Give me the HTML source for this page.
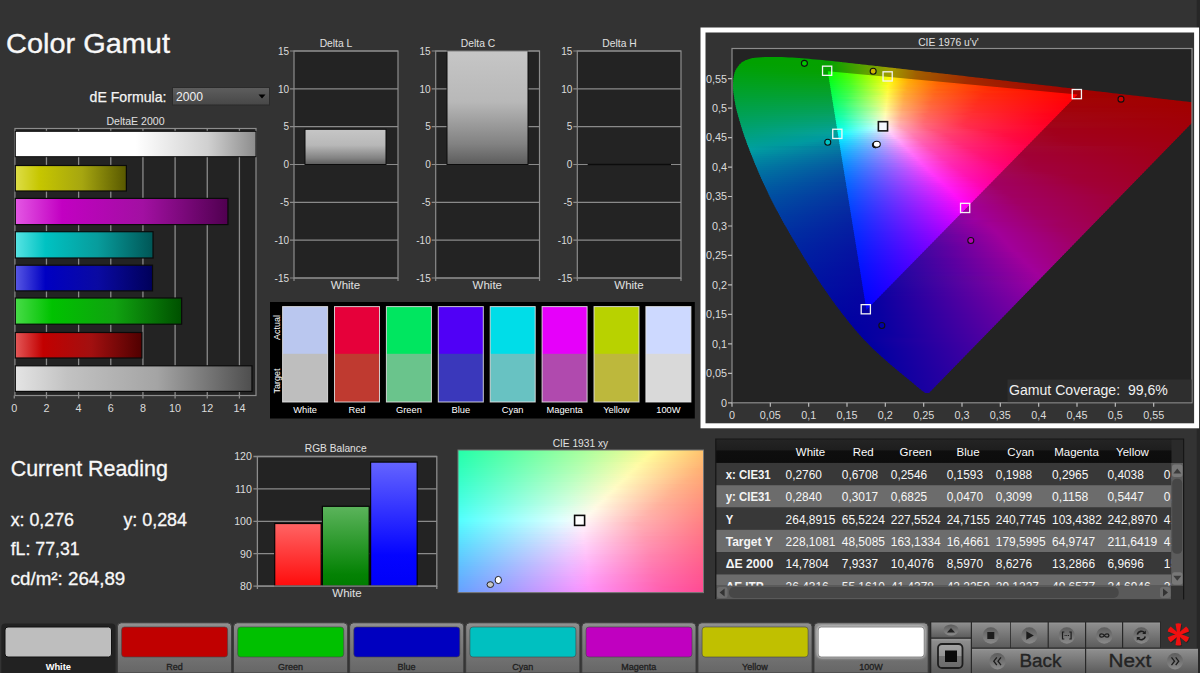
<!DOCTYPE html>
<html lang="en"><head><meta charset="utf-8"><title>Color Gamut</title>
<style>
html,body{margin:0;padding:0;background:#333;}
body{width:1200px;height:673px;position:relative;overflow:hidden;font-family:'Liberation Sans', sans-serif;}
</style></head><body>
<svg width="1200" height="673" viewBox="0 0 1200 673" font-family="'Liberation Sans', sans-serif" style="position:absolute;left:0;top:0"><defs><linearGradient id="dd" x1="0" y1="0" x2="0" y2="1"><stop offset="0" stop-color="#5e5e5e"/><stop offset="1" stop-color="#474747"/></linearGradient><linearGradient id="hb0" x1="0" y1="0" x2="1" y2="0"><stop offset="0" stop-color="#fff"/><stop offset=".5" stop-color="#fff"/><stop offset=".8" stop-color="#d0d0d0"/><stop offset="1" stop-color="#8c8c8c"/></linearGradient><linearGradient id="hb1" x1="0" y1="0" x2="1" y2="0"><stop offset="0" stop-color="#dede48"/><stop offset=".22" stop-color="#c6c600"/><stop offset=".6" stop-color="#a6a610"/><stop offset="1" stop-color="#585800"/></linearGradient><linearGradient id="hb2" x1="0" y1="0" x2="1" y2="0"><stop offset="0" stop-color="#e458e4"/><stop offset=".22" stop-color="#c200c2"/><stop offset=".6" stop-color="#a210a2"/><stop offset="1" stop-color="#500050"/></linearGradient><linearGradient id="hb3" x1="0" y1="0" x2="1" y2="0"><stop offset="0" stop-color="#58e4e4"/><stop offset=".22" stop-color="#00c2c2"/><stop offset=".6" stop-color="#089c9c"/><stop offset="1" stop-color="#005656"/></linearGradient><linearGradient id="hb4" x1="0" y1="0" x2="1" y2="0"><stop offset="0" stop-color="#5858e4"/><stop offset=".22" stop-color="#0000c2"/><stop offset=".6" stop-color="#0a0aa2"/><stop offset="1" stop-color="#00005a"/></linearGradient><linearGradient id="hb5" x1="0" y1="0" x2="1" y2="0"><stop offset="0" stop-color="#48dc48"/><stop offset=".22" stop-color="#00c200"/><stop offset=".6" stop-color="#10a210"/><stop offset="1" stop-color="#005000"/></linearGradient><linearGradient id="hb6" x1="0" y1="0" x2="1" y2="0"><stop offset="0" stop-color="#e45858"/><stop offset=".22" stop-color="#c20000"/><stop offset=".6" stop-color="#a21010"/><stop offset="1" stop-color="#500000"/></linearGradient><linearGradient id="hb7" x1="0" y1="0" x2="1" y2="0"><stop offset="0" stop-color="#e4e4e4"/><stop offset=".22" stop-color="#c2c2c2"/><stop offset=".6" stop-color="#a4a4a4"/><stop offset="1" stop-color="#4e4e4e"/></linearGradient><linearGradient id="vb" x1="0" y1="0" x2="0" y2="1"><stop offset="0" stop-color="#c6c6c6"/><stop offset=".45" stop-color="#b8b8b8"/><stop offset=".82" stop-color="#828282"/><stop offset="1" stop-color="#5c5c5c"/></linearGradient><clipPath id="loc"><path d="M928.88 393.02L925.64 392.95L922.79 391.24L920.17 389.06L917.55 386.95L914.99 384.76L912.43 382.58L909.84 380.44L907.23 378.31L904.62 376.18L902.02 374.05L899.43 371.91L896.85 369.74L894.27 367.58L891.7 365.41L889.13 363.24L886.57 361.05L884.03 358.84L881.51 356.61L879.02 354.35L876.56 352.06L874.13 349.73L871.72 347.38L869.34 345L866.99 342.6L864.66 340.17L862.36 337.71L860.09 335.23L857.86 332.71L855.66 330.17L853.49 327.59L851.35 325L849.23 322.38L847.12 319.75L845.04 317.11L842.96 314.46L840.91 311.8L838.87 309.12L836.85 306.43L834.86 303.72L832.88 301L830.92 298.26L828.97 295.51L827.05 292.76L825.13 289.99L823.23 287.21L821.34 284.43L819.46 281.64L817.59 278.84L815.75 276.03L813.91 273.21L812.1 270.37L810.29 267.53L808.51 264.68L806.73 261.82L804.97 258.96L803.21 256.08L801.47 253.2L799.74 250.32L798.01 247.43L796.3 244.54L794.59 241.64L792.88 238.74L791.18 235.83L789.49 232.92L787.81 230.01L786.13 227.09L784.47 224.16L782.82 221.23L781.19 218.28L779.57 215.33L777.97 212.37L776.39 209.4L774.83 206.42L773.29 203.43L771.77 200.43L770.28 197.42L768.8 194.4L767.34 191.37L765.9 188.32L764.47 185.27L763.07 182.22L761.68 179.15L760.31 176.07L758.96 172.99L757.63 169.9L756.32 166.8L755.03 163.69L753.76 160.58L752.5 157.46L751.26 154.33L750.02 151.2L748.81 148.06L747.61 144.91L746.44 141.75L745.29 138.58L744.18 135.41L743.11 132.22L742.08 129.02L741.09 125.8L740.13 122.58L739.17 119.35L738.24 116.1L737.35 112.85L736.51 109.58L735.76 106.3L735.1 103.01L734.55 99.7L734.03 96.36L733.55 93L733.18 89.63L733 86.27L733.08 82.93L733.38 79.56L733.84 76.16L734.62 72.87L735.89 69.81L737.64 66.89L739.8 64.23L742.31 62.07L745.27 60.44L748.46 59.2L751.68 58.28L755.01 57.76L758.38 57.44L761.73 57.17L765.1 57.04L768.46 56.99L771.83 56.96L775.19 56.97L778.56 57.03L781.92 57.12L785.28 57.25L788.64 57.41L792 57.59L795.36 57.8L798.72 58.03L802.07 58.29L805.43 58.56L808.78 58.84L812.13 59.14L815.48 59.45L818.83 59.77L822.18 60.1L825.53 60.43L828.87 60.77L832.22 61.12L835.57 61.47L838.91 61.82L842.26 62.18L845.6 62.55L848.95 62.91L852.29 63.28L855.63 63.65L858.98 64.02L862.32 64.4L865.66 64.77L869.01 65.15L872.35 65.52L875.69 65.9L879.04 66.28L882.38 66.66L885.72 67.03L889.07 67.41L892.41 67.8L895.75 68.18L899.09 68.56L902.44 68.95L905.78 69.33L909.12 69.71L912.46 70.1L915.81 70.48L919.15 70.87L922.49 71.25L925.83 71.64L929.17 72.02L932.52 72.41L935.86 72.79L939.2 73.17L942.54 73.56L945.89 73.94L949.23 74.33L952.57 74.71L955.91 75.1L959.26 75.48L962.6 75.86L965.94 76.25L969.28 76.63L972.63 77.01L975.97 77.39L979.31 77.78L982.65 78.16L986 78.54L989.34 78.93L992.68 79.31L996.02 79.7L999.36 80.09L1002.71 80.47L1006.05 80.86L1009.39 81.24L1012.73 81.63L1016.08 82.02L1019.42 82.4L1022.76 82.78L1026.1 83.17L1029.44 83.55L1032.79 83.94L1036.13 84.32L1039.47 84.7L1042.81 85.09L1046.16 85.47L1049.5 85.86L1052.84 86.24L1056.18 86.62L1059.53 87.01L1062.87 87.39L1066.21 87.77L1069.55 88.16L1072.9 88.54L1076.24 88.92L1079.58 89.3L1082.92 89.68L1086.27 90.06L1089.61 90.44L1092.95 90.82L1096.3 91.2L1099.64 91.59L1102.98 91.97L1106.32 92.36L1109.66 92.75L1113.01 93.13L1116.35 93.52L1119.69 93.91L1123.03 94.29L1126.37 94.68L1129.72 95.06L1133.06 95.45L1136.4 95.83L1139.74 96.21L1143.09 96.6L1146.43 96.98L1149.77 97.36L1153.11 97.75L1156.46 98.13L1159.8 98.51L1163.14 98.9L1166.48 99.29L1169.83 99.67L1173.17 100.06L1176.51 100.44L1179.85 100.83L1183.2 101.21L1186.54 101.58L1189.88 101.96L1193.22 102.35L1196.57 102.73L1199.91 103.12L1203.25 103.5L1206.59 103.89L1209.93 104.27Z"/></clipPath><clipPath id="plotc"><rect x="732.0" y="48.5" width="460.0" height="354.3"/></clipPath><clipPath id="tri"><path d="M1077.54 94.61L827.83 71.26L866.5 309.74Z"/></clipPath><linearGradient id="g1" gradientUnits="userSpaceOnUse" x1="751.96" x2="799.72" y1="0" y2="0"><stop offset="0" stop-color="#00a100"/><stop offset="1" stop-color="#00a100"/></linearGradient><linearGradient id="g2" gradientUnits="userSpaceOnUse" x1="744.89" x2="822.7" y1="0" y2="0"><stop offset="0" stop-color="#00a100"/><stop offset="1" stop-color="#00a100"/></linearGradient><linearGradient id="g3" gradientUnits="userSpaceOnUse" x1="740.95" x2="842.05" y1="0" y2="0"><stop offset="0" stop-color="#00a100"/><stop offset=".87" stop-color="#06a100"/><stop offset="1" stop-color="#21a100"/></linearGradient><linearGradient id="g4" gradientUnits="userSpaceOnUse" x1="738.57" x2="860.28" y1="0" y2="0"><stop offset="0" stop-color="#00a100"/><stop offset=".75" stop-color="#06a100"/><stop offset="1" stop-color="#4ca100"/></linearGradient><linearGradient id="g5" gradientUnits="userSpaceOnUse" x1="736.87" x2="878.07" y1="0" y2="0"><stop offset="0" stop-color="#00a103"/><stop offset=".65" stop-color="#05a100"/><stop offset=".99" stop-color="#7aa100"/><stop offset="1" stop-color="#7da100"/></linearGradient><linearGradient id="g6" gradientUnits="userSpaceOnUse" x1="735.48" x2="895.69" y1="0" y2="0"><stop offset="0" stop-color="#00a106"/><stop offset=".59" stop-color="#06a100"/><stop offset=".89" stop-color="#7ca100"/><stop offset=".97" stop-color="#a19c00"/><stop offset="1" stop-color="#a18d00"/></linearGradient><linearGradient id="g7" gradientUnits="userSpaceOnUse" x1="734.31" x2="913.12" y1="0" y2="0"><stop offset="0" stop-color="#00a109"/><stop offset=".54" stop-color="#06a100"/><stop offset=".79" stop-color="#78a100"/><stop offset=".88" stop-color="#a19a00"/><stop offset="1" stop-color="#a16700"/></linearGradient><linearGradient id="g8" gradientUnits="userSpaceOnUse" x1="733.48" x2="930.49" y1="0" y2="0"><stop offset="0" stop-color="#00a10c"/><stop offset=".49" stop-color="#05a100"/><stop offset=".72" stop-color="#74a100"/><stop offset=".8" stop-color="#a19b00"/><stop offset=".93" stop-color="#a16000"/><stop offset="1" stop-color="#a14d00"/></linearGradient><linearGradient id="g9" gradientUnits="userSpaceOnUse" x1="732.85" x2="947.87" y1="0" y2="0"><stop offset="0" stop-color="#00a10f"/><stop offset=".45" stop-color="#05a103"/><stop offset=".67" stop-color="#7ba100"/><stop offset=".73" stop-color="#a19c00"/><stop offset=".86" stop-color="#a15d00"/><stop offset="1" stop-color="#a13a00"/></linearGradient><linearGradient id="g10" gradientUnits="userSpaceOnUse" x1="732.37" x2="965.28" y1="0" y2="0"><stop offset="0" stop-color="#00a112"/><stop offset=".42" stop-color="#06a107"/><stop offset=".62" stop-color="#7ca100"/><stop offset=".68" stop-color="#a19b00"/><stop offset=".79" stop-color="#a15f00"/><stop offset="1" stop-color="#a12d00"/></linearGradient><linearGradient id="g11" gradientUnits="userSpaceOnUse" x1="732.09" x2="982.77" y1="0" y2="0"><stop offset="0" stop-color="#00a115"/><stop offset=".39" stop-color="#05a10b"/><stop offset=".57" stop-color="#78a103"/><stop offset=".63" stop-color="#a19b00"/><stop offset=".74" stop-color="#a15c00"/><stop offset=".95" stop-color="#a12800"/><stop offset="1" stop-color="#a12200"/></linearGradient><linearGradient id="g12" gradientUnits="userSpaceOnUse" x1="732" x2="1000.13" y1="0" y2="0"><stop offset="0" stop-color="#00a118"/><stop offset=".37" stop-color="#06a10f"/><stop offset=".54" stop-color="#77a108"/><stop offset=".59" stop-color="#a19c05"/><stop offset=".68" stop-color="#a15f00"/><stop offset=".88" stop-color="#a12a00"/><stop offset="1" stop-color="#a11900"/></linearGradient><linearGradient id="g13" gradientUnits="userSpaceOnUse" x1="732" x2="1017.44" y1="0" y2="0"><stop offset="0" stop-color="#00a11b"/><stop offset=".35" stop-color="#05a113"/><stop offset=".51" stop-color="#7ba10d"/><stop offset=".55" stop-color="#a19b0a"/><stop offset=".64" stop-color="#a15e03"/><stop offset=".83" stop-color="#a12900"/><stop offset="1" stop-color="#a11200"/></linearGradient><linearGradient id="g14" gradientUnits="userSpaceOnUse" x1="732" x2="1034.85" y1="0" y2="0"><stop offset="0" stop-color="#00a11e"/><stop offset=".33" stop-color="#05a117"/><stop offset=".48" stop-color="#79a112"/><stop offset=".52" stop-color="#a19d0f"/><stop offset=".6" stop-color="#a16007"/><stop offset=".77" stop-color="#a12b00"/><stop offset="1" stop-color="#a10c00"/></linearGradient><linearGradient id="g15" gradientUnits="userSpaceOnUse" x1="732" x2="1052.26" y1="0" y2="0"><stop offset="0" stop-color="#00a121"/><stop offset=".31" stop-color="#06a11b"/><stop offset=".45" stop-color="#7ba117"/><stop offset=".49" stop-color="#a19a14"/><stop offset=".57" stop-color="#a1600a"/><stop offset=".72" stop-color="#a12c01"/><stop offset="1" stop-color="#a10700"/></linearGradient><linearGradient id="g16" gradientUnits="userSpaceOnUse" x1="732" x2="1069.69" y1="0" y2="0"><stop offset="0" stop-color="#00a124"/><stop offset=".3" stop-color="#06a11f"/><stop offset=".43" stop-color="#79a11c"/><stop offset=".46" stop-color="#a19c1a"/><stop offset=".54" stop-color="#a15d0d"/><stop offset=".7" stop-color="#a12803"/><stop offset="1" stop-color="#a10300"/></linearGradient><linearGradient id="g17" gradientUnits="userSpaceOnUse" x1="732" x2="1087.27" y1="0" y2="0"><stop offset="0" stop-color="#00a127"/><stop offset=".28" stop-color="#05a124"/><stop offset=".4" stop-color="#76a121"/><stop offset=".44" stop-color="#a19b1f"/><stop offset=".52" stop-color="#a15b11"/><stop offset=".66" stop-color="#a12805"/><stop offset=".96" stop-color="#a10200"/><stop offset="1" stop-color="#a10000"/></linearGradient><linearGradient id="g18" gradientUnits="userSpaceOnUse" x1="732" x2="1104.7" y1="0" y2="0"><stop offset="0" stop-color="#00a12b"/><stop offset=".27" stop-color="#06a128"/><stop offset=".39" stop-color="#80a126"/><stop offset=".42" stop-color="#a19a24"/><stop offset=".49" stop-color="#a15c15"/><stop offset=".62" stop-color="#a12a08"/><stop offset=".9" stop-color="#a10300"/><stop offset="1" stop-color="#a10000"/></linearGradient><linearGradient id="g19" gradientUnits="userSpaceOnUse" x1="732" x2="1121.99" y1="0" y2="0"><stop offset="0" stop-color="#00a12e"/><stop offset=".26" stop-color="#06a12d"/><stop offset=".37" stop-color="#7aa12c"/><stop offset=".4" stop-color="#a19c2b"/><stop offset=".46" stop-color="#a15e19"/><stop offset=".58" stop-color="#a12c0b"/><stop offset=".83" stop-color="#a10500"/><stop offset="1" stop-color="#a10000"/></linearGradient><linearGradient id="g20" gradientUnits="userSpaceOnUse" x1="732.19" x2="1139.37" y1="0" y2="0"><stop offset="0" stop-color="#00a131"/><stop offset=".25" stop-color="#05a131"/><stop offset=".35" stop-color="#7aa132"/><stop offset=".38" stop-color="#a19c30"/><stop offset=".45" stop-color="#a15c1d"/><stop offset=".57" stop-color="#a1280d"/><stop offset=".83" stop-color="#a10101"/><stop offset="1" stop-color="#a10000"/></linearGradient><linearGradient id="g21" gradientUnits="userSpaceOnUse" x1="732.48" x2="1156.83" y1="0" y2="0"><stop offset="0" stop-color="#00a134"/><stop offset=".24" stop-color="#05a136"/><stop offset=".34" stop-color="#78a137"/><stop offset=".37" stop-color="#a19a35"/><stop offset=".43" stop-color="#a15c21"/><stop offset=".54" stop-color="#a1280f"/><stop offset=".79" stop-color="#a10202"/><stop offset="1" stop-color="#a10000"/></linearGradient><linearGradient id="g22" gradientUnits="userSpaceOnUse" x1="732.79" x2="1174.16" y1="0" y2="0"><stop offset="0" stop-color="#00a138"/><stop offset=".23" stop-color="#05a13b"/><stop offset=".33" stop-color="#7da13d"/><stop offset=".35" stop-color="#a19c3c"/><stop offset=".4" stop-color="#a16026"/><stop offset=".5" stop-color="#a12c13"/><stop offset=".72" stop-color="#a10505"/><stop offset="1" stop-color="#a10000"/></linearGradient><linearGradient id="g23" gradientUnits="userSpaceOnUse" x1="733.1" x2="1191.69" y1="0" y2="0"><stop offset="0" stop-color="#00a13b"/><stop offset=".22" stop-color="#06a140"/><stop offset=".31" stop-color="#78a143"/><stop offset=".34" stop-color="#a19a41"/><stop offset=".39" stop-color="#a15f2a"/><stop offset=".48" stop-color="#a12c16"/><stop offset=".69" stop-color="#a10506"/><stop offset="1" stop-color="#a10000"/></linearGradient><linearGradient id="g24" gradientUnits="userSpaceOnUse" x1="733.44" x2="1192" y1="0" y2="0"><stop offset="0" stop-color="#00a13f"/><stop offset=".22" stop-color="#06a145"/><stop offset=".31" stop-color="#79a149"/><stop offset=".34" stop-color="#a19b48"/><stop offset=".39" stop-color="#a15f2f"/><stop offset=".48" stop-color="#a12c19"/><stop offset=".68" stop-color="#a10508"/><stop offset="1" stop-color="#a10000"/></linearGradient><linearGradient id="g25" gradientUnits="userSpaceOnUse" x1="733.8" x2="1192" y1="0" y2="0"><stop offset="0" stop-color="#00a142"/><stop offset=".22" stop-color="#06a14a"/><stop offset=".31" stop-color="#77a14f"/><stop offset=".34" stop-color="#a19a4e"/><stop offset=".39" stop-color="#a15c32"/><stop offset=".49" stop-color="#a12a1a"/><stop offset=".69" stop-color="#a10409"/><stop offset="1" stop-color="#a10000"/></linearGradient><linearGradient id="g26" gradientUnits="userSpaceOnUse" x1="734.2" x2="1192" y1="0" y2="0"><stop offset="0" stop-color="#00a146"/><stop offset=".22" stop-color="#06a14f"/><stop offset=".31" stop-color="#7da156"/><stop offset=".33" stop-color="#a19a54"/><stop offset=".39" stop-color="#a15c36"/><stop offset=".48" stop-color="#a1291d"/><stop offset=".7" stop-color="#a1020a"/><stop offset="1" stop-color="#a10001"/></linearGradient><linearGradient id="g27" gradientUnits="userSpaceOnUse" x1="734.65" x2="1192" y1="0" y2="0"><stop offset="0" stop-color="#00a149"/><stop offset=".22" stop-color="#06a154"/><stop offset=".31" stop-color="#82a15c"/><stop offset=".33" stop-color="#a19c5c"/><stop offset=".38" stop-color="#a15f3c"/><stop offset=".47" stop-color="#a12c21"/><stop offset=".67" stop-color="#a1050d"/><stop offset="1" stop-color="#a10002"/></linearGradient><linearGradient id="g28" gradientUnits="userSpaceOnUse" x1="735.12" x2="1192" y1="0" y2="0"><stop offset="0" stop-color="#00a14d"/><stop offset=".22" stop-color="#04a15a"/><stop offset=".31" stop-color="#7aa162"/><stop offset=".33" stop-color="#a19d63"/><stop offset=".38" stop-color="#a15e40"/><stop offset=".48" stop-color="#a12a23"/><stop offset=".68" stop-color="#a1030d"/><stop offset="1" stop-color="#a10002"/></linearGradient><linearGradient id="g29" gradientUnits="userSpaceOnUse" x1="735.63" x2="1192" y1="0" y2="0"><stop offset="0" stop-color="#00a151"/><stop offset=".22" stop-color="#05a15f"/><stop offset=".3" stop-color="#78a169"/><stop offset=".33" stop-color="#a19b69"/><stop offset=".38" stop-color="#a15f45"/><stop offset=".47" stop-color="#a12d28"/><stop offset=".65" stop-color="#a10611"/><stop offset="1" stop-color="#a10003"/></linearGradient><linearGradient id="g30" gradientUnits="userSpaceOnUse" x1="736.16" x2="1192" y1="0" y2="0"><stop offset="0" stop-color="#00a154"/><stop offset=".22" stop-color="#06a165"/><stop offset=".31" stop-color="#7ea170"/><stop offset=".33" stop-color="#a19b70"/><stop offset=".38" stop-color="#a15f4a"/><stop offset=".46" stop-color="#a12d2b"/><stop offset=".65" stop-color="#a10613"/><stop offset="1" stop-color="#a10004"/></linearGradient><linearGradient id="g31" gradientUnits="userSpaceOnUse" x1="736.71" x2="1192" y1="0" y2="0"><stop offset="0" stop-color="#00a158"/><stop offset=".22" stop-color="#06a16b"/><stop offset=".3" stop-color="#75a176"/><stop offset=".33" stop-color="#a19d78"/><stop offset=".38" stop-color="#a15f4f"/><stop offset=".46" stop-color="#a12e2f"/><stop offset=".64" stop-color="#a10715"/><stop offset="1" stop-color="#a10005"/></linearGradient><linearGradient id="g32" gradientUnits="userSpaceOnUse" x1="737.28" x2="1192" y1="0" y2="0"><stop offset="0" stop-color="#00a15c"/><stop offset=".22" stop-color="#04a170"/><stop offset=".3" stop-color="#78a17d"/><stop offset=".33" stop-color="#a19d80"/><stop offset=".37" stop-color="#a16156"/><stop offset=".45" stop-color="#a13033"/><stop offset=".63" stop-color="#a10818"/><stop offset=".89" stop-color="#a10009"/><stop offset="1" stop-color="#a10006"/></linearGradient><linearGradient id="g33" gradientUnits="userSpaceOnUse" x1="737.87" x2="1192" y1="0" y2="0"><stop offset="0" stop-color="#00a160"/><stop offset=".22" stop-color="#05a176"/><stop offset=".3" stop-color="#76a184"/><stop offset=".33" stop-color="#a19b86"/><stop offset=".37" stop-color="#a15d58"/><stop offset=".46" stop-color="#a12a33"/><stop offset=".66" stop-color="#a10316"/><stop offset="1" stop-color="#a10007"/></linearGradient><linearGradient id="g34" gradientUnits="userSpaceOnUse" x1="738.46" x2="1192" y1="0" y2="0"><stop offset="0" stop-color="#00a164"/><stop offset=".22" stop-color="#06a17d"/><stop offset=".3" stop-color="#79a18c"/><stop offset=".32" stop-color="#a19b8d"/><stop offset=".37" stop-color="#a15d5d"/><stop offset=".46" stop-color="#a12c37"/><stop offset=".64" stop-color="#a1051a"/><stop offset="1" stop-color="#a10007"/></linearGradient><linearGradient id="g35" gradientUnits="userSpaceOnUse" x1="739.06" x2="1192" y1="0" y2="0"><stop offset="0" stop-color="#00a168"/><stop offset=".22" stop-color="#04a183"/><stop offset=".3" stop-color="#78a194"/><stop offset=".32" stop-color="#a19c95"/><stop offset=".37" stop-color="#a16166"/><stop offset=".45" stop-color="#a12e3d"/><stop offset=".63" stop-color="#a1061c"/><stop offset="1" stop-color="#a10008"/></linearGradient><linearGradient id="g36" gradientUnits="userSpaceOnUse" x1="739.66" x2="1190.29" y1="0" y2="0"><stop offset="0" stop-color="#00a16c"/><stop offset=".22" stop-color="#05a189"/><stop offset=".29" stop-color="#73a19a"/><stop offset=".32" stop-color="#a19d9e"/><stop offset=".37" stop-color="#a15f6a"/><stop offset=".45" stop-color="#a12c3f"/><stop offset=".64" stop-color="#a1041d"/><stop offset="1" stop-color="#a10009"/></linearGradient><linearGradient id="g37" gradientUnits="userSpaceOnUse" x1="740.27" x2="1188.34" y1="0" y2="0"><stop offset="0" stop-color="#00a171"/><stop offset=".22" stop-color="#05a190"/><stop offset=".32" stop-color="#9399a1"/><stop offset=".33" stop-color="#a18e9a"/><stop offset=".38" stop-color="#a15465"/><stop offset=".47" stop-color="#a1243c"/><stop offset=".68" stop-color="#a1001b"/><stop offset="1" stop-color="#a1000a"/></linearGradient><linearGradient id="g38" gradientUnits="userSpaceOnUse" x1="740.9" x2="1186.39" y1="0" y2="0"><stop offset="0" stop-color="#00a175"/><stop offset=".22" stop-color="#06a196"/><stop offset=".3" stop-color="#7b95a1"/><stop offset=".33" stop-color="#a1879b"/><stop offset=".39" stop-color="#a14c64"/><stop offset=".5" stop-color="#a11d38"/><stop offset=".7" stop-color="#a1001b"/><stop offset="1" stop-color="#a1000b"/></linearGradient><linearGradient id="g39" gradientUnits="userSpaceOnUse" x1="741.54" x2="1184.45" y1="0" y2="0"><stop offset="0" stop-color="#00a179"/><stop offset=".22" stop-color="#05a19d"/><stop offset=".34" stop-color="#a1809c"/><stop offset=".4" stop-color="#a14764"/><stop offset=".51" stop-color="#a11938"/><stop offset=".71" stop-color="#a1001b"/><stop offset="1" stop-color="#a1000c"/></linearGradient><linearGradient id="g40" gradientUnits="userSpaceOnUse" x1="742.21" x2="1182.5" y1="0" y2="0"><stop offset="0" stop-color="#00a17e"/><stop offset=".22" stop-color="#059da1"/><stop offset=".34" stop-color="#a17b9d"/><stop offset=".4" stop-color="#a14466"/><stop offset=".52" stop-color="#a11738"/><stop offset=".71" stop-color="#a1001d"/><stop offset="1" stop-color="#a1000d"/></linearGradient><linearGradient id="g41" gradientUnits="userSpaceOnUse" x1="742.89" x2="1180.55" y1="0" y2="0"><stop offset="0" stop-color="#00a182"/><stop offset=".21" stop-color="#009ba1"/><stop offset=".23" stop-color="#0996a1"/><stop offset=".35" stop-color="#a1719b"/><stop offset=".42" stop-color="#a13c62"/><stop offset=".54" stop-color="#a11236"/><stop offset=".73" stop-color="#a1001d"/><stop offset="1" stop-color="#a1000e"/></linearGradient><linearGradient id="g42" gradientUnits="userSpaceOnUse" x1="743.59" x2="1178.61" y1="0" y2="0"><stop offset="0" stop-color="#00a187"/><stop offset=".18" stop-color="#009aa1"/><stop offset=".22" stop-color="#0790a1"/><stop offset=".35" stop-color="#a16d9d"/><stop offset=".42" stop-color="#a13964"/><stop offset=".55" stop-color="#a11037"/><stop offset=".73" stop-color="#a1001f"/><stop offset="1" stop-color="#a1000f"/></linearGradient><linearGradient id="g43" gradientUnits="userSpaceOnUse" x1="744.3" x2="1176.66" y1="0" y2="0"><stop offset="0" stop-color="#00a18c"/><stop offset=".16" stop-color="#009aa1"/><stop offset=".22" stop-color="#058ba1"/><stop offset=".36" stop-color="#a1649b"/><stop offset=".43" stop-color="#a13463"/><stop offset=".57" stop-color="#a10d36"/><stop offset=".74" stop-color="#a1001f"/><stop offset="1" stop-color="#a10010"/></linearGradient><linearGradient id="g44" gradientUnits="userSpaceOnUse" x1="745.03" x2="1174.71" y1="0" y2="0"><stop offset="0" stop-color="#00a191"/><stop offset=".13" stop-color="#0099a1"/><stop offset=".23" stop-color="#0685a1"/><stop offset=".37" stop-color="#a15f9b"/><stop offset=".44" stop-color="#a13063"/><stop offset=".58" stop-color="#a10b37"/><stop offset=".76" stop-color="#a10020"/><stop offset="1" stop-color="#a10012"/></linearGradient><linearGradient id="g45" gradientUnits="userSpaceOnUse" x1="745.77" x2="1172.77" y1="0" y2="0"><stop offset="0" stop-color="#00a196"/><stop offset=".12" stop-color="#0097a1"/><stop offset=".22" stop-color="#0580a1"/><stop offset=".37" stop-color="#a15a9c"/><stop offset=".44" stop-color="#a12e64"/><stop offset=".59" stop-color="#a10936"/><stop offset=".79" stop-color="#a1001f"/><stop offset="1" stop-color="#a10013"/></linearGradient><linearGradient id="g46" gradientUnits="userSpaceOnUse" x1="746.52" x2="1170.82" y1="0" y2="0"><stop offset="0" stop-color="#00a19b"/><stop offset=".22" stop-color="#017ca1"/><stop offset=".38" stop-color="#a1549b"/><stop offset=".45" stop-color="#a12a64"/><stop offset=".6" stop-color="#a10737"/><stop offset=".97" stop-color="#a10015"/><stop offset="1" stop-color="#a10014"/></linearGradient><linearGradient id="g47" gradientUnits="userSpaceOnUse" x1="747.28" x2="1168.87" y1="0" y2="0"><stop offset="0" stop-color="#00a1a0"/><stop offset=".23" stop-color="#0676a1"/><stop offset=".38" stop-color="#a14f9b"/><stop offset=".46" stop-color="#a12563"/><stop offset=".61" stop-color="#a10537"/><stop offset=".98" stop-color="#a10016"/><stop offset="1" stop-color="#a10015"/></linearGradient><linearGradient id="g48" gradientUnits="userSpaceOnUse" x1="748.06" x2="1166.93" y1="0" y2="0"><stop offset="0" stop-color="#009ca1"/><stop offset=".23" stop-color="#0572a1"/><stop offset=".39" stop-color="#a14b9c"/><stop offset=".47" stop-color="#a12465"/><stop offset=".63" stop-color="#a10337"/><stop offset="1" stop-color="#a10016"/></linearGradient><linearGradient id="g49" gradientUnits="userSpaceOnUse" x1="748.84" x2="1164.98" y1="0" y2="0"><stop offset="0" stop-color="#0098a1"/><stop offset=".23" stop-color="#056ea1"/><stop offset=".39" stop-color="#a1469b"/><stop offset=".47" stop-color="#a12064"/><stop offset=".64" stop-color="#a10137"/><stop offset="1" stop-color="#a10017"/></linearGradient><linearGradient id="g50" gradientUnits="userSpaceOnUse" x1="749.63" x2="1163.03" y1="0" y2="0"><stop offset="0" stop-color="#0093a1"/><stop offset=".23" stop-color="#0669a1"/><stop offset=".4" stop-color="#a1429b"/><stop offset=".49" stop-color="#a11c62"/><stop offset=".66" stop-color="#a10036"/><stop offset="1" stop-color="#a10018"/></linearGradient><linearGradient id="g51" gradientUnits="userSpaceOnUse" x1="750.42" x2="1161.09" y1="0" y2="0"><stop offset="0" stop-color="#008ea1"/><stop offset=".23" stop-color="#0566a1"/><stop offset=".4" stop-color="#a13e9c"/><stop offset=".49" stop-color="#a11a63"/><stop offset=".67" stop-color="#a10037"/><stop offset="1" stop-color="#a1001a"/></linearGradient><linearGradient id="g52" gradientUnits="userSpaceOnUse" x1="751.22" x2="1159.14" y1="0" y2="0"><stop offset="0" stop-color="#008aa1"/><stop offset=".23" stop-color="#0662a1"/><stop offset=".41" stop-color="#a13b9c"/><stop offset=".5" stop-color="#a11863"/><stop offset=".68" stop-color="#a10037"/><stop offset="1" stop-color="#a1001b"/></linearGradient><linearGradient id="g53" gradientUnits="userSpaceOnUse" x1="752.03" x2="1157.19" y1="0" y2="0"><stop offset="0" stop-color="#0086a1"/><stop offset=".23" stop-color="#055fa1"/><stop offset=".42" stop-color="#a1369b"/><stop offset=".51" stop-color="#a11564"/><stop offset=".69" stop-color="#a10038"/><stop offset="1" stop-color="#a1001c"/></linearGradient><linearGradient id="g54" gradientUnits="userSpaceOnUse" x1="752.84" x2="1155.25" y1="0" y2="0"><stop offset="0" stop-color="#0082a1"/><stop offset=".23" stop-color="#065ba1"/><stop offset=".42" stop-color="#a1339b"/><stop offset=".52" stop-color="#a11363"/><stop offset=".69" stop-color="#a1003a"/><stop offset="1" stop-color="#a1001d"/></linearGradient><linearGradient id="g55" gradientUnits="userSpaceOnUse" x1="753.66" x2="1153.3" y1="0" y2="0"><stop offset="0" stop-color="#007ea1"/><stop offset=".23" stop-color="#0558a1"/><stop offset=".43" stop-color="#a1309c"/><stop offset=".52" stop-color="#a11266"/><stop offset=".69" stop-color="#a1003c"/><stop offset="1" stop-color="#a1001f"/></linearGradient><linearGradient id="g56" gradientUnits="userSpaceOnUse" x1="754.49" x2="1151.35" y1="0" y2="0"><stop offset="0" stop-color="#007aa1"/><stop offset=".23" stop-color="#0655a1"/><stop offset=".43" stop-color="#a12d9c"/><stop offset=".53" stop-color="#a10f65"/><stop offset=".7" stop-color="#a1003d"/><stop offset="1" stop-color="#a10020"/></linearGradient><linearGradient id="g57" gradientUnits="userSpaceOnUse" x1="755.33" x2="1149.41" y1="0" y2="0"><stop offset="0" stop-color="#0077a1"/><stop offset=".23" stop-color="#0652a1"/><stop offset=".44" stop-color="#a1299b"/><stop offset=".55" stop-color="#a10c62"/><stop offset=".71" stop-color="#a1003d"/><stop offset="1" stop-color="#a10021"/></linearGradient><linearGradient id="g58" gradientUnits="userSpaceOnUse" x1="756.17" x2="1147.46" y1="0" y2="0"><stop offset="0" stop-color="#0073a1"/><stop offset=".23" stop-color="#054fa1"/><stop offset=".45" stop-color="#a1269b"/><stop offset=".56" stop-color="#a10a62"/><stop offset=".73" stop-color="#a1003c"/><stop offset="1" stop-color="#a10022"/></linearGradient><linearGradient id="g59" gradientUnits="userSpaceOnUse" x1="757.03" x2="1145.51" y1="0" y2="0"><stop offset="0" stop-color="#0070a1"/><stop offset=".23" stop-color="#064ca1"/><stop offset=".45" stop-color="#a1249c"/><stop offset=".56" stop-color="#a10964"/><stop offset=".75" stop-color="#a1003c"/><stop offset="1" stop-color="#a10024"/></linearGradient><linearGradient id="g60" gradientUnits="userSpaceOnUse" x1="757.9" x2="1143.57" y1="0" y2="0"><stop offset="0" stop-color="#006da1"/><stop offset=".23" stop-color="#054aa1"/><stop offset=".46" stop-color="#a1219c"/><stop offset=".57" stop-color="#a10765"/><stop offset=".79" stop-color="#a10038"/><stop offset="1" stop-color="#a10025"/></linearGradient><linearGradient id="g61" gradientUnits="userSpaceOnUse" x1="758.78" x2="1141.62" y1="0" y2="0"><stop offset="0" stop-color="#006aa1"/><stop offset=".23" stop-color="#0647a1"/><stop offset=".46" stop-color="#a11e9c"/><stop offset=".58" stop-color="#a10563"/><stop offset=".82" stop-color="#a10036"/><stop offset="1" stop-color="#a10027"/></linearGradient><linearGradient id="g62" gradientUnits="userSpaceOnUse" x1="759.67" x2="1139.67" y1="0" y2="0"><stop offset="0" stop-color="#0067a1"/><stop offset=".23" stop-color="#0545a1"/><stop offset=".47" stop-color="#a11b9b"/><stop offset=".6" stop-color="#a10363"/><stop offset=".83" stop-color="#a10037"/><stop offset="1" stop-color="#a10028"/></linearGradient><linearGradient id="g63" gradientUnits="userSpaceOnUse" x1="760.56" x2="1137.73" y1="0" y2="0"><stop offset="0" stop-color="#0064a1"/><stop offset=".24" stop-color="#0642a1"/><stop offset=".48" stop-color="#a1199b"/><stop offset=".61" stop-color="#a10163"/><stop offset=".85" stop-color="#a10036"/><stop offset="1" stop-color="#a10029"/></linearGradient><linearGradient id="g64" gradientUnits="userSpaceOnUse" x1="761.47" x2="1135.78" y1="0" y2="0"><stop offset="0" stop-color="#0061a1"/><stop offset=".23" stop-color="#0540a1"/><stop offset=".49" stop-color="#a1179b"/><stop offset=".61" stop-color="#a10064"/><stop offset=".85" stop-color="#a10038"/><stop offset="1" stop-color="#a1002b"/></linearGradient><linearGradient id="g65" gradientUnits="userSpaceOnUse" x1="762.39" x2="1133.83" y1="0" y2="0"><stop offset="0" stop-color="#005ea1"/><stop offset=".24" stop-color="#063ea1"/><stop offset=".49" stop-color="#a1159c"/><stop offset=".62" stop-color="#a10063"/><stop offset=".88" stop-color="#a10037"/><stop offset="1" stop-color="#a1002c"/></linearGradient><linearGradient id="g66" gradientUnits="userSpaceOnUse" x1="763.31" x2="1131.89" y1="0" y2="0"><stop offset="0" stop-color="#005ba1"/><stop offset=".24" stop-color="#053ca1"/><stop offset=".5" stop-color="#a1129c"/><stop offset=".63" stop-color="#a10064"/><stop offset=".9" stop-color="#a10037"/><stop offset="1" stop-color="#a1002e"/></linearGradient><linearGradient id="g67" gradientUnits="userSpaceOnUse" x1="764.25" x2="1129.94" y1="0" y2="0"><stop offset="0" stop-color="#0059a1"/><stop offset=".24" stop-color="#063aa1"/><stop offset=".51" stop-color="#a1109c"/><stop offset=".64" stop-color="#a10063"/><stop offset=".92" stop-color="#a10037"/><stop offset="1" stop-color="#a1002f"/></linearGradient><linearGradient id="g68" gradientUnits="userSpaceOnUse" x1="765.19" x2="1127.99" y1="0" y2="0"><stop offset="0" stop-color="#0056a1"/><stop offset=".24" stop-color="#0638a1"/><stop offset=".51" stop-color="#a10e9c"/><stop offset=".66" stop-color="#a10063"/><stop offset=".94" stop-color="#a10036"/><stop offset="1" stop-color="#a10031"/></linearGradient><linearGradient id="g69" gradientUnits="userSpaceOnUse" x1="766.15" x2="1126.05" y1="0" y2="0"><stop offset="0" stop-color="#0054a1"/><stop offset=".24" stop-color="#0536a1"/><stop offset=".52" stop-color="#a10c9c"/><stop offset=".66" stop-color="#a10065"/><stop offset=".94" stop-color="#a10038"/><stop offset="1" stop-color="#a10032"/></linearGradient><linearGradient id="g70" gradientUnits="userSpaceOnUse" x1="767.11" x2="1124.1" y1="0" y2="0"><stop offset="0" stop-color="#0051a1"/><stop offset=".24" stop-color="#0634a1"/><stop offset=".53" stop-color="#a10a9b"/><stop offset=".68" stop-color="#a10062"/><stop offset=".98" stop-color="#a10036"/><stop offset="1" stop-color="#a10034"/></linearGradient><linearGradient id="g71" gradientUnits="userSpaceOnUse" x1="768.09" x2="1122.15" y1="0" y2="0"><stop offset="0" stop-color="#004fa1"/><stop offset=".24" stop-color="#0632a1"/><stop offset=".54" stop-color="#a1089b"/><stop offset=".69" stop-color="#a10062"/><stop offset="1" stop-color="#a10036"/><stop offset="1" stop-color="#a10036"/></linearGradient><linearGradient id="g72" gradientUnits="userSpaceOnUse" x1="769.07" x2="1120.21" y1="0" y2="0"><stop offset="0" stop-color="#004da1"/><stop offset=".24" stop-color="#0631a1"/><stop offset=".54" stop-color="#a1069c"/><stop offset=".69" stop-color="#a10066"/><stop offset=".98" stop-color="#a10039"/><stop offset="1" stop-color="#a10037"/></linearGradient><linearGradient id="g73" gradientUnits="userSpaceOnUse" x1="770.06" x2="1118.26" y1="0" y2="0"><stop offset="0" stop-color="#004ba1"/><stop offset=".24" stop-color="#052fa1"/><stop offset=".55" stop-color="#a1059c"/><stop offset=".71" stop-color="#a10063"/><stop offset="1" stop-color="#a10039"/></linearGradient><linearGradient id="g74" gradientUnits="userSpaceOnUse" x1="771.07" x2="1116.31" y1="0" y2="0"><stop offset="0" stop-color="#0049a1"/><stop offset=".24" stop-color="#062da1"/><stop offset=".56" stop-color="#a1039c"/><stop offset=".71" stop-color="#a10065"/><stop offset="1" stop-color="#a1003b"/></linearGradient><linearGradient id="g75" gradientUnits="userSpaceOnUse" x1="772.08" x2="1114.37" y1="0" y2="0"><stop offset="0" stop-color="#0047a1"/><stop offset=".24" stop-color="#062ca1"/><stop offset=".57" stop-color="#a1019c"/><stop offset=".73" stop-color="#a10063"/><stop offset="1" stop-color="#a1003c"/></linearGradient><linearGradient id="g76" gradientUnits="userSpaceOnUse" x1="773.11" x2="1112.42" y1="0" y2="0"><stop offset="0" stop-color="#0045a1"/><stop offset=".24" stop-color="#052aa1"/><stop offset=".57" stop-color="#a1009c"/><stop offset=".74" stop-color="#a10065"/><stop offset="1" stop-color="#a1003e"/></linearGradient><linearGradient id="g77" gradientUnits="userSpaceOnUse" x1="774.15" x2="1110.47" y1="0" y2="0"><stop offset="0" stop-color="#0043a1"/><stop offset=".24" stop-color="#0629a1"/><stop offset=".58" stop-color="#a1009c"/><stop offset=".75" stop-color="#a10064"/><stop offset="1" stop-color="#a10040"/></linearGradient><linearGradient id="g78" gradientUnits="userSpaceOnUse" x1="775.2" x2="1108.53" y1="0" y2="0"><stop offset="0" stop-color="#0041a1"/><stop offset=".24" stop-color="#0627a1"/><stop offset=".59" stop-color="#a1009c"/><stop offset=".77" stop-color="#a10064"/><stop offset="1" stop-color="#a10042"/></linearGradient><linearGradient id="g79" gradientUnits="userSpaceOnUse" x1="776.27" x2="1106.58" y1="0" y2="0"><stop offset="0" stop-color="#003fa1"/><stop offset=".24" stop-color="#0526a1"/><stop offset=".6" stop-color="#a1009c"/><stop offset=".78" stop-color="#a10064"/><stop offset="1" stop-color="#a10044"/></linearGradient><linearGradient id="g80" gradientUnits="userSpaceOnUse" x1="777.35" x2="1104.63" y1="0" y2="0"><stop offset="0" stop-color="#003da1"/><stop offset=".24" stop-color="#0624a1"/><stop offset=".61" stop-color="#a1009c"/><stop offset=".79" stop-color="#a10064"/><stop offset="1" stop-color="#a10046"/></linearGradient><linearGradient id="g81" gradientUnits="userSpaceOnUse" x1="778.43" x2="1102.69" y1="0" y2="0"><stop offset="0" stop-color="#003ba1"/><stop offset=".24" stop-color="#0623a1"/><stop offset=".61" stop-color="#a1009d"/><stop offset=".8" stop-color="#a10065"/><stop offset="1" stop-color="#a10048"/></linearGradient><linearGradient id="g82" gradientUnits="userSpaceOnUse" x1="779.53" x2="1100.74" y1="0" y2="0"><stop offset="0" stop-color="#003aa1"/><stop offset=".24" stop-color="#0522a1"/><stop offset=".61" stop-color="#a000a1"/><stop offset=".8" stop-color="#a10068"/><stop offset="1" stop-color="#a10049"/></linearGradient><linearGradient id="g83" gradientUnits="userSpaceOnUse" x1="780.64" x2="1098.79" y1="0" y2="0"><stop offset="0" stop-color="#0038a1"/><stop offset=".24" stop-color="#0621a1"/><stop offset=".61" stop-color="#9900a1"/><stop offset=".68" stop-color="#a1008a"/><stop offset=".92" stop-color="#a10056"/><stop offset="1" stop-color="#a1004b"/></linearGradient><linearGradient id="g84" gradientUnits="userSpaceOnUse" x1="781.76" x2="1096.85" y1="0" y2="0"><stop offset="0" stop-color="#0036a1"/><stop offset=".24" stop-color="#061fa1"/><stop offset=".6" stop-color="#9500a1"/><stop offset=".66" stop-color="#a10094"/><stop offset=".89" stop-color="#a1005d"/><stop offset="1" stop-color="#a1004e"/></linearGradient><linearGradient id="g85" gradientUnits="userSpaceOnUse" x1="782.88" x2="1094.9" y1="0" y2="0"><stop offset="0" stop-color="#0035a1"/><stop offset=".24" stop-color="#061ea1"/><stop offset=".6" stop-color="#9000a1"/><stop offset=".66" stop-color="#a10097"/><stop offset=".88" stop-color="#a10060"/><stop offset="1" stop-color="#a10050"/></linearGradient><linearGradient id="g86" gradientUnits="userSpaceOnUse" x1="784.01" x2="1092.95" y1="0" y2="0"><stop offset="0" stop-color="#0033a1"/><stop offset=".24" stop-color="#061da1"/><stop offset=".6" stop-color="#8d00a1"/><stop offset=".67" stop-color="#a10098"/><stop offset=".9" stop-color="#a1005f"/><stop offset="1" stop-color="#a10052"/></linearGradient><linearGradient id="g87" gradientUnits="userSpaceOnUse" x1="785.15" x2="1091.01" y1="0" y2="0"><stop offset="0" stop-color="#0031a1"/><stop offset=".24" stop-color="#061ca1"/><stop offset=".6" stop-color="#8900a1"/><stop offset=".68" stop-color="#a10099"/><stop offset=".9" stop-color="#a10063"/><stop offset="1" stop-color="#a10054"/></linearGradient><linearGradient id="g88" gradientUnits="userSpaceOnUse" x1="786.3" x2="1089.06" y1="0" y2="0"><stop offset="0" stop-color="#0030a1"/><stop offset=".24" stop-color="#061ba1"/><stop offset=".59" stop-color="#8400a1"/><stop offset=".69" stop-color="#a1009a"/><stop offset=".9" stop-color="#a10064"/><stop offset="1" stop-color="#a10056"/></linearGradient><linearGradient id="g89" gradientUnits="userSpaceOnUse" x1="787.46" x2="1087.11" y1="0" y2="0"><stop offset="0" stop-color="#002ea1"/><stop offset=".24" stop-color="#061aa1"/><stop offset=".59" stop-color="#8000a1"/><stop offset=".7" stop-color="#a1009a"/><stop offset=".93" stop-color="#a10062"/><stop offset="1" stop-color="#a10058"/></linearGradient><linearGradient id="g90" gradientUnits="userSpaceOnUse" x1="788.62" x2="1085.17" y1="0" y2="0"><stop offset="0" stop-color="#002da1"/><stop offset=".24" stop-color="#0519a1"/><stop offset=".59" stop-color="#7b00a1"/><stop offset=".71" stop-color="#a1009a"/><stop offset=".94" stop-color="#a10063"/><stop offset="1" stop-color="#a1005b"/></linearGradient><linearGradient id="g91" gradientUnits="userSpaceOnUse" x1="789.78" x2="1083.22" y1="0" y2="0"><stop offset="0" stop-color="#002ca1"/><stop offset=".24" stop-color="#0618a1"/><stop offset=".59" stop-color="#7800a1"/><stop offset=".72" stop-color="#a1009a"/><stop offset=".96" stop-color="#a10062"/><stop offset="1" stop-color="#a1005d"/></linearGradient><linearGradient id="g92" gradientUnits="userSpaceOnUse" x1="790.95" x2="1081.27" y1="0" y2="0"><stop offset="0" stop-color="#002aa1"/><stop offset=".24" stop-color="#0617a1"/><stop offset=".58" stop-color="#7500a1"/><stop offset=".73" stop-color="#a1009a"/><stop offset=".97" stop-color="#a10063"/><stop offset="1" stop-color="#a1005f"/></linearGradient><linearGradient id="g93" gradientUnits="userSpaceOnUse" x1="792.12" x2="1079.33" y1="0" y2="0"><stop offset="0" stop-color="#0029a1"/><stop offset=".24" stop-color="#0616a1"/><stop offset=".58" stop-color="#7200a1"/><stop offset=".74" stop-color="#a1009b"/><stop offset=".98" stop-color="#a10064"/><stop offset="1" stop-color="#a10062"/></linearGradient><linearGradient id="g94" gradientUnits="userSpaceOnUse" x1="793.3" x2="1077.38" y1="0" y2="0"><stop offset="0" stop-color="#0027a1"/><stop offset=".24" stop-color="#0615a1"/><stop offset=".58" stop-color="#6e00a1"/><stop offset=".75" stop-color="#a1009b"/><stop offset="1" stop-color="#a10064"/></linearGradient><linearGradient id="g95" gradientUnits="userSpaceOnUse" x1="794.48" x2="1075.43" y1="0" y2="0"><stop offset="0" stop-color="#0026a1"/><stop offset=".24" stop-color="#0614a1"/><stop offset=".58" stop-color="#6b00a1"/><stop offset=".76" stop-color="#a1009b"/><stop offset="1" stop-color="#a10067"/></linearGradient><linearGradient id="g96" gradientUnits="userSpaceOnUse" x1="795.66" x2="1073.49" y1="0" y2="0"><stop offset="0" stop-color="#0025a1"/><stop offset=".24" stop-color="#0613a1"/><stop offset=".58" stop-color="#6800a1"/><stop offset=".77" stop-color="#a1009b"/><stop offset="1" stop-color="#a10069"/></linearGradient><linearGradient id="g97" gradientUnits="userSpaceOnUse" x1="796.85" x2="1071.54" y1="0" y2="0"><stop offset="0" stop-color="#0024a1"/><stop offset=".24" stop-color="#0612a1"/><stop offset=".58" stop-color="#6700a1"/><stop offset=".78" stop-color="#a1009b"/><stop offset="1" stop-color="#a1006c"/></linearGradient><linearGradient id="g98" gradientUnits="userSpaceOnUse" x1="798.05" x2="1069.59" y1="0" y2="0"><stop offset="0" stop-color="#0022a1"/><stop offset=".24" stop-color="#0611a1"/><stop offset=".58" stop-color="#6400a1"/><stop offset=".79" stop-color="#a1009b"/><stop offset="1" stop-color="#a1006f"/></linearGradient><linearGradient id="g99" gradientUnits="userSpaceOnUse" x1="799.25" x2="1067.64" y1="0" y2="0"><stop offset="0" stop-color="#0021a1"/><stop offset=".24" stop-color="#0610a1"/><stop offset=".58" stop-color="#6300a1"/><stop offset=".81" stop-color="#a1009b"/><stop offset="1" stop-color="#a10071"/></linearGradient><linearGradient id="g100" gradientUnits="userSpaceOnUse" x1="800.45" x2="1065.7" y1="0" y2="0"><stop offset="0" stop-color="#0020a1"/><stop offset=".24" stop-color="#060fa1"/><stop offset=".58" stop-color="#6200a1"/><stop offset=".82" stop-color="#a1009b"/><stop offset="1" stop-color="#a10074"/></linearGradient><linearGradient id="g101" gradientUnits="userSpaceOnUse" x1="801.66" x2="1063.75" y1="0" y2="0"><stop offset="0" stop-color="#001fa1"/><stop offset=".24" stop-color="#060fa1"/><stop offset=".57" stop-color="#5d00a1"/><stop offset=".83" stop-color="#a1009b"/><stop offset="1" stop-color="#a10077"/></linearGradient><linearGradient id="g102" gradientUnits="userSpaceOnUse" x1="802.88" x2="1061.8" y1="0" y2="0"><stop offset="0" stop-color="#001ea1"/><stop offset=".24" stop-color="#060ea1"/><stop offset=".58" stop-color="#5c00a1"/><stop offset=".85" stop-color="#a1009b"/><stop offset="1" stop-color="#a1007a"/></linearGradient><linearGradient id="g103" gradientUnits="userSpaceOnUse" x1="804.11" x2="1059.86" y1="0" y2="0"><stop offset="0" stop-color="#001da1"/><stop offset=".24" stop-color="#060da1"/><stop offset=".59" stop-color="#5c00a1"/><stop offset=".86" stop-color="#a1009b"/><stop offset="1" stop-color="#a1007d"/></linearGradient><linearGradient id="g104" gradientUnits="userSpaceOnUse" x1="805.34" x2="1057.91" y1="0" y2="0"><stop offset="0" stop-color="#001ba1"/><stop offset=".24" stop-color="#060ca1"/><stop offset=".6" stop-color="#5e00a1"/><stop offset=".87" stop-color="#a1009b"/><stop offset="1" stop-color="#a10080"/></linearGradient><linearGradient id="g105" gradientUnits="userSpaceOnUse" x1="806.58" x2="1055.96" y1="0" y2="0"><stop offset="0" stop-color="#001aa1"/><stop offset=".24" stop-color="#060ca1"/><stop offset=".59" stop-color="#5900a1"/><stop offset=".89" stop-color="#a1009b"/><stop offset="1" stop-color="#a10083"/></linearGradient><linearGradient id="g106" gradientUnits="userSpaceOnUse" x1="807.83" x2="1054.02" y1="0" y2="0"><stop offset="0" stop-color="#0019a1"/><stop offset=".24" stop-color="#060ba1"/><stop offset=".6" stop-color="#5b00a1"/><stop offset=".9" stop-color="#a1009b"/><stop offset="1" stop-color="#a10086"/></linearGradient><linearGradient id="g107" gradientUnits="userSpaceOnUse" x1="809.09" x2="1052.07" y1="0" y2="0"><stop offset="0" stop-color="#0018a1"/><stop offset=".24" stop-color="#060aa1"/><stop offset=".63" stop-color="#5f00a1"/><stop offset=".92" stop-color="#a1009b"/><stop offset="1" stop-color="#a1008a"/></linearGradient><linearGradient id="g108" gradientUnits="userSpaceOnUse" x1="810.36" x2="1050.12" y1="0" y2="0"><stop offset="0" stop-color="#0017a1"/><stop offset=".24" stop-color="#0609a1"/><stop offset=".68" stop-color="#6a00a1"/><stop offset=".93" stop-color="#a1009b"/><stop offset="1" stop-color="#a1008d"/></linearGradient><linearGradient id="g109" gradientUnits="userSpaceOnUse" x1="811.64" x2="1048.18" y1="0" y2="0"><stop offset="0" stop-color="#0016a1"/><stop offset=".24" stop-color="#0609a1"/><stop offset=".67" stop-color="#6400a1"/><stop offset=".95" stop-color="#a1009b"/><stop offset="1" stop-color="#a10090"/></linearGradient><linearGradient id="g110" gradientUnits="userSpaceOnUse" x1="812.93" x2="1046.23" y1="0" y2="0"><stop offset="0" stop-color="#0015a1"/><stop offset=".24" stop-color="#0708a1"/><stop offset=".75" stop-color="#7400a1"/><stop offset=".97" stop-color="#a1009b"/><stop offset="1" stop-color="#a10094"/></linearGradient><linearGradient id="g111" gradientUnits="userSpaceOnUse" x1="814.23" x2="1044.28" y1="0" y2="0"><stop offset="0" stop-color="#0014a1"/><stop offset=".24" stop-color="#0707a1"/><stop offset=".98" stop-color="#a1009b"/><stop offset="1" stop-color="#a10098"/></linearGradient><linearGradient id="g112" gradientUnits="userSpaceOnUse" x1="815.54" x2="1042.34" y1="0" y2="0"><stop offset="0" stop-color="#0013a1"/><stop offset=".24" stop-color="#0707a1"/><stop offset="1" stop-color="#a1009b"/></linearGradient><linearGradient id="g113" gradientUnits="userSpaceOnUse" x1="816.87" x2="1040.39" y1="0" y2="0"><stop offset="0" stop-color="#0012a1"/><stop offset=".24" stop-color="#0706a1"/><stop offset="1" stop-color="#a1009f"/></linearGradient><linearGradient id="g114" gradientUnits="userSpaceOnUse" x1="818.2" x2="1038.44" y1="0" y2="0"><stop offset="0" stop-color="#0011a1"/><stop offset=".24" stop-color="#0705a1"/><stop offset="1" stop-color="#9e00a1"/></linearGradient><linearGradient id="g115" gradientUnits="userSpaceOnUse" x1="819.55" x2="1036.5" y1="0" y2="0"><stop offset="0" stop-color="#0011a1"/><stop offset=".24" stop-color="#0705a1"/><stop offset="1" stop-color="#9a00a1"/></linearGradient><linearGradient id="g116" gradientUnits="userSpaceOnUse" x1="820.91" x2="1034.55" y1="0" y2="0"><stop offset="0" stop-color="#0010a1"/><stop offset=".24" stop-color="#0704a1"/><stop offset="1" stop-color="#9700a1"/></linearGradient><linearGradient id="g117" gradientUnits="userSpaceOnUse" x1="822.27" x2="1032.6" y1="0" y2="0"><stop offset="0" stop-color="#000fa1"/><stop offset=".24" stop-color="#0703a1"/><stop offset="1" stop-color="#9300a1"/></linearGradient><linearGradient id="g118" gradientUnits="userSpaceOnUse" x1="823.64" x2="1030.66" y1="0" y2="0"><stop offset="0" stop-color="#000ea1"/><stop offset=".24" stop-color="#0703a1"/><stop offset="1" stop-color="#9000a1"/></linearGradient><linearGradient id="g119" gradientUnits="userSpaceOnUse" x1="825.02" x2="1028.71" y1="0" y2="0"><stop offset="0" stop-color="#000da1"/><stop offset=".24" stop-color="#0702a1"/><stop offset="1" stop-color="#8c00a1"/></linearGradient><linearGradient id="g120" gradientUnits="userSpaceOnUse" x1="826.42" x2="1026.76" y1="0" y2="0"><stop offset="0" stop-color="#000ca1"/><stop offset=".23" stop-color="#0702a1"/><stop offset="1" stop-color="#8900a1"/></linearGradient><linearGradient id="g121" gradientUnits="userSpaceOnUse" x1="827.82" x2="1024.82" y1="0" y2="0"><stop offset="0" stop-color="#000ba1"/><stop offset=".23" stop-color="#0701a1"/><stop offset="1" stop-color="#8500a1"/></linearGradient><linearGradient id="g122" gradientUnits="userSpaceOnUse" x1="829.23" x2="1022.87" y1="0" y2="0"><stop offset="0" stop-color="#000aa1"/><stop offset=".23" stop-color="#0701a1"/><stop offset="1" stop-color="#8200a1"/></linearGradient><linearGradient id="g123" gradientUnits="userSpaceOnUse" x1="830.66" x2="1020.92" y1="0" y2="0"><stop offset="0" stop-color="#000aa1"/><stop offset=".23" stop-color="#0700a1"/><stop offset="1" stop-color="#7f00a1"/></linearGradient><linearGradient id="g124" gradientUnits="userSpaceOnUse" x1="832.11" x2="1018.98" y1="0" y2="0"><stop offset="0" stop-color="#0009a1"/><stop offset=".23" stop-color="#0700a1"/><stop offset="1" stop-color="#7c00a1"/></linearGradient><linearGradient id="g125" gradientUnits="userSpaceOnUse" x1="833.56" x2="1017.03" y1="0" y2="0"><stop offset="0" stop-color="#0008a1"/><stop offset=".23" stop-color="#0800a1"/><stop offset="1" stop-color="#7900a1"/></linearGradient><linearGradient id="g126" gradientUnits="userSpaceOnUse" x1="835.03" x2="1015.08" y1="0" y2="0"><stop offset="0" stop-color="#0007a1"/><stop offset=".23" stop-color="#0800a1"/><stop offset="1" stop-color="#7600a1"/></linearGradient><linearGradient id="g127" gradientUnits="userSpaceOnUse" x1="836.53" x2="1013.14" y1="0" y2="0"><stop offset="0" stop-color="#0006a1"/><stop offset=".23" stop-color="#0800a1"/><stop offset="1" stop-color="#7300a1"/></linearGradient><linearGradient id="g128" gradientUnits="userSpaceOnUse" x1="838.03" x2="1011.19" y1="0" y2="0"><stop offset="0" stop-color="#0006a1"/><stop offset=".23" stop-color="#0800a1"/><stop offset="1" stop-color="#7000a1"/></linearGradient><linearGradient id="g129" gradientUnits="userSpaceOnUse" x1="839.56" x2="1009.24" y1="0" y2="0"><stop offset="0" stop-color="#0005a1"/><stop offset=".23" stop-color="#0800a1"/><stop offset="1" stop-color="#6d00a1"/></linearGradient><linearGradient id="g130" gradientUnits="userSpaceOnUse" x1="841.11" x2="1007.3" y1="0" y2="0"><stop offset="0" stop-color="#0004a1"/><stop offset=".23" stop-color="#0800a1"/><stop offset="1" stop-color="#6a00a1"/></linearGradient><linearGradient id="g131" gradientUnits="userSpaceOnUse" x1="842.67" x2="1005.35" y1="0" y2="0"><stop offset="0" stop-color="#0003a1"/><stop offset=".22" stop-color="#0800a1"/><stop offset="1" stop-color="#6800a1"/></linearGradient><linearGradient id="g132" gradientUnits="userSpaceOnUse" x1="844.24" x2="1003.4" y1="0" y2="0"><stop offset="0" stop-color="#0003a1"/><stop offset=".23" stop-color="#0900a1"/><stop offset="1" stop-color="#6500a1"/></linearGradient><linearGradient id="g133" gradientUnits="userSpaceOnUse" x1="845.82" x2="1001.46" y1="0" y2="0"><stop offset="0" stop-color="#0002a1"/><stop offset=".23" stop-color="#0900a1"/><stop offset="1" stop-color="#6200a1"/></linearGradient><linearGradient id="g134" gradientUnits="userSpaceOnUse" x1="847.42" x2="999.51" y1="0" y2="0"><stop offset="0" stop-color="#0001a1"/><stop offset=".23" stop-color="#0900a1"/><stop offset="1" stop-color="#6000a1"/></linearGradient><linearGradient id="g135" gradientUnits="userSpaceOnUse" x1="849.04" x2="997.56" y1="0" y2="0"><stop offset="0" stop-color="#0000a1"/><stop offset=".23" stop-color="#0a00a1"/><stop offset="1" stop-color="#5d00a1"/></linearGradient><linearGradient id="g136" gradientUnits="userSpaceOnUse" x1="850.68" x2="995.62" y1="0" y2="0"><stop offset="0" stop-color="#0000a1"/><stop offset=".23" stop-color="#0a00a1"/><stop offset="1" stop-color="#5b00a1"/></linearGradient><linearGradient id="g137" gradientUnits="userSpaceOnUse" x1="852.34" x2="993.67" y1="0" y2="0"><stop offset="0" stop-color="#0000a1"/><stop offset=".24" stop-color="#0b00a1"/><stop offset="1" stop-color="#5800a1"/></linearGradient><linearGradient id="g138" gradientUnits="userSpaceOnUse" x1="854.02" x2="991.72" y1="0" y2="0"><stop offset="0" stop-color="#0000a1"/><stop offset=".25" stop-color="#0d00a1"/><stop offset="1" stop-color="#5600a1"/></linearGradient><linearGradient id="g139" gradientUnits="userSpaceOnUse" x1="855.75" x2="989.78" y1="0" y2="0"><stop offset="0" stop-color="#0000a1"/><stop offset=".25" stop-color="#0d00a1"/><stop offset="1" stop-color="#5400a1"/></linearGradient><linearGradient id="g140" gradientUnits="userSpaceOnUse" x1="857.5" x2="987.83" y1="0" y2="0"><stop offset="0" stop-color="#0000a1"/><stop offset=".31" stop-color="#1200a1"/><stop offset="1" stop-color="#5100a1"/></linearGradient><linearGradient id="g141" gradientUnits="userSpaceOnUse" x1="859.3" x2="985.88" y1="0" y2="0"><stop offset="0" stop-color="#0000a1"/><stop offset=".35" stop-color="#1600a1"/><stop offset="1" stop-color="#4f00a1"/></linearGradient><linearGradient id="g142" gradientUnits="userSpaceOnUse" x1="861.13" x2="983.94" y1="0" y2="0"><stop offset="0" stop-color="#0000a1"/><stop offset=".62" stop-color="#2c00a1"/><stop offset="1" stop-color="#4d00a1"/></linearGradient><linearGradient id="g143" gradientUnits="userSpaceOnUse" x1="863" x2="981.99" y1="0" y2="0"><stop offset="0" stop-color="#0000a1"/><stop offset="1" stop-color="#4b00a1"/></linearGradient><linearGradient id="g144" gradientUnits="userSpaceOnUse" x1="864.92" x2="980.04" y1="0" y2="0"><stop offset="0" stop-color="#0000a1"/><stop offset="1" stop-color="#4800a1"/></linearGradient><linearGradient id="g145" gradientUnits="userSpaceOnUse" x1="866.86" x2="978.1" y1="0" y2="0"><stop offset="0" stop-color="#0000a1"/><stop offset="1" stop-color="#4600a1"/></linearGradient><linearGradient id="g146" gradientUnits="userSpaceOnUse" x1="868.84" x2="976.15" y1="0" y2="0"><stop offset="0" stop-color="#0000a1"/><stop offset="1" stop-color="#4400a1"/></linearGradient><linearGradient id="g147" gradientUnits="userSpaceOnUse" x1="870.86" x2="974.2" y1="0" y2="0"><stop offset="0" stop-color="#0000a1"/><stop offset="1" stop-color="#4200a1"/></linearGradient><linearGradient id="g148" gradientUnits="userSpaceOnUse" x1="872.91" x2="972.26" y1="0" y2="0"><stop offset="0" stop-color="#0000a1"/><stop offset="1" stop-color="#4000a1"/></linearGradient><linearGradient id="g149" gradientUnits="userSpaceOnUse" x1="874.99" x2="970.31" y1="0" y2="0"><stop offset="0" stop-color="#0100a1"/><stop offset="1" stop-color="#3e00a1"/></linearGradient><linearGradient id="g150" gradientUnits="userSpaceOnUse" x1="877.14" x2="968.36" y1="0" y2="0"><stop offset="0" stop-color="#0200a1"/><stop offset="1" stop-color="#3c00a1"/></linearGradient><linearGradient id="g151" gradientUnits="userSpaceOnUse" x1="879.33" x2="966.42" y1="0" y2="0"><stop offset="0" stop-color="#0300a1"/><stop offset="1" stop-color="#3a00a1"/></linearGradient><linearGradient id="g152" gradientUnits="userSpaceOnUse" x1="881.58" x2="964.47" y1="0" y2="0"><stop offset="0" stop-color="#0400a1"/><stop offset="1" stop-color="#3800a1"/></linearGradient><linearGradient id="g153" gradientUnits="userSpaceOnUse" x1="883.86" x2="962.52" y1="0" y2="0"><stop offset="0" stop-color="#0500a1"/><stop offset="1" stop-color="#3700a1"/></linearGradient><linearGradient id="g154" gradientUnits="userSpaceOnUse" x1="886.18" x2="960.58" y1="0" y2="0"><stop offset="0" stop-color="#0700a1"/><stop offset="1" stop-color="#3500a1"/></linearGradient><linearGradient id="g155" gradientUnits="userSpaceOnUse" x1="888.53" x2="958.63" y1="0" y2="0"><stop offset="0" stop-color="#0800a1"/><stop offset="1" stop-color="#3300a1"/></linearGradient><linearGradient id="g156" gradientUnits="userSpaceOnUse" x1="890.9" x2="956.68" y1="0" y2="0"><stop offset="0" stop-color="#0900a1"/><stop offset="1" stop-color="#3100a1"/></linearGradient><linearGradient id="g157" gradientUnits="userSpaceOnUse" x1="893.27" x2="954.74" y1="0" y2="0"><stop offset="0" stop-color="#0a00a1"/><stop offset="1" stop-color="#2f00a1"/></linearGradient><linearGradient id="g158" gradientUnits="userSpaceOnUse" x1="895.65" x2="952.79" y1="0" y2="0"><stop offset="0" stop-color="#0b00a1"/><stop offset="1" stop-color="#2e00a1"/></linearGradient><linearGradient id="g159" gradientUnits="userSpaceOnUse" x1="898.04" x2="950.84" y1="0" y2="0"><stop offset="0" stop-color="#0c00a1"/><stop offset="1" stop-color="#2c00a1"/></linearGradient><linearGradient id="g160" gradientUnits="userSpaceOnUse" x1="900.46" x2="948.9" y1="0" y2="0"><stop offset="0" stop-color="#0e00a1"/><stop offset="1" stop-color="#2a00a1"/></linearGradient><linearGradient id="g161" gradientUnits="userSpaceOnUse" x1="902.91" x2="946.95" y1="0" y2="0"><stop offset="0" stop-color="#0f00a1"/><stop offset="1" stop-color="#2900a1"/></linearGradient><linearGradient id="g162" gradientUnits="userSpaceOnUse" x1="905.36" x2="945" y1="0" y2="0"><stop offset="0" stop-color="#1000a1"/><stop offset="1" stop-color="#2700a1"/></linearGradient><linearGradient id="g163" gradientUnits="userSpaceOnUse" x1="907.8" x2="943.06" y1="0" y2="0"><stop offset="0" stop-color="#1100a1"/><stop offset="1" stop-color="#2500a1"/></linearGradient><linearGradient id="g164" gradientUnits="userSpaceOnUse" x1="910.23" x2="941.11" y1="0" y2="0"><stop offset="0" stop-color="#1200a1"/><stop offset="1" stop-color="#2400a1"/></linearGradient><linearGradient id="g165" gradientUnits="userSpaceOnUse" x1="912.59" x2="939.16" y1="0" y2="0"><stop offset="0" stop-color="#1300a1"/><stop offset="1" stop-color="#2200a1"/></linearGradient><linearGradient id="g166" gradientUnits="userSpaceOnUse" x1="914.94" x2="937.22" y1="0" y2="0"><stop offset="0" stop-color="#1400a1"/><stop offset="1" stop-color="#2100a1"/></linearGradient><linearGradient id="g167" gradientUnits="userSpaceOnUse" x1="917.35" x2="935.27" y1="0" y2="0"><stop offset="0" stop-color="#1500a1"/><stop offset="1" stop-color="#1f00a1"/></linearGradient><linearGradient id="g168" gradientUnits="userSpaceOnUse" x1="919.8" x2="933.32" y1="0" y2="0"><stop offset="0" stop-color="#1600a1"/><stop offset="1" stop-color="#1e00a1"/></linearGradient><linearGradient id="g169" gradientUnits="userSpaceOnUse" x1="922.56" x2="931.38" y1="0" y2="0"><stop offset="0" stop-color="#1700a1"/><stop offset="1" stop-color="#1c00a1"/></linearGradient><linearGradient id="g170" gradientUnits="userSpaceOnUse" x1="826.33" x2="847.92" y1="0" y2="0"><stop offset="0" stop-color="#00ff03"/><stop offset="1" stop-color="#46ff00"/></linearGradient><linearGradient id="g171" gradientUnits="userSpaceOnUse" x1="826.62" x2="869.31" y1="0" y2="0"><stop offset="0" stop-color="#00ff09"/><stop offset=".58" stop-color="#53ff02"/><stop offset="1" stop-color="#9fff00"/></linearGradient><linearGradient id="g172" gradientUnits="userSpaceOnUse" x1="826.94" x2="890.7" y1="0" y2="0"><stop offset="0" stop-color="#00ff0f"/><stop offset=".37" stop-color="#50ff09"/><stop offset=".89" stop-color="#e6ff00"/><stop offset=".98" stop-color="#fff800"/><stop offset="1" stop-color="#fff300"/></linearGradient><linearGradient id="g173" gradientUnits="userSpaceOnUse" x1="827.26" x2="912.09" y1="0" y2="0"><stop offset="0" stop-color="#00ff15"/><stop offset=".26" stop-color="#49ff10"/><stop offset=".66" stop-color="#e3ff06"/><stop offset=".73" stop-color="#fffa04"/><stop offset=".95" stop-color="#ffad00"/><stop offset="1" stop-color="#ffa100"/></linearGradient><linearGradient id="g174" gradientUnits="userSpaceOnUse" x1="827.59" x2="933.48" y1="0" y2="0"><stop offset="0" stop-color="#00ff1b"/><stop offset=".22" stop-color="#4eff17"/><stop offset=".53" stop-color="#e6ff0e"/><stop offset=".58" stop-color="#fff70c"/><stop offset=".76" stop-color="#ffaa04"/><stop offset="1" stop-color="#ff7000"/></linearGradient><linearGradient id="g175" gradientUnits="userSpaceOnUse" x1="827.91" x2="954.87" y1="0" y2="0"><stop offset="0" stop-color="#0f2"/><stop offset=".17" stop-color="#47ff1e"/><stop offset=".43" stop-color="#deff16"/><stop offset=".48" stop-color="#fff914"/><stop offset=".64" stop-color="#ffa809"/><stop offset=".88" stop-color="#ff6401"/><stop offset="1" stop-color="#ff4f00"/></linearGradient><linearGradient id="g176" gradientUnits="userSpaceOnUse" x1="828.24" x2="976.26" y1="0" y2="0"><stop offset="0" stop-color="#00ff28"/><stop offset=".14" stop-color="#47ff25"/><stop offset=".36" stop-color="#dfff1f"/><stop offset=".41" stop-color="#fff91c"/><stop offset=".54" stop-color="#ffaa10"/><stop offset=".74" stop-color="#ff6505"/><stop offset="1" stop-color="#ff3800"/></linearGradient><linearGradient id="g177" gradientUnits="userSpaceOnUse" x1="828.56" x2="997.65" y1="0" y2="0"><stop offset="0" stop-color="#00ff2f"/><stop offset=".14" stop-color="#50ff2c"/><stop offset=".32" stop-color="#e7ff27"/><stop offset=".35" stop-color="#fffb25"/><stop offset=".46" stop-color="#ffae17"/><stop offset=".64" stop-color="#ff680a"/><stop offset=".94" stop-color="#ff2f00"/><stop offset="1" stop-color="#ff2700"/></linearGradient><linearGradient id="g178" gradientUnits="userSpaceOnUse" x1="828.89" x2="1019.04" y1="0" y2="0"><stop offset="0" stop-color="#00ff36"/><stop offset=".12" stop-color="#4dff34"/><stop offset=".28" stop-color="#dfff30"/><stop offset=".31" stop-color="#fff82d"/><stop offset=".41" stop-color="#ffa91d"/><stop offset=".57" stop-color="#ff670f"/><stop offset=".83" stop-color="#ff2e03"/><stop offset="1" stop-color="#ff1900"/></linearGradient><linearGradient id="g179" gradientUnits="userSpaceOnUse" x1="829.21" x2="1040.43" y1="0" y2="0"><stop offset="0" stop-color="#00ff3d"/><stop offset=".1" stop-color="#49ff3b"/><stop offset=".25" stop-color="#e7ff38"/><stop offset=".28" stop-color="#fffa37"/><stop offset=".37" stop-color="#ffa923"/><stop offset=".51" stop-color="#ff6313"/><stop offset=".77" stop-color="#ff2905"/><stop offset="1" stop-color="#ff0f00"/></linearGradient><linearGradient id="g180" gradientUnits="userSpaceOnUse" x1="829.53" x2="1061.82" y1="0" y2="0"><stop offset="0" stop-color="#0f4"/><stop offset=".09" stop-color="#46ff43"/><stop offset=".22" stop-color="#daff41"/><stop offset=".25" stop-color="#fffd40"/><stop offset=".32" stop-color="#ffb12c"/><stop offset=".44" stop-color="#ff6e1a"/><stop offset=".63" stop-color="#ff350b"/><stop offset="1" stop-color="#ff0600"/><stop offset="1" stop-color="#ff0600"/></linearGradient><linearGradient id="g181" gradientUnits="userSpaceOnUse" x1="829.86" x2="1079.04" y1="0" y2="0"><stop offset="0" stop-color="#00ff4b"/><stop offset=".07" stop-color="#3eff4b"/><stop offset=".2" stop-color="#d1ff4a"/><stop offset=".23" stop-color="#fffa49"/><stop offset=".3" stop-color="#ffab32"/><stop offset=".42" stop-color="#ff651d"/><stop offset=".62" stop-color="#ff2c0c"/><stop offset="1" stop-color="#f00"/></linearGradient><linearGradient id="g182" gradientUnits="userSpaceOnUse" x1="830.18" x2="1078.66" y1="0" y2="0"><stop offset="0" stop-color="#00ff52"/><stop offset=".07" stop-color="#3bff52"/><stop offset=".19" stop-color="#ceff53"/><stop offset=".23" stop-color="#fffc53"/><stop offset=".3" stop-color="#ffac39"/><stop offset=".42" stop-color="#f62"/><stop offset=".62" stop-color="#ff2c10"/><stop offset="1" stop-color="#ff0001"/><stop offset="1" stop-color="#ff0001"/></linearGradient><linearGradient id="g183" gradientUnits="userSpaceOnUse" x1="830.51" x2="1076.7" y1="0" y2="0"><stop offset="0" stop-color="#00ff59"/><stop offset=".06" stop-color="#37ff5a"/><stop offset=".19" stop-color="#d0ff5d"/><stop offset=".23" stop-color="#fff95b"/><stop offset=".3" stop-color="#ffaa3f"/><stop offset=".42" stop-color="#ff6728"/><stop offset=".61" stop-color="#ff2f14"/><stop offset=".98" stop-color="#ff0104"/><stop offset="1" stop-color="#ff0003"/></linearGradient><linearGradient id="g184" gradientUnits="userSpaceOnUse" x1="830.83" x2="1074.73" y1="0" y2="0"><stop offset="0" stop-color="#00ff61"/><stop offset=".07" stop-color="#38ff62"/><stop offset=".19" stop-color="#ceff66"/><stop offset=".23" stop-color="#fffb66"/><stop offset=".3" stop-color="#ffaa47"/><stop offset=".42" stop-color="#ff662d"/><stop offset=".61" stop-color="#ff2d17"/><stop offset="1" stop-color="#ff0006"/><stop offset="1" stop-color="#ff0006"/></linearGradient><linearGradient id="g185" gradientUnits="userSpaceOnUse" x1="831.16" x2="1072.77" y1="0" y2="0"><stop offset="0" stop-color="#00ff69"/><stop offset=".06" stop-color="#34ff6b"/><stop offset=".19" stop-color="#caff6f"/><stop offset=".23" stop-color="#fff96e"/><stop offset=".3" stop-color="#ffac4f"/><stop offset=".41" stop-color="#ff6833"/><stop offset=".61" stop-color="#ff2e1b"/><stop offset=".99" stop-color="#ff0008"/><stop offset="1" stop-color="#ff0008"/></linearGradient><linearGradient id="g186" gradientUnits="userSpaceOnUse" x1="831.48" x2="1070.81" y1="0" y2="0"><stop offset="0" stop-color="#00ff71"/><stop offset=".05" stop-color="#2dff73"/><stop offset=".18" stop-color="#c1ff79"/><stop offset=".23" stop-color="#fffc7a"/><stop offset=".3" stop-color="#ffad57"/><stop offset=".41" stop-color="#ff6939"/><stop offset=".6" stop-color="#ff2f1f"/><stop offset=".99" stop-color="#ff000a"/><stop offset="1" stop-color="#ff000a"/></linearGradient><linearGradient id="g187" gradientUnits="userSpaceOnUse" x1="831.8" x2="1068.85" y1="0" y2="0"><stop offset="0" stop-color="#00ff79"/><stop offset=".05" stop-color="#2dff7b"/><stop offset=".18" stop-color="#c3ff83"/><stop offset=".23" stop-color="#fff983"/><stop offset=".3" stop-color="#ffab5e"/><stop offset=".42" stop-color="#ff673e"/><stop offset=".61" stop-color="#ff2e23"/><stop offset=".99" stop-color="#ff000d"/><stop offset="1" stop-color="#ff000c"/></linearGradient><linearGradient id="g188" gradientUnits="userSpaceOnUse" x1="832.13" x2="1066.89" y1="0" y2="0"><stop offset="0" stop-color="#00ff81"/><stop offset=".05" stop-color="#29ff84"/><stop offset=".19" stop-color="#c6ff8d"/><stop offset=".23" stop-color="#fffb8e"/><stop offset=".3" stop-color="#ffab66"/><stop offset=".42" stop-color="#ff6743"/><stop offset=".6" stop-color="#ff2f27"/><stop offset=".99" stop-color="#ff000f"/><stop offset="1" stop-color="#ff000f"/></linearGradient><linearGradient id="g189" gradientUnits="userSpaceOnUse" x1="832.45" x2="1064.92" y1="0" y2="0"><stop offset="0" stop-color="#00ff89"/><stop offset=".05" stop-color="#26ff8c"/><stop offset=".18" stop-color="#b7ff96"/><stop offset=".23" stop-color="#fff897"/><stop offset=".3" stop-color="#ffa96d"/><stop offset=".42" stop-color="#ff6548"/><stop offset=".62" stop-color="#ff2c29"/><stop offset="1" stop-color="#f01"/><stop offset="1" stop-color="#f01"/></linearGradient><linearGradient id="g190" gradientUnits="userSpaceOnUse" x1="832.78" x2="1062.96" y1="0" y2="0"><stop offset="0" stop-color="#00ff92"/><stop offset=".05" stop-color="#2aff95"/><stop offset=".18" stop-color="#bfffa1"/><stop offset=".23" stop-color="#fffca4"/><stop offset=".3" stop-color="#ffae78"/><stop offset=".42" stop-color="#ff674f"/><stop offset=".61" stop-color="#ff2d2e"/><stop offset=".99" stop-color="#ff0014"/><stop offset="1" stop-color="#ff0013"/></linearGradient><linearGradient id="g191" gradientUnits="userSpaceOnUse" x1="833.1" x2="1061" y1="0" y2="0"><stop offset="0" stop-color="#00ff9a"/><stop offset=".05" stop-color="#26ff9e"/><stop offset=".18" stop-color="#c2ffac"/><stop offset=".23" stop-color="#fffeb1"/><stop offset=".3" stop-color="#ffaf81"/><stop offset=".4" stop-color="#ff6d59"/><stop offset=".58" stop-color="#ff3436"/><stop offset=".93" stop-color="#ff051a"/><stop offset="1" stop-color="#ff0016"/></linearGradient><linearGradient id="g192" gradientUnits="userSpaceOnUse" x1="833.43" x2="1059.04" y1="0" y2="0"><stop offset="0" stop-color="#00ffa3"/><stop offset=".04" stop-color="#22ffa7"/><stop offset=".18" stop-color="#beffb6"/><stop offset=".23" stop-color="#fffbba"/><stop offset=".3" stop-color="#ffad88"/><stop offset=".41" stop-color="#ff695d"/><stop offset=".61" stop-color="#ff2f37"/><stop offset=".97" stop-color="#ff011a"/><stop offset="1" stop-color="#ff0019"/></linearGradient><linearGradient id="g193" gradientUnits="userSpaceOnUse" x1="833.75" x2="1057.08" y1="0" y2="0"><stop offset="0" stop-color="#00ffac"/><stop offset=".04" stop-color="#1effb0"/><stop offset=".17" stop-color="#b5ffc1"/><stop offset=".23" stop-color="#fff8c4"/><stop offset=".3" stop-color="#ffaa8f"/><stop offset=".42" stop-color="#ff6661"/><stop offset=".61" stop-color="#ff2e3b"/><stop offset=".98" stop-color="#ff011c"/><stop offset="1" stop-color="#ff001b"/></linearGradient><linearGradient id="g194" gradientUnits="userSpaceOnUse" x1="834.07" x2="1055.11" y1="0" y2="0"><stop offset="0" stop-color="#00ffb5"/><stop offset=".05" stop-color="#23ffba"/><stop offset=".18" stop-color="#b7ffcc"/><stop offset=".23" stop-color="#fffbd2"/><stop offset=".3" stop-color="#ffac99"/><stop offset=".41" stop-color="#ff6a6a"/><stop offset=".6" stop-color="#ff3041"/><stop offset=".97" stop-color="#ff011f"/><stop offset="1" stop-color="#ff001e"/></linearGradient><linearGradient id="g195" gradientUnits="userSpaceOnUse" x1="834.4" x2="1053.15" y1="0" y2="0"><stop offset="0" stop-color="#00ffbf"/><stop offset=".04" stop-color="#1fffc4"/><stop offset=".17" stop-color="#b4ffd7"/><stop offset=".23" stop-color="#fffee0"/><stop offset=".3" stop-color="#ffb0a5"/><stop offset=".41" stop-color="#ff6970"/><stop offset=".6" stop-color="#ff3045"/><stop offset=".96" stop-color="#ff0223"/><stop offset="1" stop-color="#ff0020"/></linearGradient><linearGradient id="g196" gradientUnits="userSpaceOnUse" x1="834.72" x2="1051.19" y1="0" y2="0"><stop offset="0" stop-color="#00ffc8"/><stop offset=".04" stop-color="#1bffcd"/><stop offset=".17" stop-color="#aaffe1"/><stop offset=".23" stop-color="#fffaea"/><stop offset=".3" stop-color="#ffaead"/><stop offset=".41" stop-color="#ff6c79"/><stop offset=".59" stop-color="#ff314b"/><stop offset=".96" stop-color="#ff0226"/><stop offset="1" stop-color="#ff0023"/></linearGradient><linearGradient id="g197" gradientUnits="userSpaceOnUse" x1="835.05" x2="1049.23" y1="0" y2="0"><stop offset="0" stop-color="#00ffd2"/><stop offset=".04" stop-color="#1bffd7"/><stop offset=".17" stop-color="#acffed"/><stop offset=".23" stop-color="#fffef9"/><stop offset=".3" stop-color="#ffabb5"/><stop offset=".42" stop-color="#ff667b"/><stop offset=".61" stop-color="#ff2d4c"/><stop offset="1" stop-color="#ff0026"/><stop offset="1" stop-color="#ff0026"/></linearGradient><linearGradient id="g198" gradientUnits="userSpaceOnUse" x1="835.37" x2="1047.27" y1="0" y2="0"><stop offset="0" stop-color="#00ffdc"/><stop offset=".04" stop-color="#1cffe2"/><stop offset=".17" stop-color="#a9fff9"/><stop offset=".24" stop-color="#fff3fd"/><stop offset=".31" stop-color="#ffa4b8"/><stop offset=".43" stop-color="#ff627e"/><stop offset=".63" stop-color="#ff2a4e"/><stop offset="1" stop-color="#ff0029"/></linearGradient><linearGradient id="g199" gradientUnits="userSpaceOnUse" x1="835.7" x2="1045.3" y1="0" y2="0"><stop offset="0" stop-color="#00ffe7"/><stop offset=".03" stop-color="#18ffec"/><stop offset=".17" stop-color="#a6f8ff"/><stop offset=".25" stop-color="#ffe3fb"/><stop offset=".33" stop-color="#ff97b6"/><stop offset=".46" stop-color="#ff557a"/><stop offset=".7" stop-color="#ff1f49"/><stop offset="1" stop-color="#ff002c"/></linearGradient><linearGradient id="g200" gradientUnits="userSpaceOnUse" x1="836.02" x2="1043.34" y1="0" y2="0"><stop offset="0" stop-color="#00fff1"/><stop offset=".03" stop-color="#18fff7"/><stop offset=".18" stop-color="#abebff"/><stop offset=".26" stop-color="#ffd5fa"/><stop offset=".35" stop-color="#ff8cb5"/><stop offset=".49" stop-color="#ff4d79"/><stop offset=".75" stop-color="#ff1847"/><stop offset="1" stop-color="#ff002f"/></linearGradient><linearGradient id="g201" gradientUnits="userSpaceOnUse" x1="836.34" x2="1041.38" y1="0" y2="0"><stop offset="0" stop-color="#00fffc"/><stop offset=".04" stop-color="#1cfbff"/><stop offset=".27" stop-color="#ffc8f9"/><stop offset=".37" stop-color="#ff7eb0"/><stop offset=".53" stop-color="#ff4173"/><stop offset=".82" stop-color="#ff0f42"/><stop offset="1" stop-color="#ff0032"/></linearGradient><linearGradient id="g202" gradientUnits="userSpaceOnUse" x1="836.67" x2="1039.42" y1="0" y2="0"><stop offset="0" stop-color="#00f8ff"/><stop offset=".04" stop-color="#1bf0ff"/><stop offset=".28" stop-color="#ffbffc"/><stop offset=".38" stop-color="#ff79b3"/><stop offset=".54" stop-color="#ff3d76"/><stop offset=".83" stop-color="#ff0e44"/><stop offset="1" stop-color="#ff0035"/></linearGradient><linearGradient id="g203" gradientUnits="userSpaceOnUse" x1="836.99" x2="1037.46" y1="0" y2="0"><stop offset="0" stop-color="#00edff"/><stop offset=".04" stop-color="#1fe6ff"/><stop offset=".29" stop-color="#ffb3fb"/><stop offset=".39" stop-color="#ff72b4"/><stop offset=".57" stop-color="#ff3775"/><stop offset=".88" stop-color="#ff0943"/><stop offset="1" stop-color="#ff0038"/></linearGradient><linearGradient id="g204" gradientUnits="userSpaceOnUse" x1="837.32" x2="1035.49" y1="0" y2="0"><stop offset="0" stop-color="#00e4ff"/><stop offset=".06" stop-color="#2ad9ff"/><stop offset=".31" stop-color="#ffa8fa"/><stop offset=".41" stop-color="#ff69b3"/><stop offset=".58" stop-color="#ff3477"/><stop offset=".9" stop-color="#ff0744"/><stop offset="1" stop-color="#ff003c"/></linearGradient><linearGradient id="g205" gradientUnits="userSpaceOnUse" x1="837.64" x2="1033.53" y1="0" y2="0"><stop offset="0" stop-color="#00dbff"/><stop offset=".07" stop-color="#31cfff"/><stop offset=".32" stop-color="#ffa0fc"/><stop offset=".43" stop-color="#ff62b3"/><stop offset=".61" stop-color="#ff2f77"/><stop offset=".93" stop-color="#ff0445"/><stop offset="1" stop-color="#ff003f"/></linearGradient><linearGradient id="g206" gradientUnits="userSpaceOnUse" x1="837.97" x2="1031.57" y1="0" y2="0"><stop offset="0" stop-color="#00d2ff"/><stop offset=".08" stop-color="#34c6ff"/><stop offset=".33" stop-color="#ff97fb"/><stop offset=".44" stop-color="#ff5cb4"/><stop offset=".62" stop-color="#ff2b79"/><stop offset=".96" stop-color="#ff0246"/><stop offset="1" stop-color="#ff0042"/></linearGradient><linearGradient id="g207" gradientUnits="userSpaceOnUse" x1="838.29" x2="1029.61" y1="0" y2="0"><stop offset="0" stop-color="#00caff"/><stop offset=".11" stop-color="#4db8ff"/><stop offset=".34" stop-color="#ff8dfb"/><stop offset=".46" stop-color="#ff55b3"/><stop offset=".66" stop-color="#ff2677"/><stop offset="1" stop-color="#ff0046"/></linearGradient><linearGradient id="g208" gradientUnits="userSpaceOnUse" x1="838.61" x2="1027.65" y1="0" y2="0"><stop offset="0" stop-color="#00c3ff"/><stop offset=".14" stop-color="#5eacff"/><stop offset=".36" stop-color="#ff85fa"/><stop offset=".48" stop-color="#ff50b4"/><stop offset=".68" stop-color="#ff2176"/><stop offset="1" stop-color="#ff004a"/></linearGradient><linearGradient id="g209" gradientUnits="userSpaceOnUse" x1="838.94" x2="1025.68" y1="0" y2="0"><stop offset="0" stop-color="#0bf"/><stop offset=".18" stop-color="#73a0ff"/><stop offset=".37" stop-color="#ff7efc"/><stop offset=".49" stop-color="#ff4bb6"/><stop offset=".71" stop-color="#ff1e77"/><stop offset="1" stop-color="#ff004d"/></linearGradient><linearGradient id="g210" gradientUnits="userSpaceOnUse" x1="839.26" x2="1023.72" y1="0" y2="0"><stop offset="0" stop-color="#00b4ff"/><stop offset=".19" stop-color="#7798ff"/><stop offset=".38" stop-color="#ff76fb"/><stop offset=".52" stop-color="#ff43b3"/><stop offset=".73" stop-color="#ff1a78"/><stop offset="1" stop-color="#ff0051"/></linearGradient><linearGradient id="g211" gradientUnits="userSpaceOnUse" x1="839.59" x2="1021.76" y1="0" y2="0"><stop offset="0" stop-color="#00aeff"/><stop offset=".2" stop-color="#7b90ff"/><stop offset=".4" stop-color="#ff6ffa"/><stop offset=".54" stop-color="#ff3eb2"/><stop offset=".77" stop-color="#ff1575"/><stop offset="1" stop-color="#f05"/></linearGradient><linearGradient id="g212" gradientUnits="userSpaceOnUse" x1="839.91" x2="1019.8" y1="0" y2="0"><stop offset="0" stop-color="#00a8ff"/><stop offset=".26" stop-color="#9983ff"/><stop offset=".41" stop-color="#ff69fc"/><stop offset=".56" stop-color="#ff3ab4"/><stop offset=".79" stop-color="#ff1377"/><stop offset="1" stop-color="#ff0059"/></linearGradient><linearGradient id="g213" gradientUnits="userSpaceOnUse" x1="840.24" x2="1017.84" y1="0" y2="0"><stop offset="0" stop-color="#00a2ff"/><stop offset=".26" stop-color="#987dff"/><stop offset=".43" stop-color="#ff63fb"/><stop offset=".57" stop-color="#ff36b5"/><stop offset=".81" stop-color="#ff1079"/><stop offset="1" stop-color="#ff005d"/></linearGradient><linearGradient id="g214" gradientUnits="userSpaceOnUse" x1="840.56" x2="1015.87" y1="0" y2="0"><stop offset="0" stop-color="#009cff"/><stop offset=".29" stop-color="#a274ff"/><stop offset=".44" stop-color="#ff5cfb"/><stop offset=".59" stop-color="#ff32b5"/><stop offset=".85" stop-color="#ff0c76"/><stop offset="1" stop-color="#ff0061"/></linearGradient><linearGradient id="g215" gradientUnits="userSpaceOnUse" x1="840.88" x2="1013.91" y1="0" y2="0"><stop offset="0" stop-color="#0096ff"/><stop offset=".29" stop-color="#9e70ff"/><stop offset=".46" stop-color="#ff56fa"/><stop offset=".63" stop-color="#ff2bb1"/><stop offset=".89" stop-color="#ff0875"/><stop offset="1" stop-color="#f06"/></linearGradient><linearGradient id="g216" gradientUnits="userSpaceOnUse" x1="841.21" x2="1011.95" y1="0" y2="0"><stop offset="0" stop-color="#0091ff"/><stop offset=".32" stop-color="#a568ff"/><stop offset=".47" stop-color="#ff51fc"/><stop offset=".64" stop-color="#ff28b2"/><stop offset=".93" stop-color="#ff0474"/><stop offset="1" stop-color="#ff006a"/></linearGradient><linearGradient id="g217" gradientUnits="userSpaceOnUse" x1="841.53" x2="1009.99" y1="0" y2="0"><stop offset="0" stop-color="#008cff"/><stop offset=".36" stop-color="#b85fff"/><stop offset=".49" stop-color="#ff4cfb"/><stop offset=".66" stop-color="#ff24b3"/><stop offset=".96" stop-color="#ff0274"/><stop offset="1" stop-color="#ff006f"/></linearGradient><linearGradient id="g218" gradientUnits="userSpaceOnUse" x1="841.86" x2="1008.03" y1="0" y2="0"><stop offset="0" stop-color="#0087ff"/><stop offset=".35" stop-color="#aa5dff"/><stop offset=".51" stop-color="#ff46fb"/><stop offset=".68" stop-color="#ff21b4"/><stop offset=".98" stop-color="#ff0076"/><stop offset="1" stop-color="#ff0073"/></linearGradient><linearGradient id="g219" gradientUnits="userSpaceOnUse" x1="842.18" x2="1006.06" y1="0" y2="0"><stop offset="0" stop-color="#0083ff"/><stop offset=".37" stop-color="#ae57ff"/><stop offset=".52" stop-color="#ff42fc"/><stop offset=".71" stop-color="#ff1cb2"/><stop offset="1" stop-color="#ff0078"/></linearGradient><linearGradient id="g220" gradientUnits="userSpaceOnUse" x1="842.51" x2="1004.1" y1="0" y2="0"><stop offset="0" stop-color="#007eff"/><stop offset=".39" stop-color="#b351ff"/><stop offset=".54" stop-color="#ff3dfb"/><stop offset=".74" stop-color="#ff19b1"/><stop offset="1" stop-color="#ff007d"/></linearGradient><linearGradient id="g221" gradientUnits="userSpaceOnUse" x1="842.83" x2="1002.14" y1="0" y2="0"><stop offset="0" stop-color="#007aff"/><stop offset=".41" stop-color="#b84cff"/><stop offset=".56" stop-color="#ff38fb"/><stop offset=".76" stop-color="#ff16b2"/><stop offset="1" stop-color="#ff0082"/></linearGradient><linearGradient id="g222" gradientUnits="userSpaceOnUse" x1="843.15" x2="1000.18" y1="0" y2="0"><stop offset="0" stop-color="#0076ff"/><stop offset=".43" stop-color="#ba47ff"/><stop offset=".58" stop-color="#ff34fb"/><stop offset=".78" stop-color="#ff13b3"/><stop offset="1" stop-color="#f08"/></linearGradient><linearGradient id="g223" gradientUnits="userSpaceOnUse" x1="843.48" x2="998.22" y1="0" y2="0"><stop offset="0" stop-color="#0072ff"/><stop offset=".45" stop-color="#bd42ff"/><stop offset=".61" stop-color="#ff2ff9"/><stop offset=".82" stop-color="#ff0fb1"/><stop offset="1" stop-color="#ff008d"/></linearGradient><linearGradient id="g224" gradientUnits="userSpaceOnUse" x1="843.8" x2="996.25" y1="0" y2="0"><stop offset="0" stop-color="#006eff"/><stop offset=".46" stop-color="#bc3eff"/><stop offset=".62" stop-color="#ff2cfb"/><stop offset=".84" stop-color="#ff0cb2"/><stop offset="1" stop-color="#ff0093"/></linearGradient><linearGradient id="g225" gradientUnits="userSpaceOnUse" x1="844.13" x2="994.29" y1="0" y2="0"><stop offset="0" stop-color="#006bff"/><stop offset=".48" stop-color="#bb3bff"/><stop offset=".64" stop-color="#ff28fb"/><stop offset=".88" stop-color="#ff09b0"/><stop offset="1" stop-color="#ff0098"/></linearGradient><linearGradient id="g226" gradientUnits="userSpaceOnUse" x1="844.45" x2="992.33" y1="0" y2="0"><stop offset="0" stop-color="#0067ff"/><stop offset=".49" stop-color="#bb37ff"/><stop offset=".67" stop-color="#ff23f9"/><stop offset=".92" stop-color="#ff05ae"/><stop offset="1" stop-color="#ff009e"/></linearGradient><linearGradient id="g227" gradientUnits="userSpaceOnUse" x1="844.78" x2="990.37" y1="0" y2="0"><stop offset="0" stop-color="#0064ff"/><stop offset=".51" stop-color="#ba34ff"/><stop offset=".69" stop-color="#ff1ff9"/><stop offset=".93" stop-color="#ff04b2"/><stop offset="1" stop-color="#ff00a4"/></linearGradient><linearGradient id="g228" gradientUnits="userSpaceOnUse" x1="845.1" x2="988.41" y1="0" y2="0"><stop offset="0" stop-color="#0061ff"/><stop offset=".56" stop-color="#c62dff"/><stop offset=".72" stop-color="#ff1cf9"/><stop offset=".97" stop-color="#ff01b0"/><stop offset="1" stop-color="#ff00ab"/></linearGradient><linearGradient id="g229" gradientUnits="userSpaceOnUse" x1="845.42" x2="986.44" y1="0" y2="0"><stop offset="0" stop-color="#005dff"/><stop offset=".56" stop-color="#c22bff"/><stop offset=".74" stop-color="#ff19f9"/><stop offset=".99" stop-color="#ff00b4"/><stop offset="1" stop-color="#ff00b1"/></linearGradient><linearGradient id="g230" gradientUnits="userSpaceOnUse" x1="845.75" x2="984.48" y1="0" y2="0"><stop offset="0" stop-color="#005aff"/><stop offset=".59" stop-color="#c527ff"/><stop offset=".76" stop-color="#ff16f9"/><stop offset="1" stop-color="#ff00b8"/></linearGradient><linearGradient id="g231" gradientUnits="userSpaceOnUse" x1="846.07" x2="982.52" y1="0" y2="0"><stop offset="0" stop-color="#0057ff"/><stop offset=".61" stop-color="#c623ff"/><stop offset=".79" stop-color="#ff12f9"/><stop offset="1" stop-color="#ff00bf"/></linearGradient><linearGradient id="g232" gradientUnits="userSpaceOnUse" x1="846.4" x2="980.56" y1="0" y2="0"><stop offset="0" stop-color="#05f"/><stop offset=".64" stop-color="#c720ff"/><stop offset=".81" stop-color="#ff0ff9"/><stop offset="1" stop-color="#ff00c6"/></linearGradient><linearGradient id="g233" gradientUnits="userSpaceOnUse" x1="846.72" x2="978.6" y1="0" y2="0"><stop offset="0" stop-color="#0052ff"/><stop offset=".67" stop-color="#ca1cff"/><stop offset=".84" stop-color="#ff0cf9"/><stop offset="1" stop-color="#ff00ce"/></linearGradient><linearGradient id="g234" gradientUnits="userSpaceOnUse" x1="847.05" x2="976.63" y1="0" y2="0"><stop offset="0" stop-color="#004fff"/><stop offset=".69" stop-color="#cb19ff"/><stop offset=".87" stop-color="#ff0af9"/><stop offset="1" stop-color="#ff00d5"/></linearGradient><linearGradient id="g235" gradientUnits="userSpaceOnUse" x1="847.37" x2="974.67" y1="0" y2="0"><stop offset="0" stop-color="#004cff"/><stop offset=".72" stop-color="#cc16ff"/><stop offset=".9" stop-color="#ff07f9"/><stop offset="1" stop-color="#f0d"/></linearGradient><linearGradient id="g236" gradientUnits="userSpaceOnUse" x1="847.7" x2="972.71" y1="0" y2="0"><stop offset="0" stop-color="#004aff"/><stop offset=".75" stop-color="#cd13ff"/><stop offset=".93" stop-color="#ff04f9"/><stop offset="1" stop-color="#ff00e6"/></linearGradient><linearGradient id="g237" gradientUnits="userSpaceOnUse" x1="848.02" x2="970.75" y1="0" y2="0"><stop offset="0" stop-color="#0047ff"/><stop offset=".76" stop-color="#cb11ff"/><stop offset=".96" stop-color="#ff02f9"/><stop offset="1" stop-color="#f0e"/></linearGradient><linearGradient id="g238" gradientUnits="userSpaceOnUse" x1="848.34" x2="968.79" y1="0" y2="0"><stop offset="0" stop-color="#0045ff"/><stop offset=".8" stop-color="#ce0dff"/><stop offset=".99" stop-color="#ff00f9"/><stop offset="1" stop-color="#ff00f7"/></linearGradient><linearGradient id="g239" gradientUnits="userSpaceOnUse" x1="848.67" x2="966.82" y1="0" y2="0"><stop offset="0" stop-color="#0043ff"/><stop offset=".83" stop-color="#cf0bff"/><stop offset="1" stop-color="#fe00ff"/></linearGradient><linearGradient id="g240" gradientUnits="userSpaceOnUse" x1="848.99" x2="964.86" y1="0" y2="0"><stop offset="0" stop-color="#0041ff"/><stop offset=".85" stop-color="#cd09ff"/><stop offset="1" stop-color="#f400ff"/></linearGradient><linearGradient id="g241" gradientUnits="userSpaceOnUse" x1="849.32" x2="962.9" y1="0" y2="0"><stop offset="0" stop-color="#003eff"/><stop offset=".89" stop-color="#d006ff"/><stop offset="1" stop-color="#eb00ff"/></linearGradient><linearGradient id="g242" gradientUnits="userSpaceOnUse" x1="849.64" x2="960.94" y1="0" y2="0"><stop offset="0" stop-color="#003cff"/><stop offset=".94" stop-color="#d303ff"/><stop offset="1" stop-color="#e300ff"/></linearGradient><linearGradient id="g243" gradientUnits="userSpaceOnUse" x1="849.97" x2="958.98" y1="0" y2="0"><stop offset="0" stop-color="#003aff"/><stop offset="1" stop-color="#da00ff"/></linearGradient><linearGradient id="g244" gradientUnits="userSpaceOnUse" x1="850.29" x2="957.01" y1="0" y2="0"><stop offset="0" stop-color="#0038ff"/><stop offset="1" stop-color="#d200ff"/></linearGradient><linearGradient id="g245" gradientUnits="userSpaceOnUse" x1="850.61" x2="955.05" y1="0" y2="0"><stop offset="0" stop-color="#0036ff"/><stop offset="1" stop-color="#cb00ff"/></linearGradient><linearGradient id="g246" gradientUnits="userSpaceOnUse" x1="850.94" x2="953.09" y1="0" y2="0"><stop offset="0" stop-color="#0034ff"/><stop offset="1" stop-color="#c300ff"/></linearGradient><linearGradient id="g247" gradientUnits="userSpaceOnUse" x1="851.26" x2="951.13" y1="0" y2="0"><stop offset="0" stop-color="#0032ff"/><stop offset="1" stop-color="#bc00ff"/></linearGradient><linearGradient id="g248" gradientUnits="userSpaceOnUse" x1="851.59" x2="949.17" y1="0" y2="0"><stop offset="0" stop-color="#0031ff"/><stop offset="1" stop-color="#b500ff"/></linearGradient><linearGradient id="g249" gradientUnits="userSpaceOnUse" x1="851.91" x2="947.2" y1="0" y2="0"><stop offset="0" stop-color="#002fff"/><stop offset="1" stop-color="#ae00ff"/></linearGradient><linearGradient id="g250" gradientUnits="userSpaceOnUse" x1="852.24" x2="945.24" y1="0" y2="0"><stop offset="0" stop-color="#002dff"/><stop offset="1" stop-color="#a700ff"/></linearGradient><linearGradient id="g251" gradientUnits="userSpaceOnUse" x1="852.56" x2="943.28" y1="0" y2="0"><stop offset="0" stop-color="#002bff"/><stop offset="1" stop-color="#a000ff"/></linearGradient><linearGradient id="g252" gradientUnits="userSpaceOnUse" x1="852.88" x2="941.32" y1="0" y2="0"><stop offset="0" stop-color="#002aff"/><stop offset="1" stop-color="#9a00ff"/></linearGradient><linearGradient id="g253" gradientUnits="userSpaceOnUse" x1="853.21" x2="939.36" y1="0" y2="0"><stop offset="0" stop-color="#0028ff"/><stop offset="1" stop-color="#9400ff"/></linearGradient><linearGradient id="g254" gradientUnits="userSpaceOnUse" x1="853.53" x2="937.4" y1="0" y2="0"><stop offset="0" stop-color="#0027ff"/><stop offset="1" stop-color="#8e00ff"/></linearGradient><linearGradient id="g255" gradientUnits="userSpaceOnUse" x1="853.86" x2="935.43" y1="0" y2="0"><stop offset="0" stop-color="#0025ff"/><stop offset="1" stop-color="#80f"/></linearGradient><linearGradient id="g256" gradientUnits="userSpaceOnUse" x1="854.18" x2="933.47" y1="0" y2="0"><stop offset="0" stop-color="#0024ff"/><stop offset="1" stop-color="#8200ff"/></linearGradient><linearGradient id="g257" gradientUnits="userSpaceOnUse" x1="854.51" x2="931.51" y1="0" y2="0"><stop offset="0" stop-color="#02f"/><stop offset="1" stop-color="#7d00ff"/></linearGradient><linearGradient id="g258" gradientUnits="userSpaceOnUse" x1="854.83" x2="929.55" y1="0" y2="0"><stop offset="0" stop-color="#0021ff"/><stop offset="1" stop-color="#7800ff"/></linearGradient><linearGradient id="g259" gradientUnits="userSpaceOnUse" x1="855.15" x2="927.59" y1="0" y2="0"><stop offset="0" stop-color="#001fff"/><stop offset="1" stop-color="#7200ff"/></linearGradient><linearGradient id="g260" gradientUnits="userSpaceOnUse" x1="855.48" x2="925.62" y1="0" y2="0"><stop offset="0" stop-color="#001eff"/><stop offset="1" stop-color="#6d00ff"/></linearGradient><linearGradient id="g261" gradientUnits="userSpaceOnUse" x1="855.8" x2="923.66" y1="0" y2="0"><stop offset="0" stop-color="#001dff"/><stop offset="1" stop-color="#6800ff"/></linearGradient><linearGradient id="g262" gradientUnits="userSpaceOnUse" x1="856.13" x2="921.7" y1="0" y2="0"><stop offset="0" stop-color="#001bff"/><stop offset="1" stop-color="#6300ff"/></linearGradient><linearGradient id="g263" gradientUnits="userSpaceOnUse" x1="856.45" x2="919.74" y1="0" y2="0"><stop offset="0" stop-color="#001aff"/><stop offset="1" stop-color="#5f00ff"/></linearGradient><linearGradient id="g264" gradientUnits="userSpaceOnUse" x1="856.78" x2="917.78" y1="0" y2="0"><stop offset="0" stop-color="#0019ff"/><stop offset="1" stop-color="#5a00ff"/></linearGradient><linearGradient id="g265" gradientUnits="userSpaceOnUse" x1="857.1" x2="915.81" y1="0" y2="0"><stop offset="0" stop-color="#0018ff"/><stop offset="1" stop-color="#5600ff"/></linearGradient><linearGradient id="g266" gradientUnits="userSpaceOnUse" x1="857.42" x2="913.85" y1="0" y2="0"><stop offset="0" stop-color="#0016ff"/><stop offset="1" stop-color="#5100ff"/></linearGradient><linearGradient id="g267" gradientUnits="userSpaceOnUse" x1="857.75" x2="911.89" y1="0" y2="0"><stop offset="0" stop-color="#0015ff"/><stop offset="1" stop-color="#4d00ff"/></linearGradient><linearGradient id="g268" gradientUnits="userSpaceOnUse" x1="858.07" x2="909.93" y1="0" y2="0"><stop offset="0" stop-color="#0014ff"/><stop offset="1" stop-color="#4900ff"/></linearGradient><linearGradient id="g269" gradientUnits="userSpaceOnUse" x1="858.4" x2="907.97" y1="0" y2="0"><stop offset="0" stop-color="#0013ff"/><stop offset="1" stop-color="#4500ff"/></linearGradient><linearGradient id="g270" gradientUnits="userSpaceOnUse" x1="858.72" x2="906" y1="0" y2="0"><stop offset="0" stop-color="#0012ff"/><stop offset="1" stop-color="#4100ff"/></linearGradient><linearGradient id="g271" gradientUnits="userSpaceOnUse" x1="859.05" x2="904.04" y1="0" y2="0"><stop offset="0" stop-color="#01f"/><stop offset="1" stop-color="#3d00ff"/></linearGradient><linearGradient id="g272" gradientUnits="userSpaceOnUse" x1="859.37" x2="902.08" y1="0" y2="0"><stop offset="0" stop-color="#0010ff"/><stop offset="1" stop-color="#3900ff"/></linearGradient><linearGradient id="g273" gradientUnits="userSpaceOnUse" x1="859.69" x2="900.12" y1="0" y2="0"><stop offset="0" stop-color="#000fff"/><stop offset="1" stop-color="#3500ff"/></linearGradient><linearGradient id="g274" gradientUnits="userSpaceOnUse" x1="860.02" x2="898.16" y1="0" y2="0"><stop offset="0" stop-color="#000eff"/><stop offset="1" stop-color="#3100ff"/></linearGradient><linearGradient id="g275" gradientUnits="userSpaceOnUse" x1="860.34" x2="896.19" y1="0" y2="0"><stop offset="0" stop-color="#000dff"/><stop offset="1" stop-color="#2e00ff"/></linearGradient><linearGradient id="g276" gradientUnits="userSpaceOnUse" x1="860.67" x2="894.23" y1="0" y2="0"><stop offset="0" stop-color="#000cff"/><stop offset="1" stop-color="#2a00ff"/></linearGradient><linearGradient id="g277" gradientUnits="userSpaceOnUse" x1="860.99" x2="892.27" y1="0" y2="0"><stop offset="0" stop-color="#000bff"/><stop offset="1" stop-color="#2700ff"/></linearGradient><linearGradient id="g278" gradientUnits="userSpaceOnUse" x1="861.32" x2="890.31" y1="0" y2="0"><stop offset="0" stop-color="#000aff"/><stop offset="1" stop-color="#2300ff"/></linearGradient><linearGradient id="g279" gradientUnits="userSpaceOnUse" x1="861.64" x2="888.35" y1="0" y2="0"><stop offset="0" stop-color="#0009ff"/><stop offset="1" stop-color="#2000ff"/></linearGradient><linearGradient id="g280" gradientUnits="userSpaceOnUse" x1="861.96" x2="886.38" y1="0" y2="0"><stop offset="0" stop-color="#0008ff"/><stop offset="1" stop-color="#1d00ff"/></linearGradient><linearGradient id="g281" gradientUnits="userSpaceOnUse" x1="862.29" x2="884.42" y1="0" y2="0"><stop offset="0" stop-color="#0007ff"/><stop offset="1" stop-color="#1a00ff"/></linearGradient><linearGradient id="g282" gradientUnits="userSpaceOnUse" x1="862.61" x2="882.46" y1="0" y2="0"><stop offset="0" stop-color="#0006ff"/><stop offset="1" stop-color="#1700ff"/></linearGradient><linearGradient id="g283" gradientUnits="userSpaceOnUse" x1="862.94" x2="880.5" y1="0" y2="0"><stop offset="0" stop-color="#0005ff"/><stop offset="1" stop-color="#1400ff"/></linearGradient><linearGradient id="g284" gradientUnits="userSpaceOnUse" x1="863.26" x2="878.54" y1="0" y2="0"><stop offset="0" stop-color="#0004ff"/><stop offset="1" stop-color="#10f"/></linearGradient><linearGradient id="g285" gradientUnits="userSpaceOnUse" x1="863.59" x2="876.57" y1="0" y2="0"><stop offset="0" stop-color="#0004ff"/><stop offset="1" stop-color="#0e00ff"/></linearGradient><linearGradient id="g286" gradientUnits="userSpaceOnUse" x1="863.91" x2="874.61" y1="0" y2="0"><stop offset="0" stop-color="#0003ff"/><stop offset="1" stop-color="#0b00ff"/></linearGradient><linearGradient id="g287" gradientUnits="userSpaceOnUse" x1="864.23" x2="872.65" y1="0" y2="0"><stop offset="0" stop-color="#0002ff"/><stop offset="1" stop-color="#0800ff"/></linearGradient><linearGradient id="g288" gradientUnits="userSpaceOnUse" x1="864.56" x2="870.69" y1="0" y2="0"><stop offset="0" stop-color="#0001ff"/><stop offset="1" stop-color="#0500ff"/></linearGradient><linearGradient id="g289" gradientUnits="userSpaceOnUse" x1="864.88" x2="868.73" y1="0" y2="0"><stop offset="0" stop-color="#00f"/><stop offset="1" stop-color="#0300ff"/></linearGradient><linearGradient id="rb1" x1="0" y1="0" x2="0" y2="1"><stop offset="0" stop-color="#ff6464"/><stop offset="1" stop-color="#ff0c0c"/></linearGradient><linearGradient id="rb2" x1="0" y1="0" x2="0" y2="1"><stop offset="0" stop-color="#5cb45c"/><stop offset=".85" stop-color="#048204"/><stop offset="1" stop-color="#007c00"/></linearGradient><linearGradient id="rb3" x1="0" y1="0" x2="0" y2="1"><stop offset="0" stop-color="#6464ff"/><stop offset=".75" stop-color="#0404ff"/><stop offset="1" stop-color="#0000f8"/></linearGradient><clipPath id="xyc"><rect x="458.0" y="450.0" width="245.5" height="142.6"/></clipPath><linearGradient id="g290" gradientUnits="userSpaceOnUse" x1="458.0" x2="703.5" y1="0" y2="0"><stop offset="0" stop-color="#25ffa9"/><stop offset=".52" stop-color="#abff9d"/><stop offset=".8" stop-color="#fffa93"/><stop offset="1" stop-color="#ffc26d"/></linearGradient><linearGradient id="g291" gradientUnits="userSpaceOnUse" x1="458.0" x2="703.5" y1="0" y2="0"><stop offset="0" stop-color="#26ffab"/><stop offset=".52" stop-color="#adff9f"/><stop offset=".79" stop-color="#fffa95"/><stop offset="1" stop-color="#ffc06e"/></linearGradient><linearGradient id="g292" gradientUnits="userSpaceOnUse" x1="458.0" x2="703.5" y1="0" y2="0"><stop offset="0" stop-color="#27ffad"/><stop offset=".51" stop-color="#aeffa2"/><stop offset=".78" stop-color="#fffa98"/><stop offset="1" stop-color="#ffbe6e"/></linearGradient><linearGradient id="g293" gradientUnits="userSpaceOnUse" x1="458.0" x2="703.5" y1="0" y2="0"><stop offset="0" stop-color="#28ffaf"/><stop offset=".51" stop-color="#afffa4"/><stop offset=".77" stop-color="#fffa9a"/><stop offset="1" stop-color="#ffbc6f"/></linearGradient><linearGradient id="g294" gradientUnits="userSpaceOnUse" x1="458.0" x2="703.5" y1="0" y2="0"><stop offset="0" stop-color="#29ffb1"/><stop offset=".51" stop-color="#b1ffa6"/><stop offset=".76" stop-color="#fffa9d"/><stop offset="1" stop-color="#ffba70"/></linearGradient><linearGradient id="g295" gradientUnits="userSpaceOnUse" x1="458.0" x2="703.5" y1="0" y2="0"><stop offset="0" stop-color="#2affb3"/><stop offset=".51" stop-color="#b2ffa9"/><stop offset=".76" stop-color="#fffa9f"/><stop offset="1" stop-color="#ffb870"/></linearGradient><linearGradient id="g296" gradientUnits="userSpaceOnUse" x1="458.0" x2="703.5" y1="0" y2="0"><stop offset="0" stop-color="#2bffb5"/><stop offset=".5" stop-color="#b3ffab"/><stop offset=".74" stop-color="#fffba3"/><stop offset="1" stop-color="#ffb671"/></linearGradient><linearGradient id="g297" gradientUnits="userSpaceOnUse" x1="458.0" x2="703.5" y1="0" y2="0"><stop offset="0" stop-color="#2cffb7"/><stop offset=".5" stop-color="#b4ffae"/><stop offset=".73" stop-color="#fffba6"/><stop offset="1" stop-color="#ffb472"/></linearGradient><linearGradient id="g298" gradientUnits="userSpaceOnUse" x1="458.0" x2="703.5" y1="0" y2="0"><stop offset="0" stop-color="#2dffb9"/><stop offset=".51" stop-color="#baffb0"/><stop offset=".73" stop-color="#fffba8"/><stop offset=".99" stop-color="#ffb473"/><stop offset="1" stop-color="#ffb272"/></linearGradient><linearGradient id="g299" gradientUnits="userSpaceOnUse" x1="458.0" x2="703.5" y1="0" y2="0"><stop offset="0" stop-color="#2fffbc"/><stop offset=".48" stop-color="#b2ffb3"/><stop offset=".72" stop-color="#fffbab"/><stop offset=".98" stop-color="#ffb375"/><stop offset="1" stop-color="#ffb073"/></linearGradient><linearGradient id="g300" gradientUnits="userSpaceOnUse" x1="458.0" x2="703.5" y1="0" y2="0"><stop offset="0" stop-color="#30ffbe"/><stop offset=".49" stop-color="#b8ffb5"/><stop offset=".71" stop-color="#fffbae"/><stop offset=".98" stop-color="#ffb176"/><stop offset="1" stop-color="#ffae73"/></linearGradient><linearGradient id="g301" gradientUnits="userSpaceOnUse" x1="458.0" x2="703.5" y1="0" y2="0"><stop offset="0" stop-color="#31ffc0"/><stop offset=".49" stop-color="#b9ffb8"/><stop offset=".7" stop-color="#fffbb0"/><stop offset=".96" stop-color="#ffb57a"/><stop offset="1" stop-color="#ffac74"/></linearGradient><linearGradient id="g302" gradientUnits="userSpaceOnUse" x1="458.0" x2="703.5" y1="0" y2="0"><stop offset="0" stop-color="#32ffc2"/><stop offset=".49" stop-color="#beffba"/><stop offset=".69" stop-color="#fffbb3"/><stop offset=".96" stop-color="#ffb37c"/><stop offset="1" stop-color="#ffaa75"/></linearGradient><linearGradient id="g303" gradientUnits="userSpaceOnUse" x1="458.0" x2="703.5" y1="0" y2="0"><stop offset="0" stop-color="#33ffc5"/><stop offset=".49" stop-color="#bfffbd"/><stop offset=".69" stop-color="#fffbb6"/><stop offset=".95" stop-color="#ffb37e"/><stop offset="1" stop-color="#ffa875"/></linearGradient><linearGradient id="g304" gradientUnits="userSpaceOnUse" x1="458.0" x2="703.5" y1="0" y2="0"><stop offset="0" stop-color="#35ffc7"/><stop offset=".47" stop-color="#bcffc0"/><stop offset=".68" stop-color="#fffbb9"/><stop offset=".93" stop-color="#ffb582"/><stop offset="1" stop-color="#ffa676"/></linearGradient><linearGradient id="g305" gradientUnits="userSpaceOnUse" x1="458.0" x2="703.5" y1="0" y2="0"><stop offset="0" stop-color="#36ffc9"/><stop offset=".47" stop-color="#bcffc2"/><stop offset=".67" stop-color="#fffbbc"/><stop offset=".93" stop-color="#ffb282"/><stop offset="1" stop-color="#ffa476"/></linearGradient><linearGradient id="g306" gradientUnits="userSpaceOnUse" x1="458.0" x2="703.5" y1="0" y2="0"><stop offset="0" stop-color="#37ffcc"/><stop offset=".47" stop-color="#c1ffc5"/><stop offset=".66" stop-color="#fffbbe"/><stop offset=".91" stop-color="#ffb687"/><stop offset="1" stop-color="#ffa377"/></linearGradient><linearGradient id="g307" gradientUnits="userSpaceOnUse" x1="458.0" x2="703.5" y1="0" y2="0"><stop offset="0" stop-color="#38ffce"/><stop offset=".48" stop-color="#c5ffc7"/><stop offset=".65" stop-color="#fffbc1"/><stop offset=".9" stop-color="#ffb488"/><stop offset="1" stop-color="#ffa178"/></linearGradient><linearGradient id="g308" gradientUnits="userSpaceOnUse" x1="458.0" x2="703.5" y1="0" y2="0"><stop offset="0" stop-color="#3affd1"/><stop offset=".46" stop-color="#c2ffca"/><stop offset=".64" stop-color="#fffbc4"/><stop offset=".9" stop-color="#ffb389"/><stop offset="1" stop-color="#ff9f78"/></linearGradient><linearGradient id="g309" gradientUnits="userSpaceOnUse" x1="458.0" x2="703.5" y1="0" y2="0"><stop offset="0" stop-color="#3bffd3"/><stop offset=".46" stop-color="#c3ffcd"/><stop offset=".64" stop-color="#fffbc7"/><stop offset=".88" stop-color="#ffb58d"/><stop offset="1" stop-color="#ff9d79"/></linearGradient><linearGradient id="g310" gradientUnits="userSpaceOnUse" x1="458.0" x2="703.5" y1="0" y2="0"><stop offset="0" stop-color="#3cffd6"/><stop offset=".46" stop-color="#c7ffd0"/><stop offset=".63" stop-color="#fffbca"/><stop offset=".87" stop-color="#ffb48f"/><stop offset="1" stop-color="#ff9b79"/></linearGradient><linearGradient id="g311" gradientUnits="userSpaceOnUse" x1="458.0" x2="703.5" y1="0" y2="0"><stop offset="0" stop-color="#3effd8"/><stop offset=".44" stop-color="#c4ffd3"/><stop offset=".62" stop-color="#fffbcd"/><stop offset=".86" stop-color="#ffb592"/><stop offset="1" stop-color="#ff997a"/></linearGradient><linearGradient id="g312" gradientUnits="userSpaceOnUse" x1="458.0" x2="703.5" y1="0" y2="0"><stop offset="0" stop-color="#3fffdb"/><stop offset=".45" stop-color="#c9ffd6"/><stop offset=".61" stop-color="#fffad0"/><stop offset=".87" stop-color="#ffb090"/><stop offset="1" stop-color="#ff977a"/></linearGradient><linearGradient id="g313" gradientUnits="userSpaceOnUse" x1="458.0" x2="703.5" y1="0" y2="0"><stop offset="0" stop-color="#40ffdd"/><stop offset=".45" stop-color="#ccffd9"/><stop offset=".6" stop-color="#fffad3"/><stop offset=".85" stop-color="#ffb394"/><stop offset="1" stop-color="#ff967b"/></linearGradient><linearGradient id="g314" gradientUnits="userSpaceOnUse" x1="458.0" x2="703.5" y1="0" y2="0"><stop offset="0" stop-color="#42ffe0"/><stop offset=".45" stop-color="#cdffdc"/><stop offset=".6" stop-color="#fffad6"/><stop offset=".85" stop-color="#ffb095"/><stop offset="1" stop-color="#ff947c"/></linearGradient><linearGradient id="g315" gradientUnits="userSpaceOnUse" x1="458.0" x2="703.5" y1="0" y2="0"><stop offset="0" stop-color="#43ffe3"/><stop offset=".44" stop-color="#cdffdf"/><stop offset=".59" stop-color="#fffada"/><stop offset=".84" stop-color="#ffb299"/><stop offset="1" stop-color="#ff927c"/></linearGradient><linearGradient id="g316" gradientUnits="userSpaceOnUse" x1="458.0" x2="703.5" y1="0" y2="0"><stop offset="0" stop-color="#45ffe5"/><stop offset=".44" stop-color="#ceffe2"/><stop offset=".58" stop-color="#fffadd"/><stop offset=".82" stop-color="#ffb39d"/><stop offset="1" stop-color="#ff907d"/></linearGradient><linearGradient id="g317" gradientUnits="userSpaceOnUse" x1="458.0" x2="703.5" y1="0" y2="0"><stop offset="0" stop-color="#46ffe8"/><stop offset=".44" stop-color="#d1ffe5"/><stop offset=".57" stop-color="#fffae0"/><stop offset=".82" stop-color="#ffb09c"/><stop offset="1" stop-color="#ff8e7d"/></linearGradient><linearGradient id="g318" gradientUnits="userSpaceOnUse" x1="458.0" x2="703.5" y1="0" y2="0"><stop offset="0" stop-color="#48ffeb"/><stop offset=".42" stop-color="#cfffe9"/><stop offset=".56" stop-color="#fffae3"/><stop offset=".81" stop-color="#ffb2a0"/><stop offset="1" stop-color="#ff8d7e"/></linearGradient><linearGradient id="g319" gradientUnits="userSpaceOnUse" x1="458.0" x2="703.5" y1="0" y2="0"><stop offset="0" stop-color="#49ffee"/><stop offset=".43" stop-color="#d5ffec"/><stop offset=".56" stop-color="#fffae6"/><stop offset=".8" stop-color="#ffb2a3"/><stop offset="1" stop-color="#ff8b7e"/></linearGradient><linearGradient id="g320" gradientUnits="userSpaceOnUse" x1="458.0" x2="703.5" y1="0" y2="0"><stop offset="0" stop-color="#4bfff1"/><stop offset=".42" stop-color="#d3ffef"/><stop offset=".55" stop-color="#fffaea"/><stop offset=".78" stop-color="#ffb3a7"/><stop offset="1" stop-color="#ff897f"/></linearGradient><linearGradient id="g321" gradientUnits="userSpaceOnUse" x1="458.0" x2="703.5" y1="0" y2="0"><stop offset="0" stop-color="#4cfff4"/><stop offset=".43" stop-color="#d9fff2"/><stop offset=".54" stop-color="#fffaed"/><stop offset=".77" stop-color="#ffb4aa"/><stop offset="1" stop-color="#ff877f"/></linearGradient><linearGradient id="g322" gradientUnits="userSpaceOnUse" x1="458.0" x2="703.5" y1="0" y2="0"><stop offset="0" stop-color="#4efff7"/><stop offset=".41" stop-color="#d6fff6"/><stop offset=".53" stop-color="#fffaf0"/><stop offset=".78" stop-color="#ffb0a9"/><stop offset="1" stop-color="#ff8680"/></linearGradient><linearGradient id="g323" gradientUnits="userSpaceOnUse" x1="458.0" x2="703.5" y1="0" y2="0"><stop offset="0" stop-color="#4ffffa"/><stop offset=".42" stop-color="#dcfff9"/><stop offset=".52" stop-color="#fffaf4"/><stop offset=".75" stop-color="#ffb4af"/><stop offset="1" stop-color="#ff8481"/></linearGradient><linearGradient id="g324" gradientUnits="userSpaceOnUse" x1="458.0" x2="703.5" y1="0" y2="0"><stop offset="0" stop-color="#51fffd"/><stop offset=".42" stop-color="#ddfffd"/><stop offset=".51" stop-color="#fffaf7"/><stop offset=".74" stop-color="#ffb5b3"/><stop offset="1" stop-color="#ff8281"/></linearGradient><linearGradient id="g325" gradientUnits="userSpaceOnUse" x1="458.0" x2="703.5" y1="0" y2="0"><stop offset="0" stop-color="#52feff"/><stop offset=".42" stop-color="#e1feff"/><stop offset=".51" stop-color="#fff8f9"/><stop offset=".76" stop-color="#ffaeaf"/><stop offset="1" stop-color="#ff8182"/></linearGradient><linearGradient id="g326" gradientUnits="userSpaceOnUse" x1="458.0" x2="703.5" y1="0" y2="0"><stop offset="0" stop-color="#53fbff"/><stop offset=".42" stop-color="#dffaff"/><stop offset=".51" stop-color="#fff5fa"/><stop offset=".73" stop-color="#ffb1b5"/><stop offset="1" stop-color="#ff7f82"/></linearGradient><linearGradient id="g327" gradientUnits="userSpaceOnUse" x1="458.0" x2="703.5" y1="0" y2="0"><stop offset="0" stop-color="#54f8ff"/><stop offset=".41" stop-color="#dcf7ff"/><stop offset=".51" stop-color="#fff2fa"/><stop offset=".74" stop-color="#ffadb3"/><stop offset="1" stop-color="#ff7d83"/></linearGradient><linearGradient id="g328" gradientUnits="userSpaceOnUse" x1="458.0" x2="703.5" y1="0" y2="0"><stop offset="0" stop-color="#54f5ff"/><stop offset=".42" stop-color="#e2f4ff"/><stop offset=".51" stop-color="#ffeefa"/><stop offset=".75" stop-color="#ffaab3"/><stop offset="1" stop-color="#ff7c83"/></linearGradient><linearGradient id="g329" gradientUnits="userSpaceOnUse" x1="458.0" x2="703.5" y1="0" y2="0"><stop offset="0" stop-color="#55f2ff"/><stop offset=".42" stop-color="#dff0ff"/><stop offset=".51" stop-color="#ffebfa"/><stop offset=".76" stop-color="#ffa6b1"/><stop offset="1" stop-color="#ff7a84"/></linearGradient><linearGradient id="g330" gradientUnits="userSpaceOnUse" x1="458.0" x2="703.5" y1="0" y2="0"><stop offset="0" stop-color="#55efff"/><stop offset=".43" stop-color="#e5edff"/><stop offset=".51" stop-color="#ffe8fb"/><stop offset=".74" stop-color="#ffa7b6"/><stop offset="1" stop-color="#ff7884"/></linearGradient><linearGradient id="g331" gradientUnits="userSpaceOnUse" x1="458.0" x2="703.5" y1="0" y2="0"><stop offset="0" stop-color="#56ecff"/><stop offset=".42" stop-color="#e2e9ff"/><stop offset=".51" stop-color="#ffe4f9"/><stop offset=".76" stop-color="#ffa0b1"/><stop offset="1" stop-color="#ff7785"/></linearGradient><linearGradient id="g332" gradientUnits="userSpaceOnUse" x1="458.0" x2="703.5" y1="0" y2="0"><stop offset="0" stop-color="#57e9ff"/><stop offset=".42" stop-color="#dfe6ff"/><stop offset=".51" stop-color="#ffe1fa"/><stop offset=".75" stop-color="#ffa1b5"/><stop offset="1" stop-color="#ff7585"/></linearGradient><linearGradient id="g333" gradientUnits="userSpaceOnUse" x1="458.0" x2="703.5" y1="0" y2="0"><stop offset="0" stop-color="#57e7ff"/><stop offset=".43" stop-color="#e5e3ff"/><stop offset=".51" stop-color="#ffdefa"/><stop offset=".76" stop-color="#ff9bb1"/><stop offset="1" stop-color="#ff7386"/></linearGradient><linearGradient id="g334" gradientUnits="userSpaceOnUse" x1="458.0" x2="703.5" y1="0" y2="0"><stop offset="0" stop-color="#58e4ff"/><stop offset=".44" stop-color="#e6e0ff"/><stop offset=".51" stop-color="#ffdbfa"/><stop offset=".76" stop-color="#ff9ab3"/><stop offset="1" stop-color="#ff7286"/></linearGradient><linearGradient id="g335" gradientUnits="userSpaceOnUse" x1="458.0" x2="703.5" y1="0" y2="0"><stop offset="0" stop-color="#58e1ff"/><stop offset=".44" stop-color="#e9dcff"/><stop offset=".52" stop-color="#ffd6f9"/><stop offset=".77" stop-color="#ff96b0"/><stop offset="1" stop-color="#ff7087"/></linearGradient><linearGradient id="g336" gradientUnits="userSpaceOnUse" x1="458.0" x2="703.5" y1="0" y2="0"><stop offset="0" stop-color="#59deff"/><stop offset=".43" stop-color="#e3d9ff"/><stop offset=".51" stop-color="#ffd5fb"/><stop offset=".75" stop-color="#ff98b6"/><stop offset="1" stop-color="#ff6f87"/></linearGradient><linearGradient id="g337" gradientUnits="userSpaceOnUse" x1="458.0" x2="703.5" y1="0" y2="0"><stop offset="0" stop-color="#59dbff"/><stop offset=".44" stop-color="#e9d6ff"/><stop offset=".52" stop-color="#ffd0f9"/><stop offset=".78" stop-color="#ff91b0"/><stop offset="1" stop-color="#ff6d88"/></linearGradient><linearGradient id="g338" gradientUnits="userSpaceOnUse" x1="458.0" x2="703.5" y1="0" y2="0"><stop offset="0" stop-color="#5ad9ff"/><stop offset=".44" stop-color="#e7d3ff"/><stop offset=".52" stop-color="#ffcdfa"/><stop offset=".76" stop-color="#ff93b5"/><stop offset="1" stop-color="#ff6b88"/></linearGradient><linearGradient id="g339" gradientUnits="userSpaceOnUse" x1="458.0" x2="703.5" y1="0" y2="0"><stop offset="0" stop-color="#5bd6ff"/><stop offset=".43" stop-color="#e4d0ff"/><stop offset=".52" stop-color="#ffcbfa"/><stop offset=".78" stop-color="#ff8db1"/><stop offset="1" stop-color="#ff6a89"/></linearGradient><linearGradient id="g340" gradientUnits="userSpaceOnUse" x1="458.0" x2="703.5" y1="0" y2="0"><stop offset="0" stop-color="#5bd3ff"/><stop offset=".45" stop-color="#eacdff"/><stop offset=".52" stop-color="#ffc7f9"/><stop offset=".77" stop-color="#ff8cb4"/><stop offset="1" stop-color="#ff6889"/></linearGradient><linearGradient id="g341" gradientUnits="userSpaceOnUse" x1="458.0" x2="703.5" y1="0" y2="0"><stop offset="0" stop-color="#5cd0ff"/><stop offset=".43" stop-color="#e4caff"/><stop offset=".52" stop-color="#ffc5fa"/><stop offset=".78" stop-color="#ff88b1"/><stop offset="1" stop-color="#ff678a"/></linearGradient><linearGradient id="g342" gradientUnits="userSpaceOnUse" x1="458.0" x2="703.5" y1="0" y2="0"><stop offset="0" stop-color="#5cceff"/><stop offset=".45" stop-color="#ebc7ff"/><stop offset=".52" stop-color="#ffc1f9"/><stop offset=".78" stop-color="#ff85b1"/><stop offset="1" stop-color="#ff658a"/></linearGradient><linearGradient id="g343" gradientUnits="userSpaceOnUse" x1="458.0" x2="703.5" y1="0" y2="0"><stop offset="0" stop-color="#5dcbff"/><stop offset=".44" stop-color="#e8c4ff"/><stop offset=".52" stop-color="#ffbef9"/><stop offset=".78" stop-color="#ff83b1"/><stop offset="1" stop-color="#ff648b"/></linearGradient><linearGradient id="g344" gradientUnits="userSpaceOnUse" x1="458.0" x2="703.5" y1="0" y2="0"><stop offset="0" stop-color="#5dc9ff"/><stop offset=".45" stop-color="#ebc1ff"/><stop offset=".52" stop-color="#ffbcfa"/><stop offset=".77" stop-color="#ff84b4"/><stop offset="1" stop-color="#ff628b"/></linearGradient><linearGradient id="g345" gradientUnits="userSpaceOnUse" x1="458.0" x2="703.5" y1="0" y2="0"><stop offset="0" stop-color="#5ec6ff"/><stop offset=".44" stop-color="#e8beff"/><stop offset=".53" stop-color="#ffb8f9"/><stop offset=".79" stop-color="#ff7fb1"/><stop offset="1" stop-color="#ff618b"/></linearGradient><linearGradient id="g346" gradientUnits="userSpaceOnUse" x1="458.0" x2="703.5" y1="0" y2="0"><stop offset="0" stop-color="#5ec3ff"/><stop offset=".46" stop-color="#ecbbff"/><stop offset=".53" stop-color="#ffb5f9"/><stop offset=".78" stop-color="#ff7eb3"/><stop offset="1" stop-color="#ff5f8c"/></linearGradient><linearGradient id="g347" gradientUnits="userSpaceOnUse" x1="458.0" x2="703.5" y1="0" y2="0"><stop offset="0" stop-color="#5fc1ff"/><stop offset=".46" stop-color="#ecb8ff"/><stop offset=".53" stop-color="#ffb2f9"/><stop offset=".79" stop-color="#ff7bb1"/><stop offset="1" stop-color="#ff5e8c"/></linearGradient><linearGradient id="g348" gradientUnits="userSpaceOnUse" x1="458.0" x2="703.5" y1="0" y2="0"><stop offset="0" stop-color="#5fbeff"/><stop offset=".47" stop-color="#f0b5ff"/><stop offset=".53" stop-color="#ffaff8"/><stop offset=".79" stop-color="#ff79b2"/><stop offset="1" stop-color="#ff5c8d"/></linearGradient><linearGradient id="g349" gradientUnits="userSpaceOnUse" x1="458.0" x2="703.5" y1="0" y2="0"><stop offset="0" stop-color="#60bcff"/><stop offset=".46" stop-color="#edb3ff"/><stop offset=".53" stop-color="#ffadfa"/><stop offset=".78" stop-color="#ff78b4"/><stop offset="1" stop-color="#ff5b8d"/></linearGradient><linearGradient id="g350" gradientUnits="userSpaceOnUse" x1="458.0" x2="703.5" y1="0" y2="0"><stop offset="0" stop-color="#60b9ff"/><stop offset=".46" stop-color="#edb0ff"/><stop offset=".53" stop-color="#ffaaf8"/><stop offset=".81" stop-color="#ff72ae"/><stop offset="1" stop-color="#ff598e"/></linearGradient><linearGradient id="g351" gradientUnits="userSpaceOnUse" x1="458.0" x2="703.5" y1="0" y2="0"><stop offset="0" stop-color="#61b7ff"/><stop offset=".46" stop-color="#edadff"/><stop offset=".53" stop-color="#ffa7f9"/><stop offset=".8" stop-color="#ff72b1"/><stop offset="1" stop-color="#ff588e"/></linearGradient><linearGradient id="g352" gradientUnits="userSpaceOnUse" x1="458.0" x2="703.5" y1="0" y2="0"><stop offset="0" stop-color="#61b5ff"/><stop offset=".47" stop-color="#f1aaff"/><stop offset=".53" stop-color="#ffa4f8"/><stop offset=".79" stop-color="#ff71b3"/><stop offset="1" stop-color="#ff568f"/></linearGradient><linearGradient id="g353" gradientUnits="userSpaceOnUse" x1="458.0" x2="703.5" y1="0" y2="0"><stop offset="0" stop-color="#62b2ff"/><stop offset=".47" stop-color="#eea8ff"/><stop offset=".53" stop-color="#ffa1f8"/><stop offset=".8" stop-color="#ff6eb1"/><stop offset="1" stop-color="#ff558f"/></linearGradient><linearGradient id="g354" gradientUnits="userSpaceOnUse" x1="458.0" x2="703.5" y1="0" y2="0"><stop offset="0" stop-color="#62b0ff"/><stop offset=".48" stop-color="#f2a5ff"/><stop offset=".53" stop-color="#ff9ff8"/><stop offset=".81" stop-color="#ff6bb0"/><stop offset="1" stop-color="#ff5490"/></linearGradient><linearGradient id="g355" gradientUnits="userSpaceOnUse" x1="458.0" x2="703.5" y1="0" y2="0"><stop offset="0" stop-color="#63adff"/><stop offset=".47" stop-color="#efa2ff"/><stop offset=".53" stop-color="#ff9cf8"/><stop offset=".83" stop-color="#ff67ad"/><stop offset="1" stop-color="#ff5290"/></linearGradient><linearGradient id="g356" gradientUnits="userSpaceOnUse" x1="458.0" x2="703.5" y1="0" y2="0"><stop offset="0" stop-color="#63abff"/><stop offset=".48" stop-color="#f39fff"/><stop offset=".53" stop-color="#ff9af9"/><stop offset=".8" stop-color="#ff69b3"/><stop offset="1" stop-color="#ff5190"/></linearGradient><linearGradient id="g357" gradientUnits="userSpaceOnUse" x1="458.0" x2="703.5" y1="0" y2="0"><stop offset="0" stop-color="#64a9ff"/><stop offset=".47" stop-color="#f09dff"/><stop offset=".53" stop-color="#ff97f9"/><stop offset=".81" stop-color="#ff66b1"/><stop offset="1" stop-color="#ff4f91"/></linearGradient><linearGradient id="g358" gradientUnits="userSpaceOnUse" x1="458.0" x2="703.5" y1="0" y2="0"><stop offset="0" stop-color="#64a7ff"/><stop offset=".49" stop-color="#f49aff"/><stop offset=".54" stop-color="#ff93f6"/><stop offset=".84" stop-color="#ff60ab"/><stop offset="1" stop-color="#ff4e91"/></linearGradient><linearGradient id="g359" gradientUnits="userSpaceOnUse" x1="458.0" x2="703.5" y1="0" y2="0"><stop offset="0" stop-color="#65a4ff"/><stop offset=".48" stop-color="#f198ff"/><stop offset=".54" stop-color="#ff92f8"/><stop offset=".82" stop-color="#ff62b1"/><stop offset="1" stop-color="#ff4c92"/></linearGradient><linearGradient id="g360" gradientUnits="userSpaceOnUse" x1="458.0" x2="703.5" y1="0" y2="0"><stop offset="0" stop-color="#65a2ff"/><stop offset=".48" stop-color="#f195ff"/><stop offset=".54" stop-color="#ff8ff8"/><stop offset=".84" stop-color="#ff5dac"/><stop offset="1" stop-color="#ff4b92"/></linearGradient><linearGradient id="g361" gradientUnits="userSpaceOnUse" x1="458.0" x2="703.5" y1="0" y2="0"><stop offset="0" stop-color="#65a1ff"/><stop offset=".49" stop-color="#f593ff"/><stop offset=".55" stop-color="#ff8cf6"/><stop offset=".84" stop-color="#ff5cad"/><stop offset="1" stop-color="#ff4a93"/></linearGradient><linearGradient id="th" x1="0" y1="0" x2="0" y2="1"><stop offset="0" stop-color="#242424"/><stop offset=".45" stop-color="#1e1e1e"/><stop offset=".5" stop-color="#0e0e0e"/><stop offset="1" stop-color="#0c0c0c"/></linearGradient><clipPath id="tbc"><rect x="715.8" y="439" width="455.7" height="146.79999999999995"/></clipPath><linearGradient id="tile" x1="0" y1="0" x2="0" y2="1"><stop offset="0" stop-color="#969696"/><stop offset=".08" stop-color="#888"/><stop offset="1" stop-color="#666"/></linearGradient><linearGradient id="btn" x1="0" y1="0" x2="0" y2="1"><stop offset="0" stop-color="#9a9a9a"/><stop offset=".08" stop-color="#8c8c8c"/><stop offset="1" stop-color="#5c5c5c"/></linearGradient><linearGradient id="gloss" x1="0" y1="0" x2="0" y2="1"><stop offset="0" stop-color="#a4a4a4"/><stop offset=".5" stop-color="#949494"/><stop offset=".52" stop-color="#747474"/><stop offset="1" stop-color="#6a6a6a"/></linearGradient><linearGradient id="circ" x1="0" y1="0" x2="0" y2="1"><stop offset="0" stop-color="#5c5c5c"/><stop offset="1" stop-color="#8a8a8a"/></linearGradient><filter id="glow" x="-10%" y="-20%" width="120%" height="140%"><feGaussianBlur stdDeviation="1.6"/></filter></defs><text x="6" y="53.3" font-size="28" fill="#f8f8f8" textLength="164" lengthAdjust="spacingAndGlyphs" stroke="#f8f8f8" stroke-width=".35">Color Gamut</text>
<text x="89.6" y="101.5" font-size="15" fill="#f4f4f4" textLength="76.8" lengthAdjust="spacingAndGlyphs" stroke="#f4f4f4" stroke-width=".25">dE Formula:</text>
<rect x="172.5" y="87.5" width="97" height="17.5" fill="url(#dd)" stroke="#2b2b2b" stroke-width="1"/>
<text x="176" y="100.5" font-size="12.5" fill="#f0f0f0" textLength="27" lengthAdjust="spacingAndGlyphs">2000</text>
<path d="M258.5 94.5h7l-3.5 4z" fill="#000"/>
<text x="135.5" y="125" font-size="10.3" fill="#e0e0e0" text-anchor="middle" textLength="58" lengthAdjust="spacingAndGlyphs">DeltaE 2000</text>
<rect x="14.3" y="128.5" width="241.7" height="267.0" fill="#232323"/>
<path d="M46.46 128.5V398.5M78.62 128.5V398.5M110.78 128.5V398.5M142.94 128.5V398.5M175.1 128.5V398.5M207.26 128.5V398.5M239.42 128.5V398.5M14.3 395.5v3" stroke="#8a8a8a" stroke-width="1.3" fill="none"/>
<rect x="14.9" y="128.5" width="241.1" height="267.0" fill="none" stroke="#8c8c8c" stroke-width="1.2"/>
<rect x="15.3" y="131.3" width="240.7" height="25.4" fill="url(#hb0)" stroke="#0a0a0a" stroke-width="1"/>
<rect x="15.3" y="165.5" width="111.07" height="25.5" fill="url(#hb1)" stroke="#0a0a0a" stroke-width="1.2"/>
<rect x="15.3" y="198.4" width="212.65" height="26.2" fill="url(#hb2)" stroke="#0a0a0a" stroke-width="1.2"/>
<rect x="15.3" y="231.7" width="137.73" height="26.3" fill="url(#hb3)" stroke="#0a0a0a" stroke-width="1.2"/>
<rect x="15.3" y="265.2" width="137.24" height="25.7" fill="url(#hb4)" stroke="#0a0a0a" stroke-width="1.2"/>
<rect x="15.3" y="298" width="166.35" height="26.2" fill="url(#hb5)" stroke="#0a0a0a" stroke-width="1.2"/>
<rect x="15.3" y="332.5" width="126.57" height="25.5" fill="url(#hb6)" stroke="#0a0a0a" stroke-width="1.2"/>
<rect x="15.3" y="365.8" width="236.67" height="25.6" fill="url(#hb7)" stroke="#0a0a0a" stroke-width="1.2"/>
<text x="14.3" y="412" font-size="10.8" fill="#dcdcdc" text-anchor="middle">0</text>
<text x="46.46" y="412" font-size="10.8" fill="#dcdcdc" text-anchor="middle">2</text>
<text x="78.62" y="412" font-size="10.8" fill="#dcdcdc" text-anchor="middle">4</text>
<text x="110.78" y="412" font-size="10.8" fill="#dcdcdc" text-anchor="middle">6</text>
<text x="142.94" y="412" font-size="10.8" fill="#dcdcdc" text-anchor="middle">8</text>
<text x="175.1" y="412" font-size="10.8" fill="#dcdcdc" text-anchor="middle">10</text>
<text x="207.26" y="412" font-size="10.8" fill="#dcdcdc" text-anchor="middle">12</text>
<text x="239.42" y="412" font-size="10.8" fill="#dcdcdc" text-anchor="middle">14</text>
<rect x="294" y="51.0" width="104" height="227.0" fill="#232323"/>
<path d="M290 51H398M290 88.83H398M290 126.67H398M290 164.5H398M290 202.33H398M290 240.17H398M290 278H398M294 278.0v3M398 278.0v3" stroke="#8a8a8a" stroke-width="1.2" fill="none"/>
<rect x="305" y="129.3" width="81" height="35.2" fill="url(#vb)" stroke="#0c0c0c" stroke-width="1"/>
<rect x="294" y="51.0" width="104" height="227.0" fill="none" stroke="#8c8c8c" stroke-width="1.2"/>
<text x="289" y="54.7" font-size="10" fill="#dcdcdc" text-anchor="end">15</text>
<text x="289" y="92.53" font-size="10" fill="#dcdcdc" text-anchor="end">10</text>
<text x="289" y="130.37" font-size="10" fill="#dcdcdc" text-anchor="end">5</text>
<text x="289" y="168.2" font-size="10" fill="#dcdcdc" text-anchor="end">0</text>
<text x="289" y="206.03" font-size="10" fill="#dcdcdc" text-anchor="end">-5</text>
<text x="289" y="243.87" font-size="10" fill="#dcdcdc" text-anchor="end">-10</text>
<text x="289" y="281.7" font-size="10" fill="#dcdcdc" text-anchor="end">-15</text>
<text x="336" y="46.5" font-size="10.3" fill="#e0e0e0" text-anchor="middle">Delta L</text>
<text x="345.5" y="289.3" font-size="11.5" fill="#e0e0e0" text-anchor="middle">White</text>
<rect x="435.7" y="51.0" width="103.8" height="227.0" fill="#232323"/>
<path d="M431.7 51H539.5M431.7 88.83H539.5M431.7 126.67H539.5M431.7 164.5H539.5M431.7 202.33H539.5M431.7 240.17H539.5M431.7 278H539.5M435.7 278.0v3M539.5 278.0v3" stroke="#8a8a8a" stroke-width="1.2" fill="none"/>
<rect x="447" y="50.5" width="81" height="114" fill="url(#vb)" stroke="#0c0c0c" stroke-width="1"/>
<rect x="435.7" y="51.0" width="103.8" height="227.0" fill="none" stroke="#8c8c8c" stroke-width="1.2"/>
<text x="430.7" y="54.7" font-size="10" fill="#dcdcdc" text-anchor="end">15</text>
<text x="430.7" y="92.53" font-size="10" fill="#dcdcdc" text-anchor="end">10</text>
<text x="430.7" y="130.37" font-size="10" fill="#dcdcdc" text-anchor="end">5</text>
<text x="430.7" y="168.2" font-size="10" fill="#dcdcdc" text-anchor="end">0</text>
<text x="430.7" y="206.03" font-size="10" fill="#dcdcdc" text-anchor="end">-5</text>
<text x="430.7" y="243.87" font-size="10" fill="#dcdcdc" text-anchor="end">-10</text>
<text x="430.7" y="281.7" font-size="10" fill="#dcdcdc" text-anchor="end">-15</text>
<text x="478" y="46.5" font-size="10.3" fill="#e0e0e0" text-anchor="middle">Delta C</text>
<text x="487.3" y="289.3" font-size="11.5" fill="#e0e0e0" text-anchor="middle">White</text>
<rect x="577.3" y="51.0" width="103.7" height="227.0" fill="#232323"/>
<path d="M573.3 51H681M573.3 88.83H681M573.3 126.67H681M573.3 164.5H681M573.3 202.33H681M573.3 240.17H681M573.3 278H681M577.3 278.0v3M681 278.0v3" stroke="#8a8a8a" stroke-width="1.2" fill="none"/>
<rect x="577.3" y="51.0" width="103.7" height="227.0" fill="none" stroke="#8c8c8c" stroke-width="1.2"/>
<text x="572.3" y="54.7" font-size="10" fill="#dcdcdc" text-anchor="end">15</text>
<text x="572.3" y="92.53" font-size="10" fill="#dcdcdc" text-anchor="end">10</text>
<text x="572.3" y="130.37" font-size="10" fill="#dcdcdc" text-anchor="end">5</text>
<text x="572.3" y="168.2" font-size="10" fill="#dcdcdc" text-anchor="end">0</text>
<text x="572.3" y="206.03" font-size="10" fill="#dcdcdc" text-anchor="end">-5</text>
<text x="572.3" y="243.87" font-size="10" fill="#dcdcdc" text-anchor="end">-10</text>
<text x="572.3" y="281.7" font-size="10" fill="#dcdcdc" text-anchor="end">-15</text>
<text x="619.5" y="46.5" font-size="10.3" fill="#e0e0e0" text-anchor="middle">Delta H</text>
<text x="629" y="289.3" font-size="11.5" fill="#e0e0e0" text-anchor="middle">White</text>
<path d="M587.7 164.5H671" stroke="#0c0c0c" stroke-width="1.4"/>
<rect x="270" y="302" width="424.8" height="116.5" fill="#000"/>
<rect x="282.6" y="306.6" width="45" height="47.4" fill="#bac7ef"/><rect x="282.6" y="353.8" width="45" height="48.2" fill="#bebebe"/>
<rect x="282.6" y="306.6" width="45" height="95.4" fill="none" stroke="#e8e8e8" stroke-opacity=".85" stroke-width="1"/>
<text x="305.1" y="412.5" font-size="9.3" fill="#fff" text-anchor="middle">White</text>
<rect x="334.5" y="306.6" width="45" height="47.4" fill="#e6003a"/><rect x="334.5" y="353.8" width="45" height="48.2" fill="#bf3a30"/>
<rect x="334.5" y="306.6" width="45" height="95.4" fill="none" stroke="#e8e8e8" stroke-opacity=".85" stroke-width="1"/>
<text x="357" y="412.5" font-size="9.3" fill="#fff" text-anchor="middle">Red</text>
<rect x="386.4" y="306.6" width="45" height="47.4" fill="#00e660"/><rect x="386.4" y="353.8" width="45" height="48.2" fill="#6ac48c"/>
<rect x="386.4" y="306.6" width="45" height="95.4" fill="none" stroke="#e8e8e8" stroke-opacity=".85" stroke-width="1"/>
<text x="408.9" y="412.5" font-size="9.3" fill="#fff" text-anchor="middle">Green</text>
<rect x="438.3" y="306.6" width="45" height="47.4" fill="#5000f6"/><rect x="438.3" y="353.8" width="45" height="48.2" fill="#3a38bb"/>
<rect x="438.3" y="306.6" width="45" height="95.4" fill="none" stroke="#e8e8e8" stroke-opacity=".85" stroke-width="1"/>
<text x="460.8" y="412.5" font-size="9.3" fill="#fff" text-anchor="middle">Blue</text>
<rect x="490.2" y="306.6" width="45" height="47.4" fill="#00dde8"/><rect x="490.2" y="353.8" width="45" height="48.2" fill="#68c2c2"/>
<rect x="490.2" y="306.6" width="45" height="95.4" fill="none" stroke="#e8e8e8" stroke-opacity=".85" stroke-width="1"/>
<text x="512.7" y="412.5" font-size="9.3" fill="#fff" text-anchor="middle">Cyan</text>
<rect x="542.1" y="306.6" width="45" height="47.4" fill="#e600fa"/><rect x="542.1" y="353.8" width="45" height="48.2" fill="#b04aae"/>
<rect x="542.1" y="306.6" width="45" height="95.4" fill="none" stroke="#e8e8e8" stroke-opacity=".85" stroke-width="1"/>
<text x="564.6" y="412.5" font-size="9.3" fill="#fff" text-anchor="middle">Magenta</text>
<rect x="594" y="306.6" width="45" height="47.4" fill="#b8d200"/><rect x="594" y="353.8" width="45" height="48.2" fill="#bdb83c"/>
<rect x="594" y="306.6" width="45" height="95.4" fill="none" stroke="#e8e8e8" stroke-opacity=".85" stroke-width="1"/>
<text x="616.5" y="412.5" font-size="9.3" fill="#fff" text-anchor="middle">Yellow</text>
<rect x="645.9" y="306.6" width="45" height="47.4" fill="#cdd9ff"/><rect x="645.9" y="353.8" width="45" height="48.2" fill="#d9d9d9"/>
<rect x="645.9" y="306.6" width="45" height="95.4" fill="none" stroke="#e8e8e8" stroke-opacity=".85" stroke-width="1"/>
<text x="668.4" y="412.5" font-size="9.3" fill="#fff" text-anchor="middle">100W</text>
<text x="0" y="0" font-size="9" fill="#fff" text-anchor="middle" transform="translate(279.6 327.4) rotate(-90)">Actual</text>
<text x="0" y="0" font-size="9" fill="#fff" text-anchor="middle" transform="translate(279.6 380.9) rotate(-90)">Target</text>
<rect x="1196.8" y="0" width="3.2" height="673" fill="#272727"/>
<rect x="703" y="30" width="493.6" height="395.8" fill="#333" stroke="#fff" stroke-width="5"/>
<text x="948.5" y="46" font-size="10.3" fill="#e0e0e0" text-anchor="middle">CIE 1976 u'v'</text>
<rect x="732.0" y="48.5" width="460.0" height="354.3" fill="#232323"/>
<g clip-path="url(#plotc)">
<g clip-path="url(#loc)" shape-rendering="crispEdges"><rect x="751.96" y="56" width="47.75" height="2.5" fill="url(#g1)"/><rect x="744.89" y="58" width="77.8" height="2.5" fill="url(#g2)"/><rect x="740.95" y="60" width="101.1" height="2.5" fill="url(#g3)"/><rect x="738.57" y="62" width="121.71" height="2.5" fill="url(#g4)"/><rect x="736.87" y="64" width="141.2" height="2.5" fill="url(#g5)"/><rect x="735.48" y="66" width="160.21" height="2.5" fill="url(#g6)"/><rect x="734.31" y="68" width="178.81" height="2.5" fill="url(#g7)"/><rect x="733.48" y="70" width="197.02" height="2.5" fill="url(#g8)"/><rect x="732.85" y="72" width="215.02" height="2.5" fill="url(#g9)"/><rect x="732.37" y="74" width="232.91" height="2.5" fill="url(#g10)"/><rect x="732.09" y="76" width="250.69" height="2.5" fill="url(#g11)"/><rect x="732" y="78" width="268.13" height="2.5" fill="url(#g12)"/><rect x="732" y="80" width="285.44" height="2.5" fill="url(#g13)"/><rect x="732" y="82" width="302.85" height="2.5" fill="url(#g14)"/><rect x="732" y="84" width="320.26" height="2.5" fill="url(#g15)"/><rect x="732" y="86" width="337.69" height="2.5" fill="url(#g16)"/><rect x="732" y="88" width="355.27" height="2.5" fill="url(#g17)"/><rect x="732" y="90" width="372.7" height="2.5" fill="url(#g18)"/><rect x="732" y="92" width="389.99" height="2.5" fill="url(#g19)"/><rect x="732.19" y="94" width="407.18" height="2.5" fill="url(#g20)"/><rect x="732.48" y="96" width="424.36" height="2.5" fill="url(#g21)"/><rect x="732.79" y="98" width="441.38" height="2.5" fill="url(#g22)"/><rect x="733.1" y="100" width="458.59" height="2.5" fill="url(#g23)"/><rect x="733.44" y="102" width="458.56" height="2.5" fill="url(#g24)"/><rect x="733.8" y="104" width="458.2" height="2.5" fill="url(#g25)"/><rect x="734.2" y="106" width="457.8" height="2.5" fill="url(#g26)"/><rect x="734.65" y="108" width="457.35" height="2.5" fill="url(#g27)"/><rect x="735.12" y="110" width="456.88" height="2.5" fill="url(#g28)"/><rect x="735.63" y="112" width="456.37" height="2.5" fill="url(#g29)"/><rect x="736.16" y="114" width="455.84" height="2.5" fill="url(#g30)"/><rect x="736.71" y="116" width="455.29" height="2.5" fill="url(#g31)"/><rect x="737.28" y="118" width="454.72" height="2.5" fill="url(#g32)"/><rect x="737.87" y="120" width="454.13" height="2.5" fill="url(#g33)"/><rect x="738.46" y="122" width="453.54" height="2.5" fill="url(#g34)"/><rect x="739.06" y="124" width="452.94" height="2.5" fill="url(#g35)"/><rect x="739.66" y="126" width="450.63" height="2.5" fill="url(#g36)"/><rect x="740.27" y="128" width="448.07" height="2.5" fill="url(#g37)"/><rect x="740.9" y="130" width="445.5" height="2.5" fill="url(#g38)"/><rect x="741.54" y="132" width="442.91" height="2.5" fill="url(#g39)"/><rect x="742.21" y="134" width="440.29" height="2.5" fill="url(#g40)"/><rect x="742.89" y="136" width="437.66" height="2.5" fill="url(#g41)"/><rect x="743.59" y="138" width="435.02" height="2.5" fill="url(#g42)"/><rect x="744.3" y="140" width="432.36" height="2.5" fill="url(#g43)"/><rect x="745.03" y="142" width="429.68" height="2.5" fill="url(#g44)"/><rect x="745.77" y="144" width="427" height="2.5" fill="url(#g45)"/><rect x="746.52" y="146" width="424.3" height="2.5" fill="url(#g46)"/><rect x="747.28" y="148" width="421.59" height="2.5" fill="url(#g47)"/><rect x="748.06" y="150" width="418.87" height="2.5" fill="url(#g48)"/><rect x="748.84" y="152" width="416.14" height="2.5" fill="url(#g49)"/><rect x="749.63" y="154" width="413.41" height="2.5" fill="url(#g50)"/><rect x="750.42" y="156" width="410.66" height="2.5" fill="url(#g51)"/><rect x="751.22" y="158" width="407.92" height="2.5" fill="url(#g52)"/><rect x="752.03" y="160" width="405.17" height="2.5" fill="url(#g53)"/><rect x="752.84" y="162" width="402.41" height="2.5" fill="url(#g54)"/><rect x="753.66" y="164" width="399.64" height="2.5" fill="url(#g55)"/><rect x="754.49" y="166" width="396.87" height="2.5" fill="url(#g56)"/><rect x="755.33" y="168" width="394.08" height="2.5" fill="url(#g57)"/><rect x="756.17" y="170" width="391.29" height="2.5" fill="url(#g58)"/><rect x="757.03" y="172" width="388.48" height="2.5" fill="url(#g59)"/><rect x="757.9" y="174" width="385.67" height="2.5" fill="url(#g60)"/><rect x="758.78" y="176" width="382.84" height="2.5" fill="url(#g61)"/><rect x="759.67" y="178" width="380.01" height="2.5" fill="url(#g62)"/><rect x="760.56" y="180" width="377.16" height="2.5" fill="url(#g63)"/><rect x="761.47" y="182" width="374.31" height="2.5" fill="url(#g64)"/><rect x="762.39" y="184" width="371.44" height="2.5" fill="url(#g65)"/><rect x="763.31" y="186" width="368.57" height="2.5" fill="url(#g66)"/><rect x="764.25" y="188" width="365.69" height="2.5" fill="url(#g67)"/><rect x="765.19" y="190" width="362.8" height="2.5" fill="url(#g68)"/><rect x="766.15" y="192" width="359.9" height="2.5" fill="url(#g69)"/><rect x="767.11" y="194" width="356.99" height="2.5" fill="url(#g70)"/><rect x="768.09" y="196" width="354.07" height="2.5" fill="url(#g71)"/><rect x="769.07" y="198" width="351.14" height="2.5" fill="url(#g72)"/><rect x="770.06" y="200" width="348.2" height="2.5" fill="url(#g73)"/><rect x="771.07" y="202" width="345.25" height="2.5" fill="url(#g74)"/><rect x="772.08" y="204" width="342.29" height="2.5" fill="url(#g75)"/><rect x="773.11" y="206" width="339.31" height="2.5" fill="url(#g76)"/><rect x="774.15" y="208" width="336.32" height="2.5" fill="url(#g77)"/><rect x="775.2" y="210" width="333.32" height="2.5" fill="url(#g78)"/><rect x="776.27" y="212" width="330.31" height="2.5" fill="url(#g79)"/><rect x="777.35" y="214" width="327.28" height="2.5" fill="url(#g80)"/><rect x="778.43" y="216" width="324.25" height="2.5" fill="url(#g81)"/><rect x="779.53" y="218" width="321.21" height="2.5" fill="url(#g82)"/><rect x="780.64" y="220" width="318.15" height="2.5" fill="url(#g83)"/><rect x="781.76" y="222" width="315.09" height="2.5" fill="url(#g84)"/><rect x="782.88" y="224" width="312.02" height="2.5" fill="url(#g85)"/><rect x="784.01" y="226" width="308.94" height="2.5" fill="url(#g86)"/><rect x="785.15" y="228" width="305.85" height="2.5" fill="url(#g87)"/><rect x="786.3" y="230" width="302.76" height="2.5" fill="url(#g88)"/><rect x="787.46" y="232" width="299.66" height="2.5" fill="url(#g89)"/><rect x="788.62" y="234" width="296.55" height="2.5" fill="url(#g90)"/><rect x="789.78" y="236" width="293.44" height="2.5" fill="url(#g91)"/><rect x="790.95" y="238" width="290.32" height="2.5" fill="url(#g92)"/><rect x="792.12" y="240" width="287.2" height="2.5" fill="url(#g93)"/><rect x="793.3" y="242" width="284.08" height="2.5" fill="url(#g94)"/><rect x="794.48" y="244" width="280.95" height="2.5" fill="url(#g95)"/><rect x="795.66" y="246" width="277.82" height="2.5" fill="url(#g96)"/><rect x="796.85" y="248" width="274.69" height="2.5" fill="url(#g97)"/><rect x="798.05" y="250" width="271.55" height="2.5" fill="url(#g98)"/><rect x="799.25" y="252" width="268.4" height="2.5" fill="url(#g99)"/><rect x="800.45" y="254" width="265.25" height="2.5" fill="url(#g100)"/><rect x="801.66" y="256" width="262.09" height="2.5" fill="url(#g101)"/><rect x="802.88" y="258" width="258.92" height="2.5" fill="url(#g102)"/><rect x="804.11" y="260" width="255.75" height="2.5" fill="url(#g103)"/><rect x="805.34" y="262" width="252.57" height="2.5" fill="url(#g104)"/><rect x="806.58" y="264" width="249.38" height="2.5" fill="url(#g105)"/><rect x="807.83" y="266" width="246.18" height="2.5" fill="url(#g106)"/><rect x="809.09" y="268" width="242.98" height="2.5" fill="url(#g107)"/><rect x="810.36" y="270" width="239.76" height="2.5" fill="url(#g108)"/><rect x="811.64" y="272" width="236.54" height="2.5" fill="url(#g109)"/><rect x="812.93" y="274" width="233.3" height="2.5" fill="url(#g110)"/><rect x="814.23" y="276" width="230.06" height="2.5" fill="url(#g111)"/><rect x="815.54" y="278" width="226.8" height="2.5" fill="url(#g112)"/><rect x="816.87" y="280" width="223.52" height="2.5" fill="url(#g113)"/><rect x="818.2" y="282" width="220.24" height="2.5" fill="url(#g114)"/><rect x="819.55" y="284" width="216.95" height="2.5" fill="url(#g115)"/><rect x="820.91" y="286" width="213.64" height="2.5" fill="url(#g116)"/><rect x="822.27" y="288" width="210.33" height="2.5" fill="url(#g117)"/><rect x="823.64" y="290" width="207.02" height="2.5" fill="url(#g118)"/><rect x="825.02" y="292" width="203.69" height="2.5" fill="url(#g119)"/><rect x="826.42" y="294" width="200.35" height="2.5" fill="url(#g120)"/><rect x="827.82" y="296" width="197" height="2.5" fill="url(#g121)"/><rect x="829.23" y="298" width="193.64" height="2.5" fill="url(#g122)"/><rect x="830.66" y="300" width="190.26" height="2.5" fill="url(#g123)"/><rect x="832.11" y="302" width="186.87" height="2.5" fill="url(#g124)"/><rect x="833.56" y="304" width="183.47" height="2.5" fill="url(#g125)"/><rect x="835.03" y="306" width="180.05" height="2.5" fill="url(#g126)"/><rect x="836.53" y="308" width="176.61" height="2.5" fill="url(#g127)"/><rect x="838.03" y="310" width="173.16" height="2.5" fill="url(#g128)"/><rect x="839.56" y="312" width="169.68" height="2.5" fill="url(#g129)"/><rect x="841.11" y="314" width="166.19" height="2.5" fill="url(#g130)"/><rect x="842.67" y="316" width="162.68" height="2.5" fill="url(#g131)"/><rect x="844.24" y="318" width="159.16" height="2.5" fill="url(#g132)"/><rect x="845.82" y="320" width="155.63" height="2.5" fill="url(#g133)"/><rect x="847.42" y="322" width="152.09" height="2.5" fill="url(#g134)"/><rect x="849.04" y="324" width="148.52" height="2.5" fill="url(#g135)"/><rect x="850.68" y="326" width="144.94" height="2.5" fill="url(#g136)"/><rect x="852.34" y="328" width="141.33" height="2.5" fill="url(#g137)"/><rect x="854.02" y="330" width="137.7" height="2.5" fill="url(#g138)"/><rect x="855.75" y="332" width="134.03" height="2.5" fill="url(#g139)"/><rect x="857.5" y="334" width="130.33" height="2.5" fill="url(#g140)"/><rect x="859.3" y="336" width="126.58" height="2.5" fill="url(#g141)"/><rect x="861.13" y="338" width="122.81" height="2.5" fill="url(#g142)"/><rect x="863" y="340" width="118.99" height="2.5" fill="url(#g143)"/><rect x="864.92" y="342" width="115.13" height="2.5" fill="url(#g144)"/><rect x="866.86" y="344" width="111.23" height="2.5" fill="url(#g145)"/><rect x="868.84" y="346" width="107.31" height="2.5" fill="url(#g146)"/><rect x="870.86" y="348" width="103.35" height="2.5" fill="url(#g147)"/><rect x="872.91" y="350" width="99.35" height="2.5" fill="url(#g148)"/><rect x="874.99" y="352" width="95.32" height="2.5" fill="url(#g149)"/><rect x="877.14" y="354" width="91.23" height="2.5" fill="url(#g150)"/><rect x="879.33" y="356" width="87.08" height="2.5" fill="url(#g151)"/><rect x="881.58" y="358" width="82.89" height="2.5" fill="url(#g152)"/><rect x="883.86" y="360" width="78.66" height="2.5" fill="url(#g153)"/><rect x="886.18" y="362" width="74.39" height="2.5" fill="url(#g154)"/><rect x="888.53" y="364" width="70.1" height="2.5" fill="url(#g155)"/><rect x="890.9" y="366" width="65.79" height="2.5" fill="url(#g156)"/><rect x="893.27" y="368" width="61.46" height="2.5" fill="url(#g157)"/><rect x="895.65" y="370" width="57.13" height="2.5" fill="url(#g158)"/><rect x="898.04" y="372" width="52.8" height="2.5" fill="url(#g159)"/><rect x="900.46" y="374" width="48.43" height="2.5" fill="url(#g160)"/><rect x="902.91" y="376" width="44.04" height="2.5" fill="url(#g161)"/><rect x="905.36" y="378" width="39.65" height="2.5" fill="url(#g162)"/><rect x="907.8" y="380" width="35.25" height="2.5" fill="url(#g163)"/><rect x="910.23" y="382" width="30.88" height="2.5" fill="url(#g164)"/><rect x="912.59" y="384" width="26.57" height="2.5" fill="url(#g165)"/><rect x="914.94" y="386" width="22.27" height="2.5" fill="url(#g166)"/><rect x="917.35" y="388" width="17.91" height="2.5" fill="url(#g167)"/><rect x="919.8" y="390" width="13.52" height="2.5" fill="url(#g168)"/><rect x="922.56" y="392" width="8.82" height="2.5" fill="url(#g169)"/></g>
<g clip-path="url(#tri)" shape-rendering="crispEdges"><rect x="826.33" y="71" width="21.58" height="2.5" fill="url(#g170)"/><rect x="826.62" y="73" width="42.69" height="2.5" fill="url(#g171)"/><rect x="826.94" y="75" width="63.76" height="2.5" fill="url(#g172)"/><rect x="827.26" y="77" width="84.82" height="2.5" fill="url(#g173)"/><rect x="827.59" y="79" width="105.89" height="2.5" fill="url(#g174)"/><rect x="827.91" y="81" width="126.95" height="2.5" fill="url(#g175)"/><rect x="828.24" y="83" width="148.02" height="2.5" fill="url(#g176)"/><rect x="828.56" y="85" width="169.09" height="2.5" fill="url(#g177)"/><rect x="828.89" y="87" width="190.15" height="2.5" fill="url(#g178)"/><rect x="829.21" y="89" width="211.22" height="2.5" fill="url(#g179)"/><rect x="829.53" y="91" width="232.28" height="2.5" fill="url(#g180)"/><rect x="829.86" y="93" width="249.18" height="2.5" fill="url(#g181)"/><rect x="830.18" y="95" width="248.48" height="2.5" fill="url(#g182)"/><rect x="830.51" y="97" width="246.19" height="2.5" fill="url(#g183)"/><rect x="830.83" y="99" width="243.9" height="2.5" fill="url(#g184)"/><rect x="831.16" y="101" width="241.62" height="2.5" fill="url(#g185)"/><rect x="831.48" y="103" width="239.33" height="2.5" fill="url(#g186)"/><rect x="831.8" y="105" width="237.04" height="2.5" fill="url(#g187)"/><rect x="832.13" y="107" width="234.76" height="2.5" fill="url(#g188)"/><rect x="832.45" y="109" width="232.47" height="2.5" fill="url(#g189)"/><rect x="832.78" y="111" width="230.18" height="2.5" fill="url(#g190)"/><rect x="833.1" y="113" width="227.9" height="2.5" fill="url(#g191)"/><rect x="833.43" y="115" width="225.61" height="2.5" fill="url(#g192)"/><rect x="833.75" y="117" width="223.33" height="2.5" fill="url(#g193)"/><rect x="834.07" y="119" width="221.04" height="2.5" fill="url(#g194)"/><rect x="834.4" y="121" width="218.75" height="2.5" fill="url(#g195)"/><rect x="834.72" y="123" width="216.47" height="2.5" fill="url(#g196)"/><rect x="835.05" y="125" width="214.18" height="2.5" fill="url(#g197)"/><rect x="835.37" y="127" width="211.89" height="2.5" fill="url(#g198)"/><rect x="835.7" y="129" width="209.61" height="2.5" fill="url(#g199)"/><rect x="836.02" y="131" width="207.32" height="2.5" fill="url(#g200)"/><rect x="836.34" y="133" width="205.04" height="2.5" fill="url(#g201)"/><rect x="836.67" y="135" width="202.75" height="2.5" fill="url(#g202)"/><rect x="836.99" y="137" width="200.46" height="2.5" fill="url(#g203)"/><rect x="837.32" y="139" width="198.18" height="2.5" fill="url(#g204)"/><rect x="837.64" y="141" width="195.89" height="2.5" fill="url(#g205)"/><rect x="837.97" y="143" width="193.6" height="2.5" fill="url(#g206)"/><rect x="838.29" y="145" width="191.32" height="2.5" fill="url(#g207)"/><rect x="838.61" y="147" width="189.03" height="2.5" fill="url(#g208)"/><rect x="838.94" y="149" width="186.75" height="2.5" fill="url(#g209)"/><rect x="839.26" y="151" width="184.46" height="2.5" fill="url(#g210)"/><rect x="839.59" y="153" width="182.17" height="2.5" fill="url(#g211)"/><rect x="839.91" y="155" width="179.89" height="2.5" fill="url(#g212)"/><rect x="840.24" y="157" width="177.6" height="2.5" fill="url(#g213)"/><rect x="840.56" y="159" width="175.31" height="2.5" fill="url(#g214)"/><rect x="840.88" y="161" width="173.03" height="2.5" fill="url(#g215)"/><rect x="841.21" y="163" width="170.74" height="2.5" fill="url(#g216)"/><rect x="841.53" y="165" width="168.46" height="2.5" fill="url(#g217)"/><rect x="841.86" y="167" width="166.17" height="2.5" fill="url(#g218)"/><rect x="842.18" y="169" width="163.88" height="2.5" fill="url(#g219)"/><rect x="842.51" y="171" width="161.6" height="2.5" fill="url(#g220)"/><rect x="842.83" y="173" width="159.31" height="2.5" fill="url(#g221)"/><rect x="843.15" y="175" width="157.02" height="2.5" fill="url(#g222)"/><rect x="843.48" y="177" width="154.74" height="2.5" fill="url(#g223)"/><rect x="843.8" y="179" width="152.45" height="2.5" fill="url(#g224)"/><rect x="844.13" y="181" width="150.16" height="2.5" fill="url(#g225)"/><rect x="844.45" y="183" width="147.88" height="2.5" fill="url(#g226)"/><rect x="844.78" y="185" width="145.59" height="2.5" fill="url(#g227)"/><rect x="845.1" y="187" width="143.31" height="2.5" fill="url(#g228)"/><rect x="845.42" y="189" width="141.02" height="2.5" fill="url(#g229)"/><rect x="845.75" y="191" width="138.73" height="2.5" fill="url(#g230)"/><rect x="846.07" y="193" width="136.45" height="2.5" fill="url(#g231)"/><rect x="846.4" y="195" width="134.16" height="2.5" fill="url(#g232)"/><rect x="846.72" y="197" width="131.87" height="2.5" fill="url(#g233)"/><rect x="847.05" y="199" width="129.59" height="2.5" fill="url(#g234)"/><rect x="847.37" y="201" width="127.3" height="2.5" fill="url(#g235)"/><rect x="847.7" y="203" width="125.02" height="2.5" fill="url(#g236)"/><rect x="848.02" y="205" width="122.73" height="2.5" fill="url(#g237)"/><rect x="848.34" y="207" width="120.44" height="2.5" fill="url(#g238)"/><rect x="848.67" y="209" width="118.16" height="2.5" fill="url(#g239)"/><rect x="848.99" y="211" width="115.87" height="2.5" fill="url(#g240)"/><rect x="849.32" y="213" width="113.58" height="2.5" fill="url(#g241)"/><rect x="849.64" y="215" width="111.3" height="2.5" fill="url(#g242)"/><rect x="849.97" y="217" width="109.01" height="2.5" fill="url(#g243)"/><rect x="850.29" y="219" width="106.73" height="2.5" fill="url(#g244)"/><rect x="850.61" y="221" width="104.44" height="2.5" fill="url(#g245)"/><rect x="850.94" y="223" width="102.15" height="2.5" fill="url(#g246)"/><rect x="851.26" y="225" width="99.87" height="2.5" fill="url(#g247)"/><rect x="851.59" y="227" width="97.58" height="2.5" fill="url(#g248)"/><rect x="851.91" y="229" width="95.29" height="2.5" fill="url(#g249)"/><rect x="852.24" y="231" width="93.01" height="2.5" fill="url(#g250)"/><rect x="852.56" y="233" width="90.72" height="2.5" fill="url(#g251)"/><rect x="852.88" y="235" width="88.43" height="2.5" fill="url(#g252)"/><rect x="853.21" y="237" width="86.15" height="2.5" fill="url(#g253)"/><rect x="853.53" y="239" width="83.86" height="2.5" fill="url(#g254)"/><rect x="853.86" y="241" width="81.58" height="2.5" fill="url(#g255)"/><rect x="854.18" y="243" width="79.29" height="2.5" fill="url(#g256)"/><rect x="854.51" y="245" width="77" height="2.5" fill="url(#g257)"/><rect x="854.83" y="247" width="74.72" height="2.5" fill="url(#g258)"/><rect x="855.15" y="249" width="72.43" height="2.5" fill="url(#g259)"/><rect x="855.48" y="251" width="70.14" height="2.5" fill="url(#g260)"/><rect x="855.8" y="253" width="67.86" height="2.5" fill="url(#g261)"/><rect x="856.13" y="255" width="65.57" height="2.5" fill="url(#g262)"/><rect x="856.45" y="257" width="63.29" height="2.5" fill="url(#g263)"/><rect x="856.78" y="259" width="61" height="2.5" fill="url(#g264)"/><rect x="857.1" y="261" width="58.71" height="2.5" fill="url(#g265)"/><rect x="857.42" y="263" width="56.43" height="2.5" fill="url(#g266)"/><rect x="857.75" y="265" width="54.14" height="2.5" fill="url(#g267)"/><rect x="858.07" y="267" width="51.85" height="2.5" fill="url(#g268)"/><rect x="858.4" y="269" width="49.57" height="2.5" fill="url(#g269)"/><rect x="858.72" y="271" width="47.28" height="2.5" fill="url(#g270)"/><rect x="859.05" y="273" width="45" height="2.5" fill="url(#g271)"/><rect x="859.37" y="275" width="42.71" height="2.5" fill="url(#g272)"/><rect x="859.69" y="277" width="40.42" height="2.5" fill="url(#g273)"/><rect x="860.02" y="279" width="38.14" height="2.5" fill="url(#g274)"/><rect x="860.34" y="281" width="35.85" height="2.5" fill="url(#g275)"/><rect x="860.67" y="283" width="33.56" height="2.5" fill="url(#g276)"/><rect x="860.99" y="285" width="31.28" height="2.5" fill="url(#g277)"/><rect x="861.32" y="287" width="28.99" height="2.5" fill="url(#g278)"/><rect x="861.64" y="289" width="26.71" height="2.5" fill="url(#g279)"/><rect x="861.96" y="291" width="24.42" height="2.5" fill="url(#g280)"/><rect x="862.29" y="293" width="22.13" height="2.5" fill="url(#g281)"/><rect x="862.61" y="295" width="19.85" height="2.5" fill="url(#g282)"/><rect x="862.94" y="297" width="17.56" height="2.5" fill="url(#g283)"/><rect x="863.26" y="299" width="15.27" height="2.5" fill="url(#g284)"/><rect x="863.59" y="301" width="12.99" height="2.5" fill="url(#g285)"/><rect x="863.91" y="303" width="10.7" height="2.5" fill="url(#g286)"/><rect x="864.23" y="305" width="8.41" height="2.5" fill="url(#g287)"/><rect x="864.56" y="307" width="6.13" height="2.5" fill="url(#g288)"/><rect x="864.88" y="309" width="3.84" height="2.5" fill="url(#g289)"/></g>
</g>
<rect x="732.0" y="48.5" width="460.0" height="354.3" fill="none" stroke="#8c8c8c" stroke-width="1.2"/>
<path d="M732 402.8v4M732.0 402.8h-4M770.33 402.8v4M732.0 373.33h-4M808.67 402.8v4M732.0 343.86h-4M847 402.8v4M732.0 314.39h-4M885.33 402.8v4M732.0 284.92h-4M923.67 402.8v4M732.0 255.45h-4M962 402.8v4M732.0 225.98h-4M1000.33 402.8v4M732.0 196.51h-4M1038.67 402.8v4M732.0 167.04h-4M1077 402.8v4M732.0 137.57h-4M1115.33 402.8v4M732.0 108.1h-4M1153.67 402.8v4M732.0 78.63h-4" stroke="#bbb" stroke-width="1.2" fill="none"/>
<text x="732" y="418.5" font-size="10.8" fill="#dcdcdc" text-anchor="middle">0</text>
<text x="727" y="406.7" font-size="10.8" fill="#dcdcdc" text-anchor="end">0</text>
<text x="770.33" y="418.5" font-size="10.8" fill="#dcdcdc" text-anchor="middle">0,05</text>
<text x="727" y="377.23" font-size="10.8" fill="#dcdcdc" text-anchor="end">0,05</text>
<text x="808.67" y="418.5" font-size="10.8" fill="#dcdcdc" text-anchor="middle">0,1</text>
<text x="727" y="347.76" font-size="10.8" fill="#dcdcdc" text-anchor="end">0,1</text>
<text x="847" y="418.5" font-size="10.8" fill="#dcdcdc" text-anchor="middle">0,15</text>
<text x="727" y="318.29" font-size="10.8" fill="#dcdcdc" text-anchor="end">0,15</text>
<text x="885.33" y="418.5" font-size="10.8" fill="#dcdcdc" text-anchor="middle">0,2</text>
<text x="727" y="288.82" font-size="10.8" fill="#dcdcdc" text-anchor="end">0,2</text>
<text x="923.67" y="418.5" font-size="10.8" fill="#dcdcdc" text-anchor="middle">0,25</text>
<text x="727" y="259.35" font-size="10.8" fill="#dcdcdc" text-anchor="end">0,25</text>
<text x="962" y="418.5" font-size="10.8" fill="#dcdcdc" text-anchor="middle">0,3</text>
<text x="727" y="229.88" font-size="10.8" fill="#dcdcdc" text-anchor="end">0,3</text>
<text x="1000.33" y="418.5" font-size="10.8" fill="#dcdcdc" text-anchor="middle">0,35</text>
<text x="727" y="200.41" font-size="10.8" fill="#dcdcdc" text-anchor="end">0,35</text>
<text x="1038.67" y="418.5" font-size="10.8" fill="#dcdcdc" text-anchor="middle">0,4</text>
<text x="727" y="170.94" font-size="10.8" fill="#dcdcdc" text-anchor="end">0,4</text>
<text x="1077" y="418.5" font-size="10.8" fill="#dcdcdc" text-anchor="middle">0,45</text>
<text x="727" y="141.47" font-size="10.8" fill="#dcdcdc" text-anchor="end">0,45</text>
<text x="1115.33" y="418.5" font-size="10.8" fill="#dcdcdc" text-anchor="middle">0,5</text>
<text x="727" y="112" font-size="10.8" fill="#dcdcdc" text-anchor="end">0,5</text>
<text x="1153.67" y="418.5" font-size="10.8" fill="#dcdcdc" text-anchor="middle">0,55</text>
<text x="727" y="82.53" font-size="10.8" fill="#dcdcdc" text-anchor="end">0,55</text>
<rect x="1007.5" y="379.5" width="184" height="22.6" fill="#2e2e2e"/>
<text x="1009" y="394.8" font-size="14" fill="#f0f0f0" textLength="158.8" lengthAdjust="spacingAndGlyphs" xml:space="preserve">Gamut Coverage:&#160; 99,6%</text>
<rect x="878.37" y="121.67" width="9.2" height="9.2" fill="#f4f8ff" stroke="#141414" stroke-width="1.6"/>
<rect x="1072.24" y="89.51" width="9.2" height="9.2" fill="none" stroke="#f4f4f4" stroke-width="1.3"/>
<rect x="822.53" y="66.16" width="9.2" height="9.2" fill="none" stroke="#f4f4f4" stroke-width="1.3"/>
<rect x="861.2" y="304.64" width="9.2" height="9.2" fill="none" stroke="#f4f4f4" stroke-width="1.3"/>
<rect x="832.74" y="129.25" width="9.2" height="9.2" fill="none" stroke="#f4f4f4" stroke-width="1.3"/>
<rect x="960.53" y="203.34" width="9.2" height="9.2" fill="none" stroke="#f4f4f4" stroke-width="1.3"/>
<rect x="883.03" y="71.81" width="9.2" height="9.2" fill="none" stroke="#f4f4f4" stroke-width="1.3"/>
<circle cx="1120.99" cy="99.13" r="3" fill="#d00000" stroke="#101010" stroke-width="1.1"/>
<circle cx="804.4" cy="63.34" r="3" fill="#00c800" stroke="#101010" stroke-width="1.1"/>
<circle cx="881.83" cy="325.48" r="3" fill="#0000a8" stroke="#101010" stroke-width="1.1"/>
<circle cx="827.75" cy="142.24" r="3" fill="#00c4c4" stroke="#101010" stroke-width="1.1"/>
<circle cx="970.79" cy="240.5" r="3" fill="#b800b8" stroke="#101010" stroke-width="1.1"/>
<circle cx="873.17" cy="71.28" r="3" fill="#ccb400" stroke="#101010" stroke-width="1.1"/>
<ellipse cx="875.5" cy="144.9" rx="3.2" ry="3" fill="#222" stroke="#101010" stroke-width="1"/>
<ellipse cx="876.8" cy="144.3" rx="3.5" ry="3" fill="#fff" stroke="#101010" stroke-width="1.1"/>
<text x="10.7" y="476" font-size="21.5" fill="#f8f8f8" textLength="157.2" lengthAdjust="spacingAndGlyphs" stroke="#f8f8f8" stroke-width=".3">Current Reading</text>
<text x="10.7" y="525.8" font-size="17.5" fill="#f8f8f8" textLength="63.3" lengthAdjust="spacingAndGlyphs" stroke="#f8f8f8" stroke-width=".3">x: 0,276</text>
<text x="123.4" y="525.8" font-size="17.5" fill="#f8f8f8" textLength="63.6" lengthAdjust="spacingAndGlyphs" stroke="#f8f8f8" stroke-width=".3">y: 0,284</text>
<text x="10.7" y="554.8" font-size="17.5" fill="#f8f8f8" textLength="69" lengthAdjust="spacingAndGlyphs" stroke="#f8f8f8" stroke-width=".3">fL: 77,31</text>
<text x="10.7" y="584.6" font-size="17.5" fill="#f8f8f8" textLength="114.6" lengthAdjust="spacingAndGlyphs" stroke="#f8f8f8" stroke-width=".3">cd/m²: 264,89</text>
<text x="335.7" y="452" font-size="10.2" fill="#e0e0e0" text-anchor="middle">RGB Balance</text>
<rect x="257.4" y="456.5" width="179.4" height="129.6" fill="#232323"/>
<path d="M253.4 456.5H436.8M253.4 488.9H436.8M253.4 521.3H436.8M253.4 553.7H436.8M253.4 586.1H436.8M257.4 586.1v3M436.8 586.1v3" stroke="#8a8a8a" stroke-width="1.3" fill="none"/>
<rect x="274.7" y="523.5" width="46.5" height="62.6" fill="url(#rb1)" stroke="#060606" stroke-width="1.2"/>
<rect x="322.4" y="506.3" width="46.8" height="79.8" fill="url(#rb2)" stroke="#060606" stroke-width="1.2"/>
<rect x="370.6" y="462.1" width="46.6" height="124" fill="url(#rb3)" stroke="#060606" stroke-width="1.2"/>
<rect x="257.4" y="456.5" width="179.4" height="129.6" fill="none" stroke="#8c8c8c" stroke-width="1.3"/>
<text x="251.9" y="460.4" font-size="10.6" fill="#dcdcdc" text-anchor="end">120</text>
<text x="251.9" y="492.8" font-size="10.6" fill="#dcdcdc" text-anchor="end">110</text>
<text x="251.9" y="525.2" font-size="10.6" fill="#dcdcdc" text-anchor="end">100</text>
<text x="251.9" y="557.6" font-size="10.6" fill="#dcdcdc" text-anchor="end">90</text>
<text x="251.9" y="590" font-size="10.6" fill="#dcdcdc" text-anchor="end">80</text>
<text x="347" y="597.3" font-size="11.5" fill="#e0e0e0" text-anchor="middle">White</text>
<text x="580.4" y="446.6" font-size="10.2" fill="#e0e0e0" text-anchor="middle">CIE 1931 xy</text>
<g clip-path="url(#xyc)"><g shape-rendering="crispEdges"><rect x="458.0" y="450" width="245.5" height="2.4" fill="url(#g290)"/><rect x="458.0" y="452" width="245.5" height="2.4" fill="url(#g291)"/><rect x="458.0" y="454" width="245.5" height="2.4" fill="url(#g292)"/><rect x="458.0" y="456" width="245.5" height="2.4" fill="url(#g293)"/><rect x="458.0" y="458" width="245.5" height="2.4" fill="url(#g294)"/><rect x="458.0" y="460" width="245.5" height="2.4" fill="url(#g295)"/><rect x="458.0" y="462" width="245.5" height="2.4" fill="url(#g296)"/><rect x="458.0" y="464" width="245.5" height="2.4" fill="url(#g297)"/><rect x="458.0" y="466" width="245.5" height="2.4" fill="url(#g298)"/><rect x="458.0" y="468" width="245.5" height="2.4" fill="url(#g299)"/><rect x="458.0" y="470" width="245.5" height="2.4" fill="url(#g300)"/><rect x="458.0" y="472" width="245.5" height="2.4" fill="url(#g301)"/><rect x="458.0" y="474" width="245.5" height="2.4" fill="url(#g302)"/><rect x="458.0" y="476" width="245.5" height="2.4" fill="url(#g303)"/><rect x="458.0" y="478" width="245.5" height="2.4" fill="url(#g304)"/><rect x="458.0" y="480" width="245.5" height="2.4" fill="url(#g305)"/><rect x="458.0" y="482" width="245.5" height="2.4" fill="url(#g306)"/><rect x="458.0" y="484" width="245.5" height="2.4" fill="url(#g307)"/><rect x="458.0" y="486" width="245.5" height="2.4" fill="url(#g308)"/><rect x="458.0" y="488" width="245.5" height="2.4" fill="url(#g309)"/><rect x="458.0" y="490" width="245.5" height="2.4" fill="url(#g310)"/><rect x="458.0" y="492" width="245.5" height="2.4" fill="url(#g311)"/><rect x="458.0" y="494" width="245.5" height="2.4" fill="url(#g312)"/><rect x="458.0" y="496" width="245.5" height="2.4" fill="url(#g313)"/><rect x="458.0" y="498" width="245.5" height="2.4" fill="url(#g314)"/><rect x="458.0" y="500" width="245.5" height="2.4" fill="url(#g315)"/><rect x="458.0" y="502" width="245.5" height="2.4" fill="url(#g316)"/><rect x="458.0" y="504" width="245.5" height="2.4" fill="url(#g317)"/><rect x="458.0" y="506" width="245.5" height="2.4" fill="url(#g318)"/><rect x="458.0" y="508" width="245.5" height="2.4" fill="url(#g319)"/><rect x="458.0" y="510" width="245.5" height="2.4" fill="url(#g320)"/><rect x="458.0" y="512" width="245.5" height="2.4" fill="url(#g321)"/><rect x="458.0" y="514" width="245.5" height="2.4" fill="url(#g322)"/><rect x="458.0" y="516" width="245.5" height="2.4" fill="url(#g323)"/><rect x="458.0" y="518" width="245.5" height="2.4" fill="url(#g324)"/><rect x="458.0" y="520" width="245.5" height="2.4" fill="url(#g325)"/><rect x="458.0" y="522" width="245.5" height="2.4" fill="url(#g326)"/><rect x="458.0" y="524" width="245.5" height="2.4" fill="url(#g327)"/><rect x="458.0" y="526" width="245.5" height="2.4" fill="url(#g328)"/><rect x="458.0" y="528" width="245.5" height="2.4" fill="url(#g329)"/><rect x="458.0" y="530" width="245.5" height="2.4" fill="url(#g330)"/><rect x="458.0" y="532" width="245.5" height="2.4" fill="url(#g331)"/><rect x="458.0" y="534" width="245.5" height="2.4" fill="url(#g332)"/><rect x="458.0" y="536" width="245.5" height="2.4" fill="url(#g333)"/><rect x="458.0" y="538" width="245.5" height="2.4" fill="url(#g334)"/><rect x="458.0" y="540" width="245.5" height="2.4" fill="url(#g335)"/><rect x="458.0" y="542" width="245.5" height="2.4" fill="url(#g336)"/><rect x="458.0" y="544" width="245.5" height="2.4" fill="url(#g337)"/><rect x="458.0" y="546" width="245.5" height="2.4" fill="url(#g338)"/><rect x="458.0" y="548" width="245.5" height="2.4" fill="url(#g339)"/><rect x="458.0" y="550" width="245.5" height="2.4" fill="url(#g340)"/><rect x="458.0" y="552" width="245.5" height="2.4" fill="url(#g341)"/><rect x="458.0" y="554" width="245.5" height="2.4" fill="url(#g342)"/><rect x="458.0" y="556" width="245.5" height="2.4" fill="url(#g343)"/><rect x="458.0" y="558" width="245.5" height="2.4" fill="url(#g344)"/><rect x="458.0" y="560" width="245.5" height="2.4" fill="url(#g345)"/><rect x="458.0" y="562" width="245.5" height="2.4" fill="url(#g346)"/><rect x="458.0" y="564" width="245.5" height="2.4" fill="url(#g347)"/><rect x="458.0" y="566" width="245.5" height="2.4" fill="url(#g348)"/><rect x="458.0" y="568" width="245.5" height="2.4" fill="url(#g349)"/><rect x="458.0" y="570" width="245.5" height="2.4" fill="url(#g350)"/><rect x="458.0" y="572" width="245.5" height="2.4" fill="url(#g351)"/><rect x="458.0" y="574" width="245.5" height="2.4" fill="url(#g352)"/><rect x="458.0" y="576" width="245.5" height="2.4" fill="url(#g353)"/><rect x="458.0" y="578" width="245.5" height="2.4" fill="url(#g354)"/><rect x="458.0" y="580" width="245.5" height="2.4" fill="url(#g355)"/><rect x="458.0" y="582" width="245.5" height="2.4" fill="url(#g356)"/><rect x="458.0" y="584" width="245.5" height="2.4" fill="url(#g357)"/><rect x="458.0" y="586" width="245.5" height="2.4" fill="url(#g358)"/><rect x="458.0" y="588" width="245.5" height="2.4" fill="url(#g359)"/><rect x="458.0" y="590" width="245.5" height="2.4" fill="url(#g360)"/><rect x="458.0" y="592" width="245.5" height="1" fill="url(#g361)"/></g></g>
<rect x="458" y="450" width="245.5" height="142.6" fill="none" stroke="#777" stroke-width="1"/>
<rect x="574.6" y="515.4" width="10" height="10" fill="#fff" stroke="#0a0a0a" stroke-width="1.6"/>
<ellipse cx="490.3" cy="584.6" rx="3.3" ry="2.9" fill="#c8c8c8" stroke="#222" stroke-width="1"/>
<ellipse cx="498.3" cy="580" rx="3.2" ry="3.6" fill="#fff" stroke="#222" stroke-width="1"/>
<rect x="715.8" y="439" width="467.8" height="160" fill="#2a2a2a"/>
<rect x="715.8" y="439" width="455.7" height="24" fill="url(#th)"/>
<g clip-path="url(#tbc)">
<text x="810.5" y="456.3" font-size="11.5" fill="#fafafa" text-anchor="middle">White</text>
<text x="863.2" y="456.3" font-size="11.5" fill="#fafafa" text-anchor="middle">Red</text>
<text x="915.6" y="456.3" font-size="11.5" fill="#fafafa" text-anchor="middle">Green</text>
<text x="968.1" y="456.3" font-size="11.5" fill="#fafafa" text-anchor="middle">Blue</text>
<text x="1020.8" y="456.3" font-size="11.5" fill="#fafafa" text-anchor="middle">Cyan</text>
<text x="1076.6" y="456.3" font-size="11.5" fill="#fafafa" text-anchor="middle">Magenta</text>
<text x="1132.5" y="456.3" font-size="11.5" fill="#fafafa" text-anchor="middle">Yellow</text>
<rect x="715.8" y="462.9" width="467.8" height="22.4" fill="#383838"/>
<text x="725.7" y="479.1" font-size="13.5" fill="#f4f4f4" font-weight="bold" textLength="45" lengthAdjust="spacingAndGlyphs">x: CIE31</text>
<text x="785.6" y="479.1" font-size="12.3" fill="#f6f6f6" textLength="36.35" lengthAdjust="spacingAndGlyphs">0,2760</text>
<text x="841.8" y="479.1" font-size="12.3" fill="#f6f6f6" textLength="36.35" lengthAdjust="spacingAndGlyphs">0,6708</text>
<text x="890.8" y="479.1" font-size="12.3" fill="#f6f6f6" textLength="36.35" lengthAdjust="spacingAndGlyphs">0,2546</text>
<text x="946.7" y="479.1" font-size="12.3" fill="#f6f6f6" textLength="36.35" lengthAdjust="spacingAndGlyphs">0,1593</text>
<text x="995.8" y="479.1" font-size="12.3" fill="#f6f6f6" textLength="36.35" lengthAdjust="spacingAndGlyphs">0,1988</text>
<text x="1052" y="479.1" font-size="12.3" fill="#f6f6f6" textLength="36.35" lengthAdjust="spacingAndGlyphs">0,2965</text>
<text x="1107.5" y="479.1" font-size="12.3" fill="#f6f6f6" textLength="36.35" lengthAdjust="spacingAndGlyphs">0,4038</text>
<text x="1163.8" y="479.1" font-size="12.3" fill="#f6f6f6" textLength="36.35" lengthAdjust="spacingAndGlyphs">0,2760</text>
<rect x="715.8" y="485.2" width="467.8" height="22.4" fill="#6c6c6c"/>
<text x="725.7" y="501.4" font-size="13.5" fill="#f4f4f4" font-weight="bold" textLength="45" lengthAdjust="spacingAndGlyphs">y: CIE31</text>
<text x="785.6" y="501.4" font-size="12.3" fill="#f6f6f6" textLength="36.35" lengthAdjust="spacingAndGlyphs">0,2840</text>
<text x="841.8" y="501.4" font-size="12.3" fill="#f6f6f6" textLength="36.35" lengthAdjust="spacingAndGlyphs">0,3017</text>
<text x="890.8" y="501.4" font-size="12.3" fill="#f6f6f6" textLength="36.35" lengthAdjust="spacingAndGlyphs">0,6825</text>
<text x="946.7" y="501.4" font-size="12.3" fill="#f6f6f6" textLength="36.35" lengthAdjust="spacingAndGlyphs">0,0470</text>
<text x="995.8" y="501.4" font-size="12.3" fill="#f6f6f6" textLength="36.35" lengthAdjust="spacingAndGlyphs">0,3099</text>
<text x="1052" y="501.4" font-size="12.3" fill="#f6f6f6" textLength="36.35" lengthAdjust="spacingAndGlyphs">0,1158</text>
<text x="1107.5" y="501.4" font-size="12.3" fill="#f6f6f6" textLength="36.35" lengthAdjust="spacingAndGlyphs">0,5447</text>
<text x="1163.8" y="501.4" font-size="12.3" fill="#f6f6f6" textLength="36.35" lengthAdjust="spacingAndGlyphs">0,2840</text>
<rect x="715.8" y="507.5" width="467.8" height="22.4" fill="#383838"/>
<text x="725.7" y="523.7" font-size="13.5" fill="#f4f4f4" font-weight="bold" textLength="7.5" lengthAdjust="spacingAndGlyphs">Y</text>
<text x="785.6" y="523.7" font-size="12.3" fill="#f6f6f6" textLength="49.85" lengthAdjust="spacingAndGlyphs">264,8915</text>
<text x="841.8" y="523.7" font-size="12.3" fill="#f6f6f6" textLength="43.1" lengthAdjust="spacingAndGlyphs">65,5224</text>
<text x="890.8" y="523.7" font-size="12.3" fill="#f6f6f6" textLength="49.85" lengthAdjust="spacingAndGlyphs">227,5524</text>
<text x="946.7" y="523.7" font-size="12.3" fill="#f6f6f6" textLength="43.1" lengthAdjust="spacingAndGlyphs">24,7155</text>
<text x="995.8" y="523.7" font-size="12.3" fill="#f6f6f6" textLength="49.85" lengthAdjust="spacingAndGlyphs">240,7745</text>
<text x="1052" y="523.7" font-size="12.3" fill="#f6f6f6" textLength="49.85" lengthAdjust="spacingAndGlyphs">103,4382</text>
<text x="1107.5" y="523.7" font-size="12.3" fill="#f6f6f6" textLength="49.85" lengthAdjust="spacingAndGlyphs">242,8970</text>
<text x="1163.8" y="523.7" font-size="12.3" fill="#f6f6f6" textLength="49.85" lengthAdjust="spacingAndGlyphs">410,5512</text>
<rect x="715.8" y="529.8" width="467.8" height="22.4" fill="#6c6c6c"/>
<text x="725.7" y="546" font-size="13.5" fill="#f4f4f4" font-weight="bold" textLength="47" lengthAdjust="spacingAndGlyphs">Target Y</text>
<text x="785.6" y="546" font-size="12.3" fill="#f6f6f6" textLength="49.85" lengthAdjust="spacingAndGlyphs">228,1081</text>
<text x="841.8" y="546" font-size="12.3" fill="#f6f6f6" textLength="43.1" lengthAdjust="spacingAndGlyphs">48,5085</text>
<text x="890.8" y="546" font-size="12.3" fill="#f6f6f6" textLength="49.85" lengthAdjust="spacingAndGlyphs">163,1334</text>
<text x="946.7" y="546" font-size="12.3" fill="#f6f6f6" textLength="43.1" lengthAdjust="spacingAndGlyphs">16,4661</text>
<text x="995.8" y="546" font-size="12.3" fill="#f6f6f6" textLength="49.85" lengthAdjust="spacingAndGlyphs">179,5995</text>
<text x="1052" y="546" font-size="12.3" fill="#f6f6f6" textLength="43.1" lengthAdjust="spacingAndGlyphs">64,9747</text>
<text x="1107.5" y="546" font-size="12.3" fill="#f6f6f6" textLength="49.85" lengthAdjust="spacingAndGlyphs">211,6419</text>
<text x="1163.8" y="546" font-size="12.3" fill="#f6f6f6" textLength="49.85" lengthAdjust="spacingAndGlyphs">410,5512</text>
<rect x="715.8" y="552.1" width="467.8" height="22.4" fill="#383838"/>
<text x="725.7" y="568.3" font-size="13.5" fill="#f4f4f4" font-weight="bold" textLength="47.5" lengthAdjust="spacingAndGlyphs">ΔE 2000</text>
<text x="785.6" y="568.3" font-size="12.3" fill="#f6f6f6" textLength="43.1" lengthAdjust="spacingAndGlyphs">14,7804</text>
<text x="841.8" y="568.3" font-size="12.3" fill="#f6f6f6" textLength="36.35" lengthAdjust="spacingAndGlyphs">7,9337</text>
<text x="890.8" y="568.3" font-size="12.3" fill="#f6f6f6" textLength="43.1" lengthAdjust="spacingAndGlyphs">10,4076</text>
<text x="946.7" y="568.3" font-size="12.3" fill="#f6f6f6" textLength="36.35" lengthAdjust="spacingAndGlyphs">8,5970</text>
<text x="995.8" y="568.3" font-size="12.3" fill="#f6f6f6" textLength="36.35" lengthAdjust="spacingAndGlyphs">8,6276</text>
<text x="1052" y="568.3" font-size="12.3" fill="#f6f6f6" textLength="43.1" lengthAdjust="spacingAndGlyphs">13,2866</text>
<text x="1107.5" y="568.3" font-size="12.3" fill="#f6f6f6" textLength="36.35" lengthAdjust="spacingAndGlyphs">6,9696</text>
<text x="1163.8" y="568.3" font-size="12.3" fill="#f6f6f6" textLength="43.1" lengthAdjust="spacingAndGlyphs">15,8327</text>
<rect x="715.8" y="574.4" width="467.8" height="22.4" fill="#6c6c6c"/>
<text x="725.7" y="590.6" font-size="13.5" fill="#f4f4f4" font-weight="bold" textLength="38" lengthAdjust="spacingAndGlyphs">ΔE ITP</text>
<text x="785.6" y="590.6" font-size="12.3" fill="#f6f6f6" textLength="43.1" lengthAdjust="spacingAndGlyphs">26,4316</text>
<text x="841.8" y="590.6" font-size="12.3" fill="#f6f6f6" textLength="43.1" lengthAdjust="spacingAndGlyphs">55,1610</text>
<text x="890.8" y="590.6" font-size="12.3" fill="#f6f6f6" textLength="43.1" lengthAdjust="spacingAndGlyphs">41,4378</text>
<text x="946.7" y="590.6" font-size="12.3" fill="#f6f6f6" textLength="43.1" lengthAdjust="spacingAndGlyphs">42,2259</text>
<text x="995.8" y="590.6" font-size="12.3" fill="#f6f6f6" textLength="43.1" lengthAdjust="spacingAndGlyphs">29,1227</text>
<text x="1052" y="590.6" font-size="12.3" fill="#f6f6f6" textLength="43.1" lengthAdjust="spacingAndGlyphs">49,6577</text>
<text x="1107.5" y="590.6" font-size="12.3" fill="#f6f6f6" textLength="43.1" lengthAdjust="spacingAndGlyphs">24,6946</text>
<text x="1163.8" y="590.6" font-size="12.3" fill="#f6f6f6" textLength="43.1" lengthAdjust="spacingAndGlyphs">28,4410</text>
</g>
<rect x="1171.2" y="463" width="12" height="123" fill="#5c5c5c"/>
<rect x="1172.2" y="478.8" width="10" height="75" rx="4.5" fill="#464646"/>
<rect x="1172" y="464.5" width="10.5" height="12.5" rx="2.5" fill="#787878"/><rect x="1172" y="572.3" width="10.5" height="12.5" rx="2.5" fill="#787878"/>
<path d="M1173.3 473.6l4-5 4 5z" fill="#3c3c3c"/><path d="M1173.3 575.8l4 5 4-5z" fill="#3c3c3c"/>
<rect x="715.8" y="585.8" width="455.2" height="13.4" fill="#5a5a5a"/>
<rect x="729" y="587" width="389.7" height="11" rx="5" fill="#474747"/>
<rect x="717" y="587" width="10.5" height="11" rx="2.5" fill="#6c6c6c"/><rect x="1160" y="587" width="10.5" height="11" rx="2.5" fill="#6c6c6c"/>
<path d="M724.6 588.5l-5 4 5 4z" fill="#333"/><path d="M1163 588.5l5 4-5 4z" fill="#333"/>
<rect x="1171" y="585.8" width="12.3" height="13.4" fill="#333"/>
<path d="M715.8 599V439H1183.6V599.5" fill="none" stroke="#161616" stroke-width="1.2"/>
<path d="M1.3 673V627.5a4 4 0 0 1 4-4h106.2a4 4 0 0 1 4 4V673z" fill="#222"/>
<rect x="5" y="627" width="106.5" height="30" rx="3" fill="#bebebe" stroke="#111" stroke-width="1"/>
<text x="58.3" y="669.8" font-size="9.3" fill="#fff" text-anchor="middle" font-weight="bold">White</text>
<path d="M117.4 673V626.8a4 4 0 0 1 4-4h106.2a4 4 0 0 1 4 4V673z" fill="url(#tile)" stroke="#3c3c3c" stroke-width="1"/>
<rect x="121.6" y="627" width="106" height="30" rx="3" fill="#c00000" stroke="#444" stroke-opacity=".6" stroke-width="1"/>
<text x="174.4" y="669.6" font-size="9" fill="#202020" text-anchor="middle" stroke="#202020" stroke-width=".3">Red</text>
<path d="M233.5 673V626.8a4 4 0 0 1 4-4h106.2a4 4 0 0 1 4 4V673z" fill="url(#tile)" stroke="#3c3c3c" stroke-width="1"/>
<rect x="237.7" y="627" width="106" height="30" rx="3" fill="#00c000" stroke="#444" stroke-opacity=".6" stroke-width="1"/>
<text x="290.5" y="669.6" font-size="9" fill="#202020" text-anchor="middle" stroke="#202020" stroke-width=".3">Green</text>
<path d="M349.6 673V626.8a4 4 0 0 1 4-4h106.2a4 4 0 0 1 4 4V673z" fill="url(#tile)" stroke="#3c3c3c" stroke-width="1"/>
<rect x="353.8" y="627" width="106" height="30" rx="3" fill="#0000c0" stroke="#444" stroke-opacity=".6" stroke-width="1"/>
<text x="406.6" y="669.6" font-size="9" fill="#202020" text-anchor="middle" stroke="#202020" stroke-width=".3">Blue</text>
<path d="M465.7 673V626.8a4 4 0 0 1 4-4h106.2a4 4 0 0 1 4 4V673z" fill="url(#tile)" stroke="#3c3c3c" stroke-width="1"/>
<rect x="469.9" y="627" width="106" height="30" rx="3" fill="#00c0c0" stroke="#444" stroke-opacity=".6" stroke-width="1"/>
<text x="522.7" y="669.6" font-size="9" fill="#202020" text-anchor="middle" stroke="#202020" stroke-width=".3">Cyan</text>
<path d="M581.8 673V626.8a4 4 0 0 1 4-4h106.2a4 4 0 0 1 4 4V673z" fill="url(#tile)" stroke="#3c3c3c" stroke-width="1"/>
<rect x="586" y="627" width="106" height="30" rx="3" fill="#c000c0" stroke="#444" stroke-opacity=".6" stroke-width="1"/>
<text x="638.8" y="669.6" font-size="9" fill="#202020" text-anchor="middle" stroke="#202020" stroke-width=".3">Magenta</text>
<path d="M697.9 673V626.8a4 4 0 0 1 4-4h106.2a4 4 0 0 1 4 4V673z" fill="url(#tile)" stroke="#3c3c3c" stroke-width="1"/>
<rect x="702.1" y="627" width="106" height="30" rx="3" fill="#c0c000" stroke="#444" stroke-opacity=".6" stroke-width="1"/>
<text x="754.9" y="669.6" font-size="9" fill="#202020" text-anchor="middle" stroke="#202020" stroke-width=".3">Yellow</text>
<path d="M814 673V626.8a4 4 0 0 1 4-4h106.2a4 4 0 0 1 4 4V673z" fill="url(#tile)" stroke="#3c3c3c" stroke-width="1"/>
<rect x="817.5" y="626.5" width="107" height="31" rx="4" fill="#fff" filter="url(#glow)"/>
<rect x="818.2" y="627" width="106" height="30" rx="3" fill="#fff" stroke="#444" stroke-opacity=".6" stroke-width="1"/>
<text x="871" y="669.6" font-size="9" fill="#202020" text-anchor="middle" stroke="#202020" stroke-width=".3">100W</text>
<path d="M930 621.5H1161V648H1200V673H930z" fill="#282828"/>
<rect x="931.3" y="622.5" width="39.5" height="15" fill="url(#btn)"/>
<rect x="931.3" y="638.8" width="39.5" height="34.2" fill="url(#btn)"/>
<rect x="972" y="622.5" width="38" height="25" fill="url(#btn)"/>
<rect x="1010.8" y="622.5" width="36.8" height="25" fill="url(#btn)"/>
<rect x="1048.8" y="622.5" width="36.2" height="25" fill="url(#btn)"/>
<rect x="1086.2" y="622.5" width="35.8" height="25" fill="url(#btn)"/>
<rect x="1123.2" y="622.5" width="36.8" height="25" fill="url(#btn)"/>
<rect x="972" y="648.8" width="113" height="24.2" fill="url(#btn)"/>
<rect x="1086.2" y="648.8" width="111.8" height="24.2" fill="url(#btn)"/>
<ellipse cx="951" cy="630" rx="7.5" ry="5.5" fill="url(#circ)"/><path d="M947 632.5l4-4.5 4 4.5z" fill="#222"/>
<rect x="938" y="644" width="24.5" height="24" rx="4" fill="url(#gloss)" stroke="#1e1e1e" stroke-width="1.8"/><rect x="945" y="650.5" width="12" height="11.5" fill="#0a0a0a"/>
<circle cx="990.8" cy="635.5" r="8.2" fill="url(#circ)"/>
<circle cx="1029.3" cy="635.5" r="8.2" fill="url(#circ)"/>
<circle cx="1066.8" cy="635.5" r="8.2" fill="url(#circ)"/>
<circle cx="1104.3" cy="635.5" r="8.2" fill="url(#circ)"/>
<circle cx="1141.3" cy="635.5" r="8.2" fill="url(#circ)"/>
<rect x="987.3" y="632" width="7" height="7" fill="#1c1c1c"/>
<path d="M1026.3 631.3l7.5 4.2-7.5 4.2z" fill="#1c1c1c"/>
<path d="M1064.3 632h-1.8v7h1.8M1069.3 632h1.8v7h-1.8" stroke="#1c1c1c" stroke-width="1.2" fill="none"/><path d="M1064.6 635.5h4.4" stroke="#1c1c1c" stroke-width="1.2" stroke-dasharray="1 .7"/>
<path d="M1104.3 635.5c-1.3-2.2-4.6-2.2-4.6 0s3.3 2.2 4.6 0c1.3-2.2 4.6-2.2 4.6 0s-3.3 2.2-4.6 0z" stroke="#1c1c1c" stroke-width="1.3" fill="none"/>
<path d="M1137.3 634.5a4.2 4.2 0 0 1 7.4-1.6M1145.3 636.5a4.2 4.2 0 0 1-7.4 1.6" stroke="#1c1c1c" stroke-width="1.6" fill="none"/><path d="M1145.8 630.5v3.6h-3.6zM1136.8 640.5v-3.6h3.6z" fill="#1c1c1c"/>
<g transform="translate(1179.2 635.4)" fill="#1a1a1a" fill-opacity=".55"><path d="M-1.3 -1.2L-2.9 -10.6Q0 -11.8 2.9 -10.6L1.3 -1.2z" transform="rotate(0)"/><path d="M-1.3 -1.2L-2.9 -10.6Q0 -11.8 2.9 -10.6L1.3 -1.2z" transform="rotate(60)"/><path d="M-1.3 -1.2L-2.9 -10.6Q0 -11.8 2.9 -10.6L1.3 -1.2z" transform="rotate(120)"/><path d="M-1.3 -1.2L-2.9 -10.6Q0 -11.8 2.9 -10.6L1.3 -1.2z" transform="rotate(180)"/><path d="M-1.3 -1.2L-2.9 -10.6Q0 -11.8 2.9 -10.6L1.3 -1.2z" transform="rotate(240)"/><path d="M-1.3 -1.2L-2.9 -10.6Q0 -11.8 2.9 -10.6L1.3 -1.2z" transform="rotate(300)"/><circle r="2.6"/></g>
<g transform="translate(1178.4 634.4)" fill="#f01010"><path d="M-1.3 -1.2L-2.9 -10.6Q0 -11.8 2.9 -10.6L1.3 -1.2z" transform="rotate(0)"/><path d="M-1.3 -1.2L-2.9 -10.6Q0 -11.8 2.9 -10.6L1.3 -1.2z" transform="rotate(60)"/><path d="M-1.3 -1.2L-2.9 -10.6Q0 -11.8 2.9 -10.6L1.3 -1.2z" transform="rotate(120)"/><path d="M-1.3 -1.2L-2.9 -10.6Q0 -11.8 2.9 -10.6L1.3 -1.2z" transform="rotate(180)"/><path d="M-1.3 -1.2L-2.9 -10.6Q0 -11.8 2.9 -10.6L1.3 -1.2z" transform="rotate(240)"/><path d="M-1.3 -1.2L-2.9 -10.6Q0 -11.8 2.9 -10.6L1.3 -1.2z" transform="rotate(300)"/><circle r="2.6"/></g>
<circle cx="997.5" cy="661.2" r="8.2" fill="url(#circ)"/><circle cx="1175" cy="661.2" r="8.2" fill="url(#circ)"/>
<path d="M996.8 657.3l-3 3.9 3 3.9M1001 657.3l-3 3.9 3 3.9M1171.5 657.3l3 3.9-3 3.9M1175.7 657.3l3 3.9-3 3.9" stroke="#1c1c1c" stroke-width="1.3" fill="none"/>
<text x="1019.5" y="667.2" font-size="18" fill="#242424" textLength="42" lengthAdjust="spacingAndGlyphs" stroke="#242424" stroke-width=".35">Back</text>
<text x="1108.6" y="667.2" font-size="18" fill="#242424" textLength="42.6" lengthAdjust="spacingAndGlyphs" stroke="#242424" stroke-width=".35">Next</text></svg>
</body></html>
